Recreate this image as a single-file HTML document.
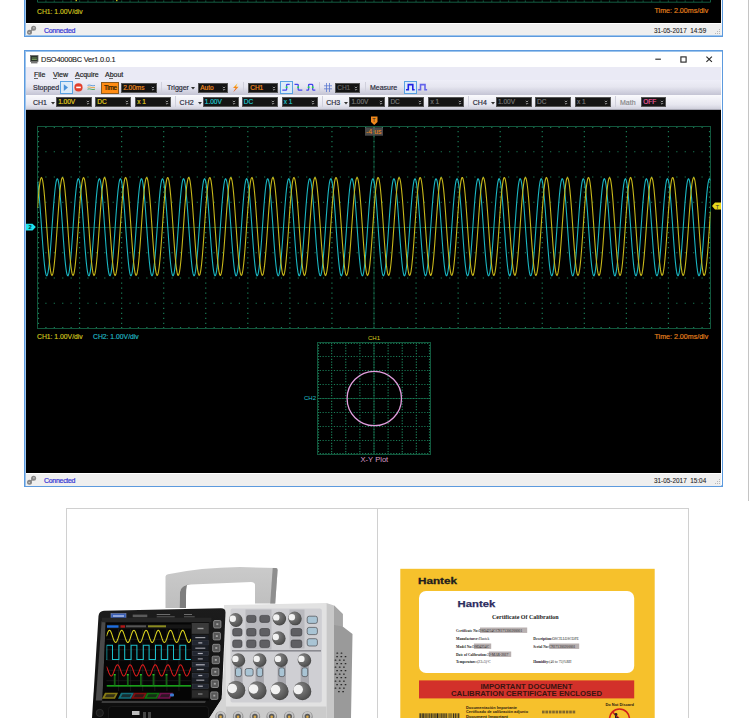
<!DOCTYPE html>
<html><head><meta charset="utf-8"><title>DSO4000BC</title>
<style>
*{box-sizing:border-box}
html,body{margin:0;padding:0;background:#fff}
body{width:750px;height:718px;overflow:hidden;position:relative;font-family:"Liberation Sans", sans-serif}
.a{position:absolute}
.t{position:absolute;white-space:nowrap;line-height:1}
.k{-webkit-text-stroke:0.18px currentColor}
</style></head><body>

<div class="a" style="left:24px;top:-10px;width:699px;height:47px;border:1px solid #5c9ade;border-top:none;background:#f4f4f4;box-shadow:inset 1px 0 0 #9cc4ec, inset 0 -1px 0 #9cc4ec"></div>
<div class="a" style="left:26px;top:0px;width:695px;height:23px;background:#000"></div>
<div class="a" style="left:26px;top:23px;width:695px;height:1px;background:#fff"></div>
<div class="a" style="left:26px;top:24px;width:695px;height:11px;background:#efefef"></div>
<svg class="a" style="left:0;top:0" width="750" height="40">
<path d="M37.5,-5 V2.2 H710.5 V-5" fill="none" stroke="#197a55" stroke-width="1" opacity="0.75"/>
<path d="M45.31,0.5h1.2v1.2h-1.2zM53.72,0.5h1.2v1.2h-1.2zM62.14,0.5h1.2v1.2h-1.2zM70.55,0.5h1.2v1.2h-1.2zM78.96,0.5h1.2v1.2h-1.2zM87.37,0.5h1.2v1.2h-1.2zM95.78,0.5h1.2v1.2h-1.2zM104.20,0.5h1.2v1.2h-1.2zM112.61,0.5h1.2v1.2h-1.2zM121.02,0.5h1.2v1.2h-1.2zM129.43,0.5h1.2v1.2h-1.2zM137.84,0.5h1.2v1.2h-1.2zM146.26,0.5h1.2v1.2h-1.2zM154.67,0.5h1.2v1.2h-1.2zM163.08,0.5h1.2v1.2h-1.2zM171.49,0.5h1.2v1.2h-1.2zM179.90,0.5h1.2v1.2h-1.2zM188.32,0.5h1.2v1.2h-1.2zM196.73,0.5h1.2v1.2h-1.2zM205.14,0.5h1.2v1.2h-1.2zM213.55,0.5h1.2v1.2h-1.2zM221.96,0.5h1.2v1.2h-1.2zM230.38,0.5h1.2v1.2h-1.2zM238.79,0.5h1.2v1.2h-1.2zM247.20,0.5h1.2v1.2h-1.2zM255.61,0.5h1.2v1.2h-1.2zM264.02,0.5h1.2v1.2h-1.2zM272.44,0.5h1.2v1.2h-1.2zM280.85,0.5h1.2v1.2h-1.2zM289.26,0.5h1.2v1.2h-1.2zM297.67,0.5h1.2v1.2h-1.2zM306.08,0.5h1.2v1.2h-1.2zM314.50,0.5h1.2v1.2h-1.2zM322.91,0.5h1.2v1.2h-1.2zM331.32,0.5h1.2v1.2h-1.2zM339.73,0.5h1.2v1.2h-1.2zM348.14,0.5h1.2v1.2h-1.2zM356.56,0.5h1.2v1.2h-1.2zM364.97,0.5h1.2v1.2h-1.2zM373.38,0.5h1.2v1.2h-1.2zM381.79,0.5h1.2v1.2h-1.2zM390.20,0.5h1.2v1.2h-1.2zM398.62,0.5h1.2v1.2h-1.2zM407.03,0.5h1.2v1.2h-1.2zM415.44,0.5h1.2v1.2h-1.2zM423.85,0.5h1.2v1.2h-1.2zM432.26,0.5h1.2v1.2h-1.2zM440.68,0.5h1.2v1.2h-1.2zM449.09,0.5h1.2v1.2h-1.2zM457.50,0.5h1.2v1.2h-1.2zM465.91,0.5h1.2v1.2h-1.2zM474.32,0.5h1.2v1.2h-1.2zM482.74,0.5h1.2v1.2h-1.2zM491.15,0.5h1.2v1.2h-1.2zM499.56,0.5h1.2v1.2h-1.2zM507.97,0.5h1.2v1.2h-1.2zM516.38,0.5h1.2v1.2h-1.2zM524.80,0.5h1.2v1.2h-1.2zM533.21,0.5h1.2v1.2h-1.2zM541.62,0.5h1.2v1.2h-1.2zM550.03,0.5h1.2v1.2h-1.2zM558.44,0.5h1.2v1.2h-1.2zM566.86,0.5h1.2v1.2h-1.2zM575.27,0.5h1.2v1.2h-1.2zM583.68,0.5h1.2v1.2h-1.2zM592.09,0.5h1.2v1.2h-1.2zM600.50,0.5h1.2v1.2h-1.2zM608.92,0.5h1.2v1.2h-1.2zM617.33,0.5h1.2v1.2h-1.2zM625.74,0.5h1.2v1.2h-1.2zM634.15,0.5h1.2v1.2h-1.2zM642.56,0.5h1.2v1.2h-1.2zM650.98,0.5h1.2v1.2h-1.2zM659.39,0.5h1.2v1.2h-1.2zM667.80,0.5h1.2v1.2h-1.2zM676.21,0.5h1.2v1.2h-1.2zM684.62,0.5h1.2v1.2h-1.2zM693.04,0.5h1.2v1.2h-1.2zM701.45,0.5h1.2v1.2h-1.2z" fill="#197a55" opacity="0.7"/>
<rect x="75.5" y="0" width="1.5" height="1.2" fill="#c8b81a"/><rect x="116" y="0" width="1.5" height="1.2" fill="#c8b81a"/>
</svg>
<div class="t" style="left:37px;top:8.5px;font-size:6.8px;color:#d0c41e;-webkit-text-stroke:0.15px #d0c41e">CH1: 1.00V/div</div>
<div class="t" style="left:654.5px;top:7.6px;font-size:7.1px;color:#e6821e;-webkit-text-stroke:0.15px #e6821e">Time: 2.00ms/div</div>
<svg class="a" style="left:24px;top:23px" width="14" height="13"><path d="M9.6,5.2 L5.5,9.2" stroke="#8a8a8a" stroke-width="1.6"/><circle cx="9.6" cy="5.2" r="2.5" fill="#858585"/><circle cx="5.5" cy="9.2" r="2.5" fill="#858585"/><circle cx="9.9" cy="4.9" r="0.8" fill="#c8c8c8"/><circle cx="5.2" cy="9.5" r="0.8" fill="#c8c8c8"/></svg>
<div class="t" style="left:44px;top:27px;font-size:7px;color:#3434d4;letter-spacing:-0.3px;-webkit-text-stroke:0.2px #3434d4">Connected</div>
<div class="t" style="left:654px;top:28px;font-size:6.4px;color:#1a1a1a;-webkit-text-stroke:0.08px #1a1a1a">31-05-2017&nbsp; 14:59</div>
<svg class="a" style="left:714px;top:28px" width="7" height="7" fill="#b8b8b8"><rect x="5" y="1" width="1" height="1"/><rect x="3" y="3" width="1" height="1"/><rect x="5" y="3" width="1" height="1"/><rect x="1" y="5" width="1" height="1"/><rect x="3" y="5" width="1" height="1"/><rect x="5" y="5" width="1" height="1"/></svg>
<div class="a" style="left:24px;top:50px;width:699px;height:437px;border:1px solid #5c9ade;background:#fff;box-shadow:inset 1px 1px 0 #9cc4ec, inset -0px -1px 0 #9cc4ec"></div>
<svg class="a" style="left:30px;top:55px" width="9" height="9"><rect x="0.5" y="0.5" width="7.5" height="6" fill="#2a322a" stroke="#6a6a6a" stroke-width="0.8"/><path d="M1.8,3 H6.8 M1.8,4.5 H6.8" stroke="#7aa060" stroke-width="0.9"/><rect x="1" y="7" width="6.5" height="1.4" fill="#777"/></svg>
<div class="t" style="left:41px;top:55.8px;font-size:7.4px;color:#1a1a1a;letter-spacing:-0.2px;-webkit-text-stroke:0.12px #1a1a1a">DSO4000BC Ver1.0.0.1</div>
<svg class="a" style="left:650px;top:53px" width="70" height="12" stroke="#2a2a2a" stroke-width="1.15" fill="none"><path d="M5.3,6.2 H10.9"/><rect x="30.9" y="3.9" width="5.2" height="5.2"/><path d="M56.4,3.6 L61.9,8.9 M61.9,3.6 L56.4,8.9"/></svg>
<div class="a" style="left:26px;top:67px;width:695px;height:13px;background:#eaeaf5"></div>
<div class="t k" style="left:34px;top:71px;font-size:7px;color:#222">File</div>
<div class="t k" style="left:53px;top:71px;font-size:7px;color:#222">View</div>
<div class="t k" style="left:75px;top:71px;font-size:7px;color:#222">Acquire</div>
<div class="t k" style="left:105px;top:71px;font-size:7px;color:#222">About</div>
<div class="a" style="left:34px;top:77.6px;width:3.5px;height:0.7px;background:#666"></div>
<div class="a" style="left:53px;top:77.6px;width:4px;height:0.7px;background:#666"></div>
<div class="a" style="left:75px;top:77.6px;width:4.5px;height:0.7px;background:#666"></div>
<div class="a" style="left:109px;top:77.6px;width:3.5px;height:0.7px;background:#666"></div>
<div class="a" style="left:26px;top:80px;width:695px;height:15px;background:linear-gradient(#eeeef8,#e6e6f0 45%,#c4c4d4)"></div>
<div class="a" style="left:26px;top:95px;width:695px;height:15px;background:linear-gradient(#fafafd,#e6e6ef 70%,#d0d0dc);border-bottom:1px solid #a8a8b4"></div>
<div class="t k" style="left:33px;top:83.8px;font-size:7px;color:#2a2a3a">Stopped</div>
<div class="a" style="left:60px;top:81px;width:13px;height:13px;background:#ddebf8;border:1.2px solid #5aa2e2"></div>
<svg class="a" style="left:63px;top:84px" width="6" height="8"><path d="M0.8,0.3 L5,3.6 L0.8,7z" fill="#4a92da"/></svg>
<svg class="a" style="left:73.5px;top:83px" width="9" height="9"><circle cx="4.5" cy="4.4" r="4.1" fill="#e2402c"/><rect x="2.2" y="3.6" width="4.6" height="1.6" fill="#fff"/></svg>
<svg class="a" style="left:86.5px;top:84px" width="9" height="7" fill="none" stroke-width="0.9"><path d="M0.5,1.4 Q2,0.6 4,1.4 T8,1.4" stroke="#5a9ad8"/><path d="M0.5,3.3 Q2,2.5 4,3.3 T8,3.3" stroke="#e8a040"/><path d="M0.5,5.2 Q2,4.4 4,5.2 T8,5.2" stroke="#48a860"/></svg>
<div class="a" style="left:101px;top:82px;width:18px;height:12px;background:#ff8c14;border:1px solid #8a5a20"></div>
<div class="t k" style="left:104px;top:84.8px;font-size:6.4px;letter-spacing:-0.3px;color:#241400">Time</div>
<div class="a" style="left:121px;top:83px;width:36px;height:10px;background:#141414;border:1px solid #555"></div>
<div class="t k" style="left:123.2px;top:85px;font-size:6.5px;color:#f08a1c">2.00ms</div>
<svg class="a" style="left:150.5px;top:85.5px" width="5" height="6" fill="none" stroke="#c8c8c8" stroke-width="0.7"><path d="M0.8,0.8 L2,2 L3.2,0.8 M0.8,3 L2,4.2 L3.2,3"/></svg>
<div class="a" style="left:161px;top:82px;width:1px;height:11px;background:#d0d0dc"></div>
<div class="t k" style="left:167px;top:83.8px;font-size:7px;color:#2a2a3a">Trigger</div>
<svg class="a" style="left:191px;top:87px" width="5" height="3"><path d="M0,0 H4 L2,2.5z" fill="#333"/></svg>
<div class="a" style="left:198px;top:83px;width:30px;height:10px;background:#141414;border:1px solid #555"></div>
<div class="t k" style="left:200.2px;top:85px;font-size:6.5px;color:#f08a1c">Auto</div>
<svg class="a" style="left:221.5px;top:85.5px" width="5" height="6" fill="none" stroke="#c8c8c8" stroke-width="0.7"><path d="M0.8,0.8 L2,2 L3.2,0.8 M0.8,3 L2,4.2 L3.2,3"/></svg>
<svg class="a" style="left:232px;top:83px" width="8" height="10"><defs><linearGradient id="lg" x1="0" y1="0" x2="0" y2="1"><stop offset="0" stop-color="#ffd020"/><stop offset="1" stop-color="#e83a10"/></linearGradient></defs><path d="M5.6,0.3 L1,5 H3.6 L1.2,9.3 L6.6,3.8 H4z" fill="url(#lg)"/></svg>
<div class="a" style="left:243px;top:82px;width:1px;height:11px;background:#d0d0dc"></div>
<div class="a" style="left:248px;top:83px;width:30px;height:10px;background:#141414;border:1px solid #555"></div>
<div class="t k" style="left:250.2px;top:85px;font-size:6.5px;color:#f08a1c">CH1</div>
<svg class="a" style="left:271.5px;top:85.5px" width="5" height="6" fill="none" stroke="#c8c8c8" stroke-width="0.7"><path d="M0.8,0.8 L2,2 L3.2,0.8 M0.8,3 L2,4.2 L3.2,3"/></svg>
<div class="a" style="left:280px;top:81px;width:13px;height:13px;background:#ddebf8;border:1.2px solid #5aa2e2"></div>
<svg class="a" style="left:278px;top:79px" width="40" height="16" fill="none" stroke="#4646ee" stroke-width="1.3"><path d="M4.3,11.2 H7.8 Q8.6,11.2 8.6,10.4 V6.1 Q8.6,5.3 9.4,5.3 H11.7"/><path d="M16.5,5.3 H19.4 Q20.2,5.3 20.2,6.1 V10.4 Q20.2,11.2 21,11.2 H24.3"/><path d="M28.3,11.2 H29.8 Q30.6,11.2 30.6,10.4 V6.1 Q30.6,5.3 31.4,5.3 H33.9 Q34.7,5.3 34.7,6.1 V10.4 Q34.7,11.2 35.5,11.2 H37.3"/><g fill="#22e040" stroke="none"><circle cx="8.6" cy="8.3" r="0.95"/><circle cx="20.2" cy="8.3" r="0.95"/><circle cx="30.6" cy="8.3" r="0.95"/><circle cx="34.7" cy="8.3" r="0.95"/></g></svg>
<div class="a" style="left:319px;top:82px;width:1px;height:11px;background:#d0d0dc"></div>
<svg class="a" style="left:323px;top:82px" width="10" height="11" fill="none" stroke="#5a78d0" stroke-width="0.8"><path d="M3.5,1 V10 M6.5,1 V10 M1,3.8 H9 M1,6.8 H9"/></svg>
<div class="a" style="left:335px;top:83px;width:25px;height:10px;background:#141414;border:1px solid #555"></div>
<div class="t k" style="left:337.2px;top:85px;font-size:6.5px;color:#666">CH1</div>
<svg class="a" style="left:353.5px;top:85.5px" width="5" height="6" fill="none" stroke="#c8c8c8" stroke-width="0.7"><path d="M0.8,0.8 L2,2 L3.2,0.8 M0.8,3 L2,4.2 L3.2,3"/></svg>
<div class="a" style="left:365px;top:82px;width:1px;height:11px;background:#d0d0dc"></div>
<div class="t k" style="left:370px;top:83.8px;font-size:7px;color:#2a2a3a">Measure</div>
<div class="a" style="left:404px;top:81px;width:13px;height:13px;background:#ddebf8;border:1.2px solid #5aa2e2"></div>
<svg class="a" style="left:400px;top:79px" width="32" height="16" fill="none" stroke-width="1.6"><path d="M6,10.7 H8.3 V5.6 H12.8 V10.7 H14.7" stroke="#2222e4"/><path d="M418.2,10.7 H420.5 V5.6 H425 V10.7 H427.1" transform="translate(-400 0)" stroke="#6464ea"/></svg>
<div class="t k" style="left:33.0px;top:99px;font-size:7px;color:#2a2a3a">CH1</div>
<svg class="a" style="left:51.0px;top:101.5px" width="5" height="3"><path d="M0,0 H4 L2,2.5z" fill="#333"/></svg>
<div class="a" style="left:56.0px;top:97px;width:36px;height:10px;background:#141414;border:1px solid #555"></div>
<div class="t k" style="left:58.2px;top:99px;font-size:6.5px;color:#e6d21c">1.00V</div>
<svg class="a" style="left:85.5px;top:99.5px" width="5" height="6" fill="none" stroke="#c8c8c8" stroke-width="0.7"><path d="M0.8,0.8 L2,2 L3.2,0.8 M0.8,3 L2,4.2 L3.2,3"/></svg>
<div class="a" style="left:95.0px;top:97px;width:36px;height:10px;background:#141414;border:1px solid #555"></div>
<div class="t k" style="left:97.2px;top:99px;font-size:6.5px;color:#e6d21c">DC</div>
<svg class="a" style="left:124.5px;top:99.5px" width="5" height="6" fill="none" stroke="#c8c8c8" stroke-width="0.7"><path d="M0.8,0.8 L2,2 L3.2,0.8 M0.8,3 L2,4.2 L3.2,3"/></svg>
<div class="a" style="left:135.0px;top:97px;width:36px;height:10px;background:#141414;border:1px solid #555"></div>
<div class="t k" style="left:137.2px;top:99px;font-size:6.5px;color:#e6d21c">x 1</div>
<svg class="a" style="left:164.5px;top:99.5px" width="5" height="6" fill="none" stroke="#c8c8c8" stroke-width="0.7"><path d="M0.8,0.8 L2,2 L3.2,0.8 M0.8,3 L2,4.2 L3.2,3"/></svg>
<div class="a" style="left:175.0px;top:96px;width:1px;height:11px;background:#d0d0dc"></div>
<div class="t k" style="left:179.6px;top:99px;font-size:7px;color:#2a2a3a">CH2</div>
<svg class="a" style="left:197.6px;top:101.5px" width="5" height="3"><path d="M0,0 H4 L2,2.5z" fill="#333"/></svg>
<div class="a" style="left:202.6px;top:97px;width:36px;height:10px;background:#141414;border:1px solid #555"></div>
<div class="t k" style="left:204.79999999999998px;top:99px;font-size:6.5px;color:#22c8d0">1.00V</div>
<svg class="a" style="left:232.1px;top:99.5px" width="5" height="6" fill="none" stroke="#c8c8c8" stroke-width="0.7"><path d="M0.8,0.8 L2,2 L3.2,0.8 M0.8,3 L2,4.2 L3.2,3"/></svg>
<div class="a" style="left:241.6px;top:97px;width:36px;height:10px;background:#141414;border:1px solid #555"></div>
<div class="t k" style="left:243.79999999999998px;top:99px;font-size:6.5px;color:#22c8d0">DC</div>
<svg class="a" style="left:271.1px;top:99.5px" width="5" height="6" fill="none" stroke="#c8c8c8" stroke-width="0.7"><path d="M0.8,0.8 L2,2 L3.2,0.8 M0.8,3 L2,4.2 L3.2,3"/></svg>
<div class="a" style="left:281.6px;top:97px;width:36px;height:10px;background:#141414;border:1px solid #555"></div>
<div class="t k" style="left:283.8px;top:99px;font-size:6.5px;color:#22c8d0">x 1</div>
<svg class="a" style="left:311.1px;top:99.5px" width="5" height="6" fill="none" stroke="#c8c8c8" stroke-width="0.7"><path d="M0.8,0.8 L2,2 L3.2,0.8 M0.8,3 L2,4.2 L3.2,3"/></svg>
<div class="a" style="left:321.6px;top:96px;width:1px;height:11px;background:#d0d0dc"></div>
<div class="t k" style="left:326.2px;top:99px;font-size:7px;color:#2a2a3a">CH3</div>
<svg class="a" style="left:344.2px;top:101.5px" width="5" height="3"><path d="M0,0 H4 L2,2.5z" fill="#333"/></svg>
<div class="a" style="left:349.2px;top:97px;width:36px;height:10px;background:#141414;border:1px solid #555"></div>
<div class="t k" style="left:351.4px;top:99px;font-size:6.5px;color:#777">1.00V</div>
<svg class="a" style="left:378.7px;top:99.5px" width="5" height="6" fill="none" stroke="#c8c8c8" stroke-width="0.7"><path d="M0.8,0.8 L2,2 L3.2,0.8 M0.8,3 L2,4.2 L3.2,3"/></svg>
<div class="a" style="left:388.2px;top:97px;width:36px;height:10px;background:#141414;border:1px solid #555"></div>
<div class="t k" style="left:390.4px;top:99px;font-size:6.5px;color:#777">DC</div>
<svg class="a" style="left:417.7px;top:99.5px" width="5" height="6" fill="none" stroke="#c8c8c8" stroke-width="0.7"><path d="M0.8,0.8 L2,2 L3.2,0.8 M0.8,3 L2,4.2 L3.2,3"/></svg>
<div class="a" style="left:428.2px;top:97px;width:36px;height:10px;background:#141414;border:1px solid #555"></div>
<div class="t k" style="left:430.4px;top:99px;font-size:6.5px;color:#777">x 1</div>
<svg class="a" style="left:457.7px;top:99.5px" width="5" height="6" fill="none" stroke="#c8c8c8" stroke-width="0.7"><path d="M0.8,0.8 L2,2 L3.2,0.8 M0.8,3 L2,4.2 L3.2,3"/></svg>
<div class="a" style="left:468.2px;top:96px;width:1px;height:11px;background:#d0d0dc"></div>
<div class="t k" style="left:472.79999999999995px;top:99px;font-size:7px;color:#2a2a3a">CH4</div>
<svg class="a" style="left:490.79999999999995px;top:101.5px" width="5" height="3"><path d="M0,0 H4 L2,2.5z" fill="#333"/></svg>
<div class="a" style="left:495.79999999999995px;top:97px;width:36px;height:10px;background:#141414;border:1px solid #555"></div>
<div class="t k" style="left:497.99999999999994px;top:99px;font-size:6.5px;color:#777">1.00V</div>
<svg class="a" style="left:525.3px;top:99.5px" width="5" height="6" fill="none" stroke="#c8c8c8" stroke-width="0.7"><path d="M0.8,0.8 L2,2 L3.2,0.8 M0.8,3 L2,4.2 L3.2,3"/></svg>
<div class="a" style="left:534.8px;top:97px;width:36px;height:10px;background:#141414;border:1px solid #555"></div>
<div class="t k" style="left:537.0px;top:99px;font-size:6.5px;color:#777">DC</div>
<svg class="a" style="left:564.3px;top:99.5px" width="5" height="6" fill="none" stroke="#c8c8c8" stroke-width="0.7"><path d="M0.8,0.8 L2,2 L3.2,0.8 M0.8,3 L2,4.2 L3.2,3"/></svg>
<div class="a" style="left:574.8px;top:97px;width:36px;height:10px;background:#141414;border:1px solid #555"></div>
<div class="t k" style="left:577.0px;top:99px;font-size:6.5px;color:#777">x 1</div>
<svg class="a" style="left:604.3px;top:99.5px" width="5" height="6" fill="none" stroke="#c8c8c8" stroke-width="0.7"><path d="M0.8,0.8 L2,2 L3.2,0.8 M0.8,3 L2,4.2 L3.2,3"/></svg>
<div class="a" style="left:614.8px;top:96px;width:1px;height:11px;background:#d0d0dc"></div>
<div class="t k" style="left:620px;top:99px;font-size:7px;color:#888">Math</div>
<div class="a" style="left:641px;top:97px;width:25px;height:10px;background:#141414;border:1px solid #555"></div>
<div class="t k" style="left:643.2px;top:99px;font-size:6.5px;color:#ec5c9c">OFF</div>
<svg class="a" style="left:659.5px;top:99.5px" width="5" height="6" fill="none" stroke="#c8c8c8" stroke-width="0.7"><path d="M0.8,0.8 L2,2 L3.2,0.8 M0.8,3 L2,4.2 L3.2,3"/></svg>
<div class="a" style="left:26px;top:110px;width:695px;height:363px;background:#000"></div>
<div class="a" style="left:26px;top:473px;width:695px;height:1px;background:#fff"></div>
<div class="a" style="left:26px;top:474px;width:695px;height:12px;background:#efefef"></div>
<svg class="a" style="left:24px;top:473px" width="14" height="13"><path d="M9.6,5.2 L5.5,9.2" stroke="#8a8a8a" stroke-width="1.6"/><circle cx="9.6" cy="5.2" r="2.5" fill="#858585"/><circle cx="5.5" cy="9.2" r="2.5" fill="#858585"/><circle cx="9.9" cy="4.9" r="0.8" fill="#c8c8c8"/><circle cx="5.2" cy="9.5" r="0.8" fill="#c8c8c8"/></svg>
<div class="t" style="left:44px;top:477px;font-size:7px;color:#3434d4;letter-spacing:-0.3px;-webkit-text-stroke:0.2px #3434d4">Connected</div>
<div class="t" style="left:654px;top:478px;font-size:6.4px;color:#1a1a1a;-webkit-text-stroke:0.08px #1a1a1a">31-05-2017&nbsp; 15:04</div>
<svg class="a" style="left:714px;top:478px" width="7" height="7" fill="#b8b8b8"><rect x="5" y="1" width="1" height="1"/><rect x="3" y="3" width="1" height="1"/><rect x="5" y="3" width="1" height="1"/><rect x="1" y="5" width="1" height="1"/><rect x="3" y="5" width="1" height="1"/><rect x="5" y="5" width="1" height="1"/></svg>
<svg class="a" style="left:0;top:0" width="750" height="490">
<rect x="37.5" y="126.5" width="673.0" height="202.0" fill="none" stroke="#197a55" stroke-width="1" opacity="0.7"/>
<path d="M374.00,126.5 V328.5 M37.5,227.50 H710.5" stroke="#197a55" stroke-width="1" opacity="0.55"/>
<path d="M78.96,130.95h1.2v1.2h-1.2zM78.96,136.00h1.2v1.2h-1.2zM78.96,141.05h1.2v1.2h-1.2zM78.96,146.10h1.2v1.2h-1.2zM78.96,151.15h1.2v1.2h-1.2zM78.96,156.20h1.2v1.2h-1.2zM78.96,161.25h1.2v1.2h-1.2zM78.96,166.30h1.2v1.2h-1.2zM78.96,171.35h1.2v1.2h-1.2zM78.96,176.40h1.2v1.2h-1.2zM78.96,181.45h1.2v1.2h-1.2zM78.96,186.50h1.2v1.2h-1.2zM78.96,191.55h1.2v1.2h-1.2zM78.96,196.60h1.2v1.2h-1.2zM78.96,201.65h1.2v1.2h-1.2zM78.96,206.70h1.2v1.2h-1.2zM78.96,211.75h1.2v1.2h-1.2zM78.96,216.80h1.2v1.2h-1.2zM78.96,221.85h1.2v1.2h-1.2zM78.96,226.90h1.2v1.2h-1.2zM78.96,231.95h1.2v1.2h-1.2zM78.96,237.00h1.2v1.2h-1.2zM78.96,242.05h1.2v1.2h-1.2zM78.96,247.10h1.2v1.2h-1.2zM78.96,252.15h1.2v1.2h-1.2zM78.96,257.20h1.2v1.2h-1.2zM78.96,262.25h1.2v1.2h-1.2zM78.96,267.30h1.2v1.2h-1.2zM78.96,272.35h1.2v1.2h-1.2zM78.96,277.40h1.2v1.2h-1.2zM78.96,282.45h1.2v1.2h-1.2zM78.96,287.50h1.2v1.2h-1.2zM78.96,292.55h1.2v1.2h-1.2zM78.96,297.60h1.2v1.2h-1.2zM78.96,302.65h1.2v1.2h-1.2zM78.96,307.70h1.2v1.2h-1.2zM78.96,312.75h1.2v1.2h-1.2zM78.96,317.80h1.2v1.2h-1.2zM78.96,322.85h1.2v1.2h-1.2zM121.03,130.95h1.2v1.2h-1.2zM121.03,136.00h1.2v1.2h-1.2zM121.03,141.05h1.2v1.2h-1.2zM121.03,146.10h1.2v1.2h-1.2zM121.03,151.15h1.2v1.2h-1.2zM121.03,156.20h1.2v1.2h-1.2zM121.03,161.25h1.2v1.2h-1.2zM121.03,166.30h1.2v1.2h-1.2zM121.03,171.35h1.2v1.2h-1.2zM121.03,176.40h1.2v1.2h-1.2zM121.03,181.45h1.2v1.2h-1.2zM121.03,186.50h1.2v1.2h-1.2zM121.03,191.55h1.2v1.2h-1.2zM121.03,196.60h1.2v1.2h-1.2zM121.03,201.65h1.2v1.2h-1.2zM121.03,206.70h1.2v1.2h-1.2zM121.03,211.75h1.2v1.2h-1.2zM121.03,216.80h1.2v1.2h-1.2zM121.03,221.85h1.2v1.2h-1.2zM121.03,226.90h1.2v1.2h-1.2zM121.03,231.95h1.2v1.2h-1.2zM121.03,237.00h1.2v1.2h-1.2zM121.03,242.05h1.2v1.2h-1.2zM121.03,247.10h1.2v1.2h-1.2zM121.03,252.15h1.2v1.2h-1.2zM121.03,257.20h1.2v1.2h-1.2zM121.03,262.25h1.2v1.2h-1.2zM121.03,267.30h1.2v1.2h-1.2zM121.03,272.35h1.2v1.2h-1.2zM121.03,277.40h1.2v1.2h-1.2zM121.03,282.45h1.2v1.2h-1.2zM121.03,287.50h1.2v1.2h-1.2zM121.03,292.55h1.2v1.2h-1.2zM121.03,297.60h1.2v1.2h-1.2zM121.03,302.65h1.2v1.2h-1.2zM121.03,307.70h1.2v1.2h-1.2zM121.03,312.75h1.2v1.2h-1.2zM121.03,317.80h1.2v1.2h-1.2zM121.03,322.85h1.2v1.2h-1.2zM163.09,130.95h1.2v1.2h-1.2zM163.09,136.00h1.2v1.2h-1.2zM163.09,141.05h1.2v1.2h-1.2zM163.09,146.10h1.2v1.2h-1.2zM163.09,151.15h1.2v1.2h-1.2zM163.09,156.20h1.2v1.2h-1.2zM163.09,161.25h1.2v1.2h-1.2zM163.09,166.30h1.2v1.2h-1.2zM163.09,171.35h1.2v1.2h-1.2zM163.09,176.40h1.2v1.2h-1.2zM163.09,181.45h1.2v1.2h-1.2zM163.09,186.50h1.2v1.2h-1.2zM163.09,191.55h1.2v1.2h-1.2zM163.09,196.60h1.2v1.2h-1.2zM163.09,201.65h1.2v1.2h-1.2zM163.09,206.70h1.2v1.2h-1.2zM163.09,211.75h1.2v1.2h-1.2zM163.09,216.80h1.2v1.2h-1.2zM163.09,221.85h1.2v1.2h-1.2zM163.09,226.90h1.2v1.2h-1.2zM163.09,231.95h1.2v1.2h-1.2zM163.09,237.00h1.2v1.2h-1.2zM163.09,242.05h1.2v1.2h-1.2zM163.09,247.10h1.2v1.2h-1.2zM163.09,252.15h1.2v1.2h-1.2zM163.09,257.20h1.2v1.2h-1.2zM163.09,262.25h1.2v1.2h-1.2zM163.09,267.30h1.2v1.2h-1.2zM163.09,272.35h1.2v1.2h-1.2zM163.09,277.40h1.2v1.2h-1.2zM163.09,282.45h1.2v1.2h-1.2zM163.09,287.50h1.2v1.2h-1.2zM163.09,292.55h1.2v1.2h-1.2zM163.09,297.60h1.2v1.2h-1.2zM163.09,302.65h1.2v1.2h-1.2zM163.09,307.70h1.2v1.2h-1.2zM163.09,312.75h1.2v1.2h-1.2zM163.09,317.80h1.2v1.2h-1.2zM163.09,322.85h1.2v1.2h-1.2zM205.15,130.95h1.2v1.2h-1.2zM205.15,136.00h1.2v1.2h-1.2zM205.15,141.05h1.2v1.2h-1.2zM205.15,146.10h1.2v1.2h-1.2zM205.15,151.15h1.2v1.2h-1.2zM205.15,156.20h1.2v1.2h-1.2zM205.15,161.25h1.2v1.2h-1.2zM205.15,166.30h1.2v1.2h-1.2zM205.15,171.35h1.2v1.2h-1.2zM205.15,176.40h1.2v1.2h-1.2zM205.15,181.45h1.2v1.2h-1.2zM205.15,186.50h1.2v1.2h-1.2zM205.15,191.55h1.2v1.2h-1.2zM205.15,196.60h1.2v1.2h-1.2zM205.15,201.65h1.2v1.2h-1.2zM205.15,206.70h1.2v1.2h-1.2zM205.15,211.75h1.2v1.2h-1.2zM205.15,216.80h1.2v1.2h-1.2zM205.15,221.85h1.2v1.2h-1.2zM205.15,226.90h1.2v1.2h-1.2zM205.15,231.95h1.2v1.2h-1.2zM205.15,237.00h1.2v1.2h-1.2zM205.15,242.05h1.2v1.2h-1.2zM205.15,247.10h1.2v1.2h-1.2zM205.15,252.15h1.2v1.2h-1.2zM205.15,257.20h1.2v1.2h-1.2zM205.15,262.25h1.2v1.2h-1.2zM205.15,267.30h1.2v1.2h-1.2zM205.15,272.35h1.2v1.2h-1.2zM205.15,277.40h1.2v1.2h-1.2zM205.15,282.45h1.2v1.2h-1.2zM205.15,287.50h1.2v1.2h-1.2zM205.15,292.55h1.2v1.2h-1.2zM205.15,297.60h1.2v1.2h-1.2zM205.15,302.65h1.2v1.2h-1.2zM205.15,307.70h1.2v1.2h-1.2zM205.15,312.75h1.2v1.2h-1.2zM205.15,317.80h1.2v1.2h-1.2zM205.15,322.85h1.2v1.2h-1.2zM247.21,130.95h1.2v1.2h-1.2zM247.21,136.00h1.2v1.2h-1.2zM247.21,141.05h1.2v1.2h-1.2zM247.21,146.10h1.2v1.2h-1.2zM247.21,151.15h1.2v1.2h-1.2zM247.21,156.20h1.2v1.2h-1.2zM247.21,161.25h1.2v1.2h-1.2zM247.21,166.30h1.2v1.2h-1.2zM247.21,171.35h1.2v1.2h-1.2zM247.21,176.40h1.2v1.2h-1.2zM247.21,181.45h1.2v1.2h-1.2zM247.21,186.50h1.2v1.2h-1.2zM247.21,191.55h1.2v1.2h-1.2zM247.21,196.60h1.2v1.2h-1.2zM247.21,201.65h1.2v1.2h-1.2zM247.21,206.70h1.2v1.2h-1.2zM247.21,211.75h1.2v1.2h-1.2zM247.21,216.80h1.2v1.2h-1.2zM247.21,221.85h1.2v1.2h-1.2zM247.21,226.90h1.2v1.2h-1.2zM247.21,231.95h1.2v1.2h-1.2zM247.21,237.00h1.2v1.2h-1.2zM247.21,242.05h1.2v1.2h-1.2zM247.21,247.10h1.2v1.2h-1.2zM247.21,252.15h1.2v1.2h-1.2zM247.21,257.20h1.2v1.2h-1.2zM247.21,262.25h1.2v1.2h-1.2zM247.21,267.30h1.2v1.2h-1.2zM247.21,272.35h1.2v1.2h-1.2zM247.21,277.40h1.2v1.2h-1.2zM247.21,282.45h1.2v1.2h-1.2zM247.21,287.50h1.2v1.2h-1.2zM247.21,292.55h1.2v1.2h-1.2zM247.21,297.60h1.2v1.2h-1.2zM247.21,302.65h1.2v1.2h-1.2zM247.21,307.70h1.2v1.2h-1.2zM247.21,312.75h1.2v1.2h-1.2zM247.21,317.80h1.2v1.2h-1.2zM247.21,322.85h1.2v1.2h-1.2zM289.27,130.95h1.2v1.2h-1.2zM289.27,136.00h1.2v1.2h-1.2zM289.27,141.05h1.2v1.2h-1.2zM289.27,146.10h1.2v1.2h-1.2zM289.27,151.15h1.2v1.2h-1.2zM289.27,156.20h1.2v1.2h-1.2zM289.27,161.25h1.2v1.2h-1.2zM289.27,166.30h1.2v1.2h-1.2zM289.27,171.35h1.2v1.2h-1.2zM289.27,176.40h1.2v1.2h-1.2zM289.27,181.45h1.2v1.2h-1.2zM289.27,186.50h1.2v1.2h-1.2zM289.27,191.55h1.2v1.2h-1.2zM289.27,196.60h1.2v1.2h-1.2zM289.27,201.65h1.2v1.2h-1.2zM289.27,206.70h1.2v1.2h-1.2zM289.27,211.75h1.2v1.2h-1.2zM289.27,216.80h1.2v1.2h-1.2zM289.27,221.85h1.2v1.2h-1.2zM289.27,226.90h1.2v1.2h-1.2zM289.27,231.95h1.2v1.2h-1.2zM289.27,237.00h1.2v1.2h-1.2zM289.27,242.05h1.2v1.2h-1.2zM289.27,247.10h1.2v1.2h-1.2zM289.27,252.15h1.2v1.2h-1.2zM289.27,257.20h1.2v1.2h-1.2zM289.27,262.25h1.2v1.2h-1.2zM289.27,267.30h1.2v1.2h-1.2zM289.27,272.35h1.2v1.2h-1.2zM289.27,277.40h1.2v1.2h-1.2zM289.27,282.45h1.2v1.2h-1.2zM289.27,287.50h1.2v1.2h-1.2zM289.27,292.55h1.2v1.2h-1.2zM289.27,297.60h1.2v1.2h-1.2zM289.27,302.65h1.2v1.2h-1.2zM289.27,307.70h1.2v1.2h-1.2zM289.27,312.75h1.2v1.2h-1.2zM289.27,317.80h1.2v1.2h-1.2zM289.27,322.85h1.2v1.2h-1.2zM331.34,130.95h1.2v1.2h-1.2zM331.34,136.00h1.2v1.2h-1.2zM331.34,141.05h1.2v1.2h-1.2zM331.34,146.10h1.2v1.2h-1.2zM331.34,151.15h1.2v1.2h-1.2zM331.34,156.20h1.2v1.2h-1.2zM331.34,161.25h1.2v1.2h-1.2zM331.34,166.30h1.2v1.2h-1.2zM331.34,171.35h1.2v1.2h-1.2zM331.34,176.40h1.2v1.2h-1.2zM331.34,181.45h1.2v1.2h-1.2zM331.34,186.50h1.2v1.2h-1.2zM331.34,191.55h1.2v1.2h-1.2zM331.34,196.60h1.2v1.2h-1.2zM331.34,201.65h1.2v1.2h-1.2zM331.34,206.70h1.2v1.2h-1.2zM331.34,211.75h1.2v1.2h-1.2zM331.34,216.80h1.2v1.2h-1.2zM331.34,221.85h1.2v1.2h-1.2zM331.34,226.90h1.2v1.2h-1.2zM331.34,231.95h1.2v1.2h-1.2zM331.34,237.00h1.2v1.2h-1.2zM331.34,242.05h1.2v1.2h-1.2zM331.34,247.10h1.2v1.2h-1.2zM331.34,252.15h1.2v1.2h-1.2zM331.34,257.20h1.2v1.2h-1.2zM331.34,262.25h1.2v1.2h-1.2zM331.34,267.30h1.2v1.2h-1.2zM331.34,272.35h1.2v1.2h-1.2zM331.34,277.40h1.2v1.2h-1.2zM331.34,282.45h1.2v1.2h-1.2zM331.34,287.50h1.2v1.2h-1.2zM331.34,292.55h1.2v1.2h-1.2zM331.34,297.60h1.2v1.2h-1.2zM331.34,302.65h1.2v1.2h-1.2zM331.34,307.70h1.2v1.2h-1.2zM331.34,312.75h1.2v1.2h-1.2zM331.34,317.80h1.2v1.2h-1.2zM331.34,322.85h1.2v1.2h-1.2zM373.40,130.95h1.2v1.2h-1.2zM373.40,136.00h1.2v1.2h-1.2zM373.40,141.05h1.2v1.2h-1.2zM373.40,146.10h1.2v1.2h-1.2zM373.40,151.15h1.2v1.2h-1.2zM373.40,156.20h1.2v1.2h-1.2zM373.40,161.25h1.2v1.2h-1.2zM373.40,166.30h1.2v1.2h-1.2zM373.40,171.35h1.2v1.2h-1.2zM373.40,176.40h1.2v1.2h-1.2zM373.40,181.45h1.2v1.2h-1.2zM373.40,186.50h1.2v1.2h-1.2zM373.40,191.55h1.2v1.2h-1.2zM373.40,196.60h1.2v1.2h-1.2zM373.40,201.65h1.2v1.2h-1.2zM373.40,206.70h1.2v1.2h-1.2zM373.40,211.75h1.2v1.2h-1.2zM373.40,216.80h1.2v1.2h-1.2zM373.40,221.85h1.2v1.2h-1.2zM373.40,226.90h1.2v1.2h-1.2zM373.40,231.95h1.2v1.2h-1.2zM373.40,237.00h1.2v1.2h-1.2zM373.40,242.05h1.2v1.2h-1.2zM373.40,247.10h1.2v1.2h-1.2zM373.40,252.15h1.2v1.2h-1.2zM373.40,257.20h1.2v1.2h-1.2zM373.40,262.25h1.2v1.2h-1.2zM373.40,267.30h1.2v1.2h-1.2zM373.40,272.35h1.2v1.2h-1.2zM373.40,277.40h1.2v1.2h-1.2zM373.40,282.45h1.2v1.2h-1.2zM373.40,287.50h1.2v1.2h-1.2zM373.40,292.55h1.2v1.2h-1.2zM373.40,297.60h1.2v1.2h-1.2zM373.40,302.65h1.2v1.2h-1.2zM373.40,307.70h1.2v1.2h-1.2zM373.40,312.75h1.2v1.2h-1.2zM373.40,317.80h1.2v1.2h-1.2zM373.40,322.85h1.2v1.2h-1.2zM415.46,130.95h1.2v1.2h-1.2zM415.46,136.00h1.2v1.2h-1.2zM415.46,141.05h1.2v1.2h-1.2zM415.46,146.10h1.2v1.2h-1.2zM415.46,151.15h1.2v1.2h-1.2zM415.46,156.20h1.2v1.2h-1.2zM415.46,161.25h1.2v1.2h-1.2zM415.46,166.30h1.2v1.2h-1.2zM415.46,171.35h1.2v1.2h-1.2zM415.46,176.40h1.2v1.2h-1.2zM415.46,181.45h1.2v1.2h-1.2zM415.46,186.50h1.2v1.2h-1.2zM415.46,191.55h1.2v1.2h-1.2zM415.46,196.60h1.2v1.2h-1.2zM415.46,201.65h1.2v1.2h-1.2zM415.46,206.70h1.2v1.2h-1.2zM415.46,211.75h1.2v1.2h-1.2zM415.46,216.80h1.2v1.2h-1.2zM415.46,221.85h1.2v1.2h-1.2zM415.46,226.90h1.2v1.2h-1.2zM415.46,231.95h1.2v1.2h-1.2zM415.46,237.00h1.2v1.2h-1.2zM415.46,242.05h1.2v1.2h-1.2zM415.46,247.10h1.2v1.2h-1.2zM415.46,252.15h1.2v1.2h-1.2zM415.46,257.20h1.2v1.2h-1.2zM415.46,262.25h1.2v1.2h-1.2zM415.46,267.30h1.2v1.2h-1.2zM415.46,272.35h1.2v1.2h-1.2zM415.46,277.40h1.2v1.2h-1.2zM415.46,282.45h1.2v1.2h-1.2zM415.46,287.50h1.2v1.2h-1.2zM415.46,292.55h1.2v1.2h-1.2zM415.46,297.60h1.2v1.2h-1.2zM415.46,302.65h1.2v1.2h-1.2zM415.46,307.70h1.2v1.2h-1.2zM415.46,312.75h1.2v1.2h-1.2zM415.46,317.80h1.2v1.2h-1.2zM415.46,322.85h1.2v1.2h-1.2zM457.52,130.95h1.2v1.2h-1.2zM457.52,136.00h1.2v1.2h-1.2zM457.52,141.05h1.2v1.2h-1.2zM457.52,146.10h1.2v1.2h-1.2zM457.52,151.15h1.2v1.2h-1.2zM457.52,156.20h1.2v1.2h-1.2zM457.52,161.25h1.2v1.2h-1.2zM457.52,166.30h1.2v1.2h-1.2zM457.52,171.35h1.2v1.2h-1.2zM457.52,176.40h1.2v1.2h-1.2zM457.52,181.45h1.2v1.2h-1.2zM457.52,186.50h1.2v1.2h-1.2zM457.52,191.55h1.2v1.2h-1.2zM457.52,196.60h1.2v1.2h-1.2zM457.52,201.65h1.2v1.2h-1.2zM457.52,206.70h1.2v1.2h-1.2zM457.52,211.75h1.2v1.2h-1.2zM457.52,216.80h1.2v1.2h-1.2zM457.52,221.85h1.2v1.2h-1.2zM457.52,226.90h1.2v1.2h-1.2zM457.52,231.95h1.2v1.2h-1.2zM457.52,237.00h1.2v1.2h-1.2zM457.52,242.05h1.2v1.2h-1.2zM457.52,247.10h1.2v1.2h-1.2zM457.52,252.15h1.2v1.2h-1.2zM457.52,257.20h1.2v1.2h-1.2zM457.52,262.25h1.2v1.2h-1.2zM457.52,267.30h1.2v1.2h-1.2zM457.52,272.35h1.2v1.2h-1.2zM457.52,277.40h1.2v1.2h-1.2zM457.52,282.45h1.2v1.2h-1.2zM457.52,287.50h1.2v1.2h-1.2zM457.52,292.55h1.2v1.2h-1.2zM457.52,297.60h1.2v1.2h-1.2zM457.52,302.65h1.2v1.2h-1.2zM457.52,307.70h1.2v1.2h-1.2zM457.52,312.75h1.2v1.2h-1.2zM457.52,317.80h1.2v1.2h-1.2zM457.52,322.85h1.2v1.2h-1.2zM499.59,130.95h1.2v1.2h-1.2zM499.59,136.00h1.2v1.2h-1.2zM499.59,141.05h1.2v1.2h-1.2zM499.59,146.10h1.2v1.2h-1.2zM499.59,151.15h1.2v1.2h-1.2zM499.59,156.20h1.2v1.2h-1.2zM499.59,161.25h1.2v1.2h-1.2zM499.59,166.30h1.2v1.2h-1.2zM499.59,171.35h1.2v1.2h-1.2zM499.59,176.40h1.2v1.2h-1.2zM499.59,181.45h1.2v1.2h-1.2zM499.59,186.50h1.2v1.2h-1.2zM499.59,191.55h1.2v1.2h-1.2zM499.59,196.60h1.2v1.2h-1.2zM499.59,201.65h1.2v1.2h-1.2zM499.59,206.70h1.2v1.2h-1.2zM499.59,211.75h1.2v1.2h-1.2zM499.59,216.80h1.2v1.2h-1.2zM499.59,221.85h1.2v1.2h-1.2zM499.59,226.90h1.2v1.2h-1.2zM499.59,231.95h1.2v1.2h-1.2zM499.59,237.00h1.2v1.2h-1.2zM499.59,242.05h1.2v1.2h-1.2zM499.59,247.10h1.2v1.2h-1.2zM499.59,252.15h1.2v1.2h-1.2zM499.59,257.20h1.2v1.2h-1.2zM499.59,262.25h1.2v1.2h-1.2zM499.59,267.30h1.2v1.2h-1.2zM499.59,272.35h1.2v1.2h-1.2zM499.59,277.40h1.2v1.2h-1.2zM499.59,282.45h1.2v1.2h-1.2zM499.59,287.50h1.2v1.2h-1.2zM499.59,292.55h1.2v1.2h-1.2zM499.59,297.60h1.2v1.2h-1.2zM499.59,302.65h1.2v1.2h-1.2zM499.59,307.70h1.2v1.2h-1.2zM499.59,312.75h1.2v1.2h-1.2zM499.59,317.80h1.2v1.2h-1.2zM499.59,322.85h1.2v1.2h-1.2zM541.65,130.95h1.2v1.2h-1.2zM541.65,136.00h1.2v1.2h-1.2zM541.65,141.05h1.2v1.2h-1.2zM541.65,146.10h1.2v1.2h-1.2zM541.65,151.15h1.2v1.2h-1.2zM541.65,156.20h1.2v1.2h-1.2zM541.65,161.25h1.2v1.2h-1.2zM541.65,166.30h1.2v1.2h-1.2zM541.65,171.35h1.2v1.2h-1.2zM541.65,176.40h1.2v1.2h-1.2zM541.65,181.45h1.2v1.2h-1.2zM541.65,186.50h1.2v1.2h-1.2zM541.65,191.55h1.2v1.2h-1.2zM541.65,196.60h1.2v1.2h-1.2zM541.65,201.65h1.2v1.2h-1.2zM541.65,206.70h1.2v1.2h-1.2zM541.65,211.75h1.2v1.2h-1.2zM541.65,216.80h1.2v1.2h-1.2zM541.65,221.85h1.2v1.2h-1.2zM541.65,226.90h1.2v1.2h-1.2zM541.65,231.95h1.2v1.2h-1.2zM541.65,237.00h1.2v1.2h-1.2zM541.65,242.05h1.2v1.2h-1.2zM541.65,247.10h1.2v1.2h-1.2zM541.65,252.15h1.2v1.2h-1.2zM541.65,257.20h1.2v1.2h-1.2zM541.65,262.25h1.2v1.2h-1.2zM541.65,267.30h1.2v1.2h-1.2zM541.65,272.35h1.2v1.2h-1.2zM541.65,277.40h1.2v1.2h-1.2zM541.65,282.45h1.2v1.2h-1.2zM541.65,287.50h1.2v1.2h-1.2zM541.65,292.55h1.2v1.2h-1.2zM541.65,297.60h1.2v1.2h-1.2zM541.65,302.65h1.2v1.2h-1.2zM541.65,307.70h1.2v1.2h-1.2zM541.65,312.75h1.2v1.2h-1.2zM541.65,317.80h1.2v1.2h-1.2zM541.65,322.85h1.2v1.2h-1.2zM583.71,130.95h1.2v1.2h-1.2zM583.71,136.00h1.2v1.2h-1.2zM583.71,141.05h1.2v1.2h-1.2zM583.71,146.10h1.2v1.2h-1.2zM583.71,151.15h1.2v1.2h-1.2zM583.71,156.20h1.2v1.2h-1.2zM583.71,161.25h1.2v1.2h-1.2zM583.71,166.30h1.2v1.2h-1.2zM583.71,171.35h1.2v1.2h-1.2zM583.71,176.40h1.2v1.2h-1.2zM583.71,181.45h1.2v1.2h-1.2zM583.71,186.50h1.2v1.2h-1.2zM583.71,191.55h1.2v1.2h-1.2zM583.71,196.60h1.2v1.2h-1.2zM583.71,201.65h1.2v1.2h-1.2zM583.71,206.70h1.2v1.2h-1.2zM583.71,211.75h1.2v1.2h-1.2zM583.71,216.80h1.2v1.2h-1.2zM583.71,221.85h1.2v1.2h-1.2zM583.71,226.90h1.2v1.2h-1.2zM583.71,231.95h1.2v1.2h-1.2zM583.71,237.00h1.2v1.2h-1.2zM583.71,242.05h1.2v1.2h-1.2zM583.71,247.10h1.2v1.2h-1.2zM583.71,252.15h1.2v1.2h-1.2zM583.71,257.20h1.2v1.2h-1.2zM583.71,262.25h1.2v1.2h-1.2zM583.71,267.30h1.2v1.2h-1.2zM583.71,272.35h1.2v1.2h-1.2zM583.71,277.40h1.2v1.2h-1.2zM583.71,282.45h1.2v1.2h-1.2zM583.71,287.50h1.2v1.2h-1.2zM583.71,292.55h1.2v1.2h-1.2zM583.71,297.60h1.2v1.2h-1.2zM583.71,302.65h1.2v1.2h-1.2zM583.71,307.70h1.2v1.2h-1.2zM583.71,312.75h1.2v1.2h-1.2zM583.71,317.80h1.2v1.2h-1.2zM583.71,322.85h1.2v1.2h-1.2zM625.77,130.95h1.2v1.2h-1.2zM625.77,136.00h1.2v1.2h-1.2zM625.77,141.05h1.2v1.2h-1.2zM625.77,146.10h1.2v1.2h-1.2zM625.77,151.15h1.2v1.2h-1.2zM625.77,156.20h1.2v1.2h-1.2zM625.77,161.25h1.2v1.2h-1.2zM625.77,166.30h1.2v1.2h-1.2zM625.77,171.35h1.2v1.2h-1.2zM625.77,176.40h1.2v1.2h-1.2zM625.77,181.45h1.2v1.2h-1.2zM625.77,186.50h1.2v1.2h-1.2zM625.77,191.55h1.2v1.2h-1.2zM625.77,196.60h1.2v1.2h-1.2zM625.77,201.65h1.2v1.2h-1.2zM625.77,206.70h1.2v1.2h-1.2zM625.77,211.75h1.2v1.2h-1.2zM625.77,216.80h1.2v1.2h-1.2zM625.77,221.85h1.2v1.2h-1.2zM625.77,226.90h1.2v1.2h-1.2zM625.77,231.95h1.2v1.2h-1.2zM625.77,237.00h1.2v1.2h-1.2zM625.77,242.05h1.2v1.2h-1.2zM625.77,247.10h1.2v1.2h-1.2zM625.77,252.15h1.2v1.2h-1.2zM625.77,257.20h1.2v1.2h-1.2zM625.77,262.25h1.2v1.2h-1.2zM625.77,267.30h1.2v1.2h-1.2zM625.77,272.35h1.2v1.2h-1.2zM625.77,277.40h1.2v1.2h-1.2zM625.77,282.45h1.2v1.2h-1.2zM625.77,287.50h1.2v1.2h-1.2zM625.77,292.55h1.2v1.2h-1.2zM625.77,297.60h1.2v1.2h-1.2zM625.77,302.65h1.2v1.2h-1.2zM625.77,307.70h1.2v1.2h-1.2zM625.77,312.75h1.2v1.2h-1.2zM625.77,317.80h1.2v1.2h-1.2zM625.77,322.85h1.2v1.2h-1.2zM667.84,130.95h1.2v1.2h-1.2zM667.84,136.00h1.2v1.2h-1.2zM667.84,141.05h1.2v1.2h-1.2zM667.84,146.10h1.2v1.2h-1.2zM667.84,151.15h1.2v1.2h-1.2zM667.84,156.20h1.2v1.2h-1.2zM667.84,161.25h1.2v1.2h-1.2zM667.84,166.30h1.2v1.2h-1.2zM667.84,171.35h1.2v1.2h-1.2zM667.84,176.40h1.2v1.2h-1.2zM667.84,181.45h1.2v1.2h-1.2zM667.84,186.50h1.2v1.2h-1.2zM667.84,191.55h1.2v1.2h-1.2zM667.84,196.60h1.2v1.2h-1.2zM667.84,201.65h1.2v1.2h-1.2zM667.84,206.70h1.2v1.2h-1.2zM667.84,211.75h1.2v1.2h-1.2zM667.84,216.80h1.2v1.2h-1.2zM667.84,221.85h1.2v1.2h-1.2zM667.84,226.90h1.2v1.2h-1.2zM667.84,231.95h1.2v1.2h-1.2zM667.84,237.00h1.2v1.2h-1.2zM667.84,242.05h1.2v1.2h-1.2zM667.84,247.10h1.2v1.2h-1.2zM667.84,252.15h1.2v1.2h-1.2zM667.84,257.20h1.2v1.2h-1.2zM667.84,262.25h1.2v1.2h-1.2zM667.84,267.30h1.2v1.2h-1.2zM667.84,272.35h1.2v1.2h-1.2zM667.84,277.40h1.2v1.2h-1.2zM667.84,282.45h1.2v1.2h-1.2zM667.84,287.50h1.2v1.2h-1.2zM667.84,292.55h1.2v1.2h-1.2zM667.84,297.60h1.2v1.2h-1.2zM667.84,302.65h1.2v1.2h-1.2zM667.84,307.70h1.2v1.2h-1.2zM667.84,312.75h1.2v1.2h-1.2zM667.84,317.80h1.2v1.2h-1.2zM667.84,322.85h1.2v1.2h-1.2zM45.31,151.15h1.2v1.2h-1.2zM53.73,151.15h1.2v1.2h-1.2zM62.14,151.15h1.2v1.2h-1.2zM70.55,151.15h1.2v1.2h-1.2zM78.96,151.15h1.2v1.2h-1.2zM87.38,151.15h1.2v1.2h-1.2zM95.79,151.15h1.2v1.2h-1.2zM104.20,151.15h1.2v1.2h-1.2zM112.61,151.15h1.2v1.2h-1.2zM121.03,151.15h1.2v1.2h-1.2zM129.44,151.15h1.2v1.2h-1.2zM137.85,151.15h1.2v1.2h-1.2zM146.26,151.15h1.2v1.2h-1.2zM154.68,151.15h1.2v1.2h-1.2zM163.09,151.15h1.2v1.2h-1.2zM171.50,151.15h1.2v1.2h-1.2zM179.91,151.15h1.2v1.2h-1.2zM188.33,151.15h1.2v1.2h-1.2zM196.74,151.15h1.2v1.2h-1.2zM205.15,151.15h1.2v1.2h-1.2zM213.56,151.15h1.2v1.2h-1.2zM221.97,151.15h1.2v1.2h-1.2zM230.39,151.15h1.2v1.2h-1.2zM238.80,151.15h1.2v1.2h-1.2zM247.21,151.15h1.2v1.2h-1.2zM255.63,151.15h1.2v1.2h-1.2zM264.04,151.15h1.2v1.2h-1.2zM272.45,151.15h1.2v1.2h-1.2zM280.86,151.15h1.2v1.2h-1.2zM289.27,151.15h1.2v1.2h-1.2zM297.69,151.15h1.2v1.2h-1.2zM306.10,151.15h1.2v1.2h-1.2zM314.51,151.15h1.2v1.2h-1.2zM322.92,151.15h1.2v1.2h-1.2zM331.34,151.15h1.2v1.2h-1.2zM339.75,151.15h1.2v1.2h-1.2zM348.16,151.15h1.2v1.2h-1.2zM356.57,151.15h1.2v1.2h-1.2zM364.99,151.15h1.2v1.2h-1.2zM373.40,151.15h1.2v1.2h-1.2zM381.81,151.15h1.2v1.2h-1.2zM390.22,151.15h1.2v1.2h-1.2zM398.64,151.15h1.2v1.2h-1.2zM407.05,151.15h1.2v1.2h-1.2zM415.46,151.15h1.2v1.2h-1.2zM423.88,151.15h1.2v1.2h-1.2zM432.29,151.15h1.2v1.2h-1.2zM440.70,151.15h1.2v1.2h-1.2zM449.11,151.15h1.2v1.2h-1.2zM457.52,151.15h1.2v1.2h-1.2zM465.94,151.15h1.2v1.2h-1.2zM474.35,151.15h1.2v1.2h-1.2zM482.76,151.15h1.2v1.2h-1.2zM491.17,151.15h1.2v1.2h-1.2zM499.59,151.15h1.2v1.2h-1.2zM508.00,151.15h1.2v1.2h-1.2zM516.41,151.15h1.2v1.2h-1.2zM524.82,151.15h1.2v1.2h-1.2zM533.24,151.15h1.2v1.2h-1.2zM541.65,151.15h1.2v1.2h-1.2zM550.06,151.15h1.2v1.2h-1.2zM558.48,151.15h1.2v1.2h-1.2zM566.89,151.15h1.2v1.2h-1.2zM575.30,151.15h1.2v1.2h-1.2zM583.71,151.15h1.2v1.2h-1.2zM592.12,151.15h1.2v1.2h-1.2zM600.54,151.15h1.2v1.2h-1.2zM608.95,151.15h1.2v1.2h-1.2zM617.36,151.15h1.2v1.2h-1.2zM625.77,151.15h1.2v1.2h-1.2zM634.19,151.15h1.2v1.2h-1.2zM642.60,151.15h1.2v1.2h-1.2zM651.01,151.15h1.2v1.2h-1.2zM659.42,151.15h1.2v1.2h-1.2zM667.84,151.15h1.2v1.2h-1.2zM676.25,151.15h1.2v1.2h-1.2zM684.66,151.15h1.2v1.2h-1.2zM693.07,151.15h1.2v1.2h-1.2zM701.49,151.15h1.2v1.2h-1.2zM45.31,176.40h1.2v1.2h-1.2zM53.73,176.40h1.2v1.2h-1.2zM62.14,176.40h1.2v1.2h-1.2zM70.55,176.40h1.2v1.2h-1.2zM78.96,176.40h1.2v1.2h-1.2zM87.38,176.40h1.2v1.2h-1.2zM95.79,176.40h1.2v1.2h-1.2zM104.20,176.40h1.2v1.2h-1.2zM112.61,176.40h1.2v1.2h-1.2zM121.03,176.40h1.2v1.2h-1.2zM129.44,176.40h1.2v1.2h-1.2zM137.85,176.40h1.2v1.2h-1.2zM146.26,176.40h1.2v1.2h-1.2zM154.68,176.40h1.2v1.2h-1.2zM163.09,176.40h1.2v1.2h-1.2zM171.50,176.40h1.2v1.2h-1.2zM179.91,176.40h1.2v1.2h-1.2zM188.33,176.40h1.2v1.2h-1.2zM196.74,176.40h1.2v1.2h-1.2zM205.15,176.40h1.2v1.2h-1.2zM213.56,176.40h1.2v1.2h-1.2zM221.97,176.40h1.2v1.2h-1.2zM230.39,176.40h1.2v1.2h-1.2zM238.80,176.40h1.2v1.2h-1.2zM247.21,176.40h1.2v1.2h-1.2zM255.63,176.40h1.2v1.2h-1.2zM264.04,176.40h1.2v1.2h-1.2zM272.45,176.40h1.2v1.2h-1.2zM280.86,176.40h1.2v1.2h-1.2zM289.27,176.40h1.2v1.2h-1.2zM297.69,176.40h1.2v1.2h-1.2zM306.10,176.40h1.2v1.2h-1.2zM314.51,176.40h1.2v1.2h-1.2zM322.92,176.40h1.2v1.2h-1.2zM331.34,176.40h1.2v1.2h-1.2zM339.75,176.40h1.2v1.2h-1.2zM348.16,176.40h1.2v1.2h-1.2zM356.57,176.40h1.2v1.2h-1.2zM364.99,176.40h1.2v1.2h-1.2zM373.40,176.40h1.2v1.2h-1.2zM381.81,176.40h1.2v1.2h-1.2zM390.22,176.40h1.2v1.2h-1.2zM398.64,176.40h1.2v1.2h-1.2zM407.05,176.40h1.2v1.2h-1.2zM415.46,176.40h1.2v1.2h-1.2zM423.88,176.40h1.2v1.2h-1.2zM432.29,176.40h1.2v1.2h-1.2zM440.70,176.40h1.2v1.2h-1.2zM449.11,176.40h1.2v1.2h-1.2zM457.52,176.40h1.2v1.2h-1.2zM465.94,176.40h1.2v1.2h-1.2zM474.35,176.40h1.2v1.2h-1.2zM482.76,176.40h1.2v1.2h-1.2zM491.17,176.40h1.2v1.2h-1.2zM499.59,176.40h1.2v1.2h-1.2zM508.00,176.40h1.2v1.2h-1.2zM516.41,176.40h1.2v1.2h-1.2zM524.82,176.40h1.2v1.2h-1.2zM533.24,176.40h1.2v1.2h-1.2zM541.65,176.40h1.2v1.2h-1.2zM550.06,176.40h1.2v1.2h-1.2zM558.48,176.40h1.2v1.2h-1.2zM566.89,176.40h1.2v1.2h-1.2zM575.30,176.40h1.2v1.2h-1.2zM583.71,176.40h1.2v1.2h-1.2zM592.12,176.40h1.2v1.2h-1.2zM600.54,176.40h1.2v1.2h-1.2zM608.95,176.40h1.2v1.2h-1.2zM617.36,176.40h1.2v1.2h-1.2zM625.77,176.40h1.2v1.2h-1.2zM634.19,176.40h1.2v1.2h-1.2zM642.60,176.40h1.2v1.2h-1.2zM651.01,176.40h1.2v1.2h-1.2zM659.42,176.40h1.2v1.2h-1.2zM667.84,176.40h1.2v1.2h-1.2zM676.25,176.40h1.2v1.2h-1.2zM684.66,176.40h1.2v1.2h-1.2zM693.07,176.40h1.2v1.2h-1.2zM701.49,176.40h1.2v1.2h-1.2zM45.31,201.65h1.2v1.2h-1.2zM53.73,201.65h1.2v1.2h-1.2zM62.14,201.65h1.2v1.2h-1.2zM70.55,201.65h1.2v1.2h-1.2zM78.96,201.65h1.2v1.2h-1.2zM87.38,201.65h1.2v1.2h-1.2zM95.79,201.65h1.2v1.2h-1.2zM104.20,201.65h1.2v1.2h-1.2zM112.61,201.65h1.2v1.2h-1.2zM121.03,201.65h1.2v1.2h-1.2zM129.44,201.65h1.2v1.2h-1.2zM137.85,201.65h1.2v1.2h-1.2zM146.26,201.65h1.2v1.2h-1.2zM154.68,201.65h1.2v1.2h-1.2zM163.09,201.65h1.2v1.2h-1.2zM171.50,201.65h1.2v1.2h-1.2zM179.91,201.65h1.2v1.2h-1.2zM188.33,201.65h1.2v1.2h-1.2zM196.74,201.65h1.2v1.2h-1.2zM205.15,201.65h1.2v1.2h-1.2zM213.56,201.65h1.2v1.2h-1.2zM221.97,201.65h1.2v1.2h-1.2zM230.39,201.65h1.2v1.2h-1.2zM238.80,201.65h1.2v1.2h-1.2zM247.21,201.65h1.2v1.2h-1.2zM255.63,201.65h1.2v1.2h-1.2zM264.04,201.65h1.2v1.2h-1.2zM272.45,201.65h1.2v1.2h-1.2zM280.86,201.65h1.2v1.2h-1.2zM289.27,201.65h1.2v1.2h-1.2zM297.69,201.65h1.2v1.2h-1.2zM306.10,201.65h1.2v1.2h-1.2zM314.51,201.65h1.2v1.2h-1.2zM322.92,201.65h1.2v1.2h-1.2zM331.34,201.65h1.2v1.2h-1.2zM339.75,201.65h1.2v1.2h-1.2zM348.16,201.65h1.2v1.2h-1.2zM356.57,201.65h1.2v1.2h-1.2zM364.99,201.65h1.2v1.2h-1.2zM373.40,201.65h1.2v1.2h-1.2zM381.81,201.65h1.2v1.2h-1.2zM390.22,201.65h1.2v1.2h-1.2zM398.64,201.65h1.2v1.2h-1.2zM407.05,201.65h1.2v1.2h-1.2zM415.46,201.65h1.2v1.2h-1.2zM423.88,201.65h1.2v1.2h-1.2zM432.29,201.65h1.2v1.2h-1.2zM440.70,201.65h1.2v1.2h-1.2zM449.11,201.65h1.2v1.2h-1.2zM457.52,201.65h1.2v1.2h-1.2zM465.94,201.65h1.2v1.2h-1.2zM474.35,201.65h1.2v1.2h-1.2zM482.76,201.65h1.2v1.2h-1.2zM491.17,201.65h1.2v1.2h-1.2zM499.59,201.65h1.2v1.2h-1.2zM508.00,201.65h1.2v1.2h-1.2zM516.41,201.65h1.2v1.2h-1.2zM524.82,201.65h1.2v1.2h-1.2zM533.24,201.65h1.2v1.2h-1.2zM541.65,201.65h1.2v1.2h-1.2zM550.06,201.65h1.2v1.2h-1.2zM558.48,201.65h1.2v1.2h-1.2zM566.89,201.65h1.2v1.2h-1.2zM575.30,201.65h1.2v1.2h-1.2zM583.71,201.65h1.2v1.2h-1.2zM592.12,201.65h1.2v1.2h-1.2zM600.54,201.65h1.2v1.2h-1.2zM608.95,201.65h1.2v1.2h-1.2zM617.36,201.65h1.2v1.2h-1.2zM625.77,201.65h1.2v1.2h-1.2zM634.19,201.65h1.2v1.2h-1.2zM642.60,201.65h1.2v1.2h-1.2zM651.01,201.65h1.2v1.2h-1.2zM659.42,201.65h1.2v1.2h-1.2zM667.84,201.65h1.2v1.2h-1.2zM676.25,201.65h1.2v1.2h-1.2zM684.66,201.65h1.2v1.2h-1.2zM693.07,201.65h1.2v1.2h-1.2zM701.49,201.65h1.2v1.2h-1.2zM45.31,226.90h1.2v1.2h-1.2zM53.73,226.90h1.2v1.2h-1.2zM62.14,226.90h1.2v1.2h-1.2zM70.55,226.90h1.2v1.2h-1.2zM78.96,226.90h1.2v1.2h-1.2zM87.38,226.90h1.2v1.2h-1.2zM95.79,226.90h1.2v1.2h-1.2zM104.20,226.90h1.2v1.2h-1.2zM112.61,226.90h1.2v1.2h-1.2zM121.03,226.90h1.2v1.2h-1.2zM129.44,226.90h1.2v1.2h-1.2zM137.85,226.90h1.2v1.2h-1.2zM146.26,226.90h1.2v1.2h-1.2zM154.68,226.90h1.2v1.2h-1.2zM163.09,226.90h1.2v1.2h-1.2zM171.50,226.90h1.2v1.2h-1.2zM179.91,226.90h1.2v1.2h-1.2zM188.33,226.90h1.2v1.2h-1.2zM196.74,226.90h1.2v1.2h-1.2zM205.15,226.90h1.2v1.2h-1.2zM213.56,226.90h1.2v1.2h-1.2zM221.97,226.90h1.2v1.2h-1.2zM230.39,226.90h1.2v1.2h-1.2zM238.80,226.90h1.2v1.2h-1.2zM247.21,226.90h1.2v1.2h-1.2zM255.63,226.90h1.2v1.2h-1.2zM264.04,226.90h1.2v1.2h-1.2zM272.45,226.90h1.2v1.2h-1.2zM280.86,226.90h1.2v1.2h-1.2zM289.27,226.90h1.2v1.2h-1.2zM297.69,226.90h1.2v1.2h-1.2zM306.10,226.90h1.2v1.2h-1.2zM314.51,226.90h1.2v1.2h-1.2zM322.92,226.90h1.2v1.2h-1.2zM331.34,226.90h1.2v1.2h-1.2zM339.75,226.90h1.2v1.2h-1.2zM348.16,226.90h1.2v1.2h-1.2zM356.57,226.90h1.2v1.2h-1.2zM364.99,226.90h1.2v1.2h-1.2zM373.40,226.90h1.2v1.2h-1.2zM381.81,226.90h1.2v1.2h-1.2zM390.22,226.90h1.2v1.2h-1.2zM398.64,226.90h1.2v1.2h-1.2zM407.05,226.90h1.2v1.2h-1.2zM415.46,226.90h1.2v1.2h-1.2zM423.88,226.90h1.2v1.2h-1.2zM432.29,226.90h1.2v1.2h-1.2zM440.70,226.90h1.2v1.2h-1.2zM449.11,226.90h1.2v1.2h-1.2zM457.52,226.90h1.2v1.2h-1.2zM465.94,226.90h1.2v1.2h-1.2zM474.35,226.90h1.2v1.2h-1.2zM482.76,226.90h1.2v1.2h-1.2zM491.17,226.90h1.2v1.2h-1.2zM499.59,226.90h1.2v1.2h-1.2zM508.00,226.90h1.2v1.2h-1.2zM516.41,226.90h1.2v1.2h-1.2zM524.82,226.90h1.2v1.2h-1.2zM533.24,226.90h1.2v1.2h-1.2zM541.65,226.90h1.2v1.2h-1.2zM550.06,226.90h1.2v1.2h-1.2zM558.48,226.90h1.2v1.2h-1.2zM566.89,226.90h1.2v1.2h-1.2zM575.30,226.90h1.2v1.2h-1.2zM583.71,226.90h1.2v1.2h-1.2zM592.12,226.90h1.2v1.2h-1.2zM600.54,226.90h1.2v1.2h-1.2zM608.95,226.90h1.2v1.2h-1.2zM617.36,226.90h1.2v1.2h-1.2zM625.77,226.90h1.2v1.2h-1.2zM634.19,226.90h1.2v1.2h-1.2zM642.60,226.90h1.2v1.2h-1.2zM651.01,226.90h1.2v1.2h-1.2zM659.42,226.90h1.2v1.2h-1.2zM667.84,226.90h1.2v1.2h-1.2zM676.25,226.90h1.2v1.2h-1.2zM684.66,226.90h1.2v1.2h-1.2zM693.07,226.90h1.2v1.2h-1.2zM701.49,226.90h1.2v1.2h-1.2zM45.31,252.15h1.2v1.2h-1.2zM53.73,252.15h1.2v1.2h-1.2zM62.14,252.15h1.2v1.2h-1.2zM70.55,252.15h1.2v1.2h-1.2zM78.96,252.15h1.2v1.2h-1.2zM87.38,252.15h1.2v1.2h-1.2zM95.79,252.15h1.2v1.2h-1.2zM104.20,252.15h1.2v1.2h-1.2zM112.61,252.15h1.2v1.2h-1.2zM121.03,252.15h1.2v1.2h-1.2zM129.44,252.15h1.2v1.2h-1.2zM137.85,252.15h1.2v1.2h-1.2zM146.26,252.15h1.2v1.2h-1.2zM154.68,252.15h1.2v1.2h-1.2zM163.09,252.15h1.2v1.2h-1.2zM171.50,252.15h1.2v1.2h-1.2zM179.91,252.15h1.2v1.2h-1.2zM188.33,252.15h1.2v1.2h-1.2zM196.74,252.15h1.2v1.2h-1.2zM205.15,252.15h1.2v1.2h-1.2zM213.56,252.15h1.2v1.2h-1.2zM221.97,252.15h1.2v1.2h-1.2zM230.39,252.15h1.2v1.2h-1.2zM238.80,252.15h1.2v1.2h-1.2zM247.21,252.15h1.2v1.2h-1.2zM255.63,252.15h1.2v1.2h-1.2zM264.04,252.15h1.2v1.2h-1.2zM272.45,252.15h1.2v1.2h-1.2zM280.86,252.15h1.2v1.2h-1.2zM289.27,252.15h1.2v1.2h-1.2zM297.69,252.15h1.2v1.2h-1.2zM306.10,252.15h1.2v1.2h-1.2zM314.51,252.15h1.2v1.2h-1.2zM322.92,252.15h1.2v1.2h-1.2zM331.34,252.15h1.2v1.2h-1.2zM339.75,252.15h1.2v1.2h-1.2zM348.16,252.15h1.2v1.2h-1.2zM356.57,252.15h1.2v1.2h-1.2zM364.99,252.15h1.2v1.2h-1.2zM373.40,252.15h1.2v1.2h-1.2zM381.81,252.15h1.2v1.2h-1.2zM390.22,252.15h1.2v1.2h-1.2zM398.64,252.15h1.2v1.2h-1.2zM407.05,252.15h1.2v1.2h-1.2zM415.46,252.15h1.2v1.2h-1.2zM423.88,252.15h1.2v1.2h-1.2zM432.29,252.15h1.2v1.2h-1.2zM440.70,252.15h1.2v1.2h-1.2zM449.11,252.15h1.2v1.2h-1.2zM457.52,252.15h1.2v1.2h-1.2zM465.94,252.15h1.2v1.2h-1.2zM474.35,252.15h1.2v1.2h-1.2zM482.76,252.15h1.2v1.2h-1.2zM491.17,252.15h1.2v1.2h-1.2zM499.59,252.15h1.2v1.2h-1.2zM508.00,252.15h1.2v1.2h-1.2zM516.41,252.15h1.2v1.2h-1.2zM524.82,252.15h1.2v1.2h-1.2zM533.24,252.15h1.2v1.2h-1.2zM541.65,252.15h1.2v1.2h-1.2zM550.06,252.15h1.2v1.2h-1.2zM558.48,252.15h1.2v1.2h-1.2zM566.89,252.15h1.2v1.2h-1.2zM575.30,252.15h1.2v1.2h-1.2zM583.71,252.15h1.2v1.2h-1.2zM592.12,252.15h1.2v1.2h-1.2zM600.54,252.15h1.2v1.2h-1.2zM608.95,252.15h1.2v1.2h-1.2zM617.36,252.15h1.2v1.2h-1.2zM625.77,252.15h1.2v1.2h-1.2zM634.19,252.15h1.2v1.2h-1.2zM642.60,252.15h1.2v1.2h-1.2zM651.01,252.15h1.2v1.2h-1.2zM659.42,252.15h1.2v1.2h-1.2zM667.84,252.15h1.2v1.2h-1.2zM676.25,252.15h1.2v1.2h-1.2zM684.66,252.15h1.2v1.2h-1.2zM693.07,252.15h1.2v1.2h-1.2zM701.49,252.15h1.2v1.2h-1.2zM45.31,277.40h1.2v1.2h-1.2zM53.73,277.40h1.2v1.2h-1.2zM62.14,277.40h1.2v1.2h-1.2zM70.55,277.40h1.2v1.2h-1.2zM78.96,277.40h1.2v1.2h-1.2zM87.38,277.40h1.2v1.2h-1.2zM95.79,277.40h1.2v1.2h-1.2zM104.20,277.40h1.2v1.2h-1.2zM112.61,277.40h1.2v1.2h-1.2zM121.03,277.40h1.2v1.2h-1.2zM129.44,277.40h1.2v1.2h-1.2zM137.85,277.40h1.2v1.2h-1.2zM146.26,277.40h1.2v1.2h-1.2zM154.68,277.40h1.2v1.2h-1.2zM163.09,277.40h1.2v1.2h-1.2zM171.50,277.40h1.2v1.2h-1.2zM179.91,277.40h1.2v1.2h-1.2zM188.33,277.40h1.2v1.2h-1.2zM196.74,277.40h1.2v1.2h-1.2zM205.15,277.40h1.2v1.2h-1.2zM213.56,277.40h1.2v1.2h-1.2zM221.97,277.40h1.2v1.2h-1.2zM230.39,277.40h1.2v1.2h-1.2zM238.80,277.40h1.2v1.2h-1.2zM247.21,277.40h1.2v1.2h-1.2zM255.63,277.40h1.2v1.2h-1.2zM264.04,277.40h1.2v1.2h-1.2zM272.45,277.40h1.2v1.2h-1.2zM280.86,277.40h1.2v1.2h-1.2zM289.27,277.40h1.2v1.2h-1.2zM297.69,277.40h1.2v1.2h-1.2zM306.10,277.40h1.2v1.2h-1.2zM314.51,277.40h1.2v1.2h-1.2zM322.92,277.40h1.2v1.2h-1.2zM331.34,277.40h1.2v1.2h-1.2zM339.75,277.40h1.2v1.2h-1.2zM348.16,277.40h1.2v1.2h-1.2zM356.57,277.40h1.2v1.2h-1.2zM364.99,277.40h1.2v1.2h-1.2zM373.40,277.40h1.2v1.2h-1.2zM381.81,277.40h1.2v1.2h-1.2zM390.22,277.40h1.2v1.2h-1.2zM398.64,277.40h1.2v1.2h-1.2zM407.05,277.40h1.2v1.2h-1.2zM415.46,277.40h1.2v1.2h-1.2zM423.88,277.40h1.2v1.2h-1.2zM432.29,277.40h1.2v1.2h-1.2zM440.70,277.40h1.2v1.2h-1.2zM449.11,277.40h1.2v1.2h-1.2zM457.52,277.40h1.2v1.2h-1.2zM465.94,277.40h1.2v1.2h-1.2zM474.35,277.40h1.2v1.2h-1.2zM482.76,277.40h1.2v1.2h-1.2zM491.17,277.40h1.2v1.2h-1.2zM499.59,277.40h1.2v1.2h-1.2zM508.00,277.40h1.2v1.2h-1.2zM516.41,277.40h1.2v1.2h-1.2zM524.82,277.40h1.2v1.2h-1.2zM533.24,277.40h1.2v1.2h-1.2zM541.65,277.40h1.2v1.2h-1.2zM550.06,277.40h1.2v1.2h-1.2zM558.48,277.40h1.2v1.2h-1.2zM566.89,277.40h1.2v1.2h-1.2zM575.30,277.40h1.2v1.2h-1.2zM583.71,277.40h1.2v1.2h-1.2zM592.12,277.40h1.2v1.2h-1.2zM600.54,277.40h1.2v1.2h-1.2zM608.95,277.40h1.2v1.2h-1.2zM617.36,277.40h1.2v1.2h-1.2zM625.77,277.40h1.2v1.2h-1.2zM634.19,277.40h1.2v1.2h-1.2zM642.60,277.40h1.2v1.2h-1.2zM651.01,277.40h1.2v1.2h-1.2zM659.42,277.40h1.2v1.2h-1.2zM667.84,277.40h1.2v1.2h-1.2zM676.25,277.40h1.2v1.2h-1.2zM684.66,277.40h1.2v1.2h-1.2zM693.07,277.40h1.2v1.2h-1.2zM701.49,277.40h1.2v1.2h-1.2zM45.31,302.65h1.2v1.2h-1.2zM53.73,302.65h1.2v1.2h-1.2zM62.14,302.65h1.2v1.2h-1.2zM70.55,302.65h1.2v1.2h-1.2zM78.96,302.65h1.2v1.2h-1.2zM87.38,302.65h1.2v1.2h-1.2zM95.79,302.65h1.2v1.2h-1.2zM104.20,302.65h1.2v1.2h-1.2zM112.61,302.65h1.2v1.2h-1.2zM121.03,302.65h1.2v1.2h-1.2zM129.44,302.65h1.2v1.2h-1.2zM137.85,302.65h1.2v1.2h-1.2zM146.26,302.65h1.2v1.2h-1.2zM154.68,302.65h1.2v1.2h-1.2zM163.09,302.65h1.2v1.2h-1.2zM171.50,302.65h1.2v1.2h-1.2zM179.91,302.65h1.2v1.2h-1.2zM188.33,302.65h1.2v1.2h-1.2zM196.74,302.65h1.2v1.2h-1.2zM205.15,302.65h1.2v1.2h-1.2zM213.56,302.65h1.2v1.2h-1.2zM221.97,302.65h1.2v1.2h-1.2zM230.39,302.65h1.2v1.2h-1.2zM238.80,302.65h1.2v1.2h-1.2zM247.21,302.65h1.2v1.2h-1.2zM255.63,302.65h1.2v1.2h-1.2zM264.04,302.65h1.2v1.2h-1.2zM272.45,302.65h1.2v1.2h-1.2zM280.86,302.65h1.2v1.2h-1.2zM289.27,302.65h1.2v1.2h-1.2zM297.69,302.65h1.2v1.2h-1.2zM306.10,302.65h1.2v1.2h-1.2zM314.51,302.65h1.2v1.2h-1.2zM322.92,302.65h1.2v1.2h-1.2zM331.34,302.65h1.2v1.2h-1.2zM339.75,302.65h1.2v1.2h-1.2zM348.16,302.65h1.2v1.2h-1.2zM356.57,302.65h1.2v1.2h-1.2zM364.99,302.65h1.2v1.2h-1.2zM373.40,302.65h1.2v1.2h-1.2zM381.81,302.65h1.2v1.2h-1.2zM390.22,302.65h1.2v1.2h-1.2zM398.64,302.65h1.2v1.2h-1.2zM407.05,302.65h1.2v1.2h-1.2zM415.46,302.65h1.2v1.2h-1.2zM423.88,302.65h1.2v1.2h-1.2zM432.29,302.65h1.2v1.2h-1.2zM440.70,302.65h1.2v1.2h-1.2zM449.11,302.65h1.2v1.2h-1.2zM457.52,302.65h1.2v1.2h-1.2zM465.94,302.65h1.2v1.2h-1.2zM474.35,302.65h1.2v1.2h-1.2zM482.76,302.65h1.2v1.2h-1.2zM491.17,302.65h1.2v1.2h-1.2zM499.59,302.65h1.2v1.2h-1.2zM508.00,302.65h1.2v1.2h-1.2zM516.41,302.65h1.2v1.2h-1.2zM524.82,302.65h1.2v1.2h-1.2zM533.24,302.65h1.2v1.2h-1.2zM541.65,302.65h1.2v1.2h-1.2zM550.06,302.65h1.2v1.2h-1.2zM558.48,302.65h1.2v1.2h-1.2zM566.89,302.65h1.2v1.2h-1.2zM575.30,302.65h1.2v1.2h-1.2zM583.71,302.65h1.2v1.2h-1.2zM592.12,302.65h1.2v1.2h-1.2zM600.54,302.65h1.2v1.2h-1.2zM608.95,302.65h1.2v1.2h-1.2zM617.36,302.65h1.2v1.2h-1.2zM625.77,302.65h1.2v1.2h-1.2zM634.19,302.65h1.2v1.2h-1.2zM642.60,302.65h1.2v1.2h-1.2zM651.01,302.65h1.2v1.2h-1.2zM659.42,302.65h1.2v1.2h-1.2zM667.84,302.65h1.2v1.2h-1.2zM676.25,302.65h1.2v1.2h-1.2zM684.66,302.65h1.2v1.2h-1.2zM693.07,302.65h1.2v1.2h-1.2zM701.49,302.65h1.2v1.2h-1.2zM45.31,126.90h1.2v1.2h-1.2zM45.31,326.90h1.2v1.2h-1.2zM53.73,126.90h1.2v1.2h-1.2zM53.73,326.90h1.2v1.2h-1.2zM62.14,126.90h1.2v1.2h-1.2zM62.14,326.90h1.2v1.2h-1.2zM70.55,126.90h1.2v1.2h-1.2zM70.55,326.90h1.2v1.2h-1.2zM78.96,126.90h1.2v1.2h-1.2zM78.96,326.90h1.2v1.2h-1.2zM87.38,126.90h1.2v1.2h-1.2zM87.38,326.90h1.2v1.2h-1.2zM95.79,126.90h1.2v1.2h-1.2zM95.79,326.90h1.2v1.2h-1.2zM104.20,126.90h1.2v1.2h-1.2zM104.20,326.90h1.2v1.2h-1.2zM112.61,126.90h1.2v1.2h-1.2zM112.61,326.90h1.2v1.2h-1.2zM121.03,126.90h1.2v1.2h-1.2zM121.03,326.90h1.2v1.2h-1.2zM129.44,126.90h1.2v1.2h-1.2zM129.44,326.90h1.2v1.2h-1.2zM137.85,126.90h1.2v1.2h-1.2zM137.85,326.90h1.2v1.2h-1.2zM146.26,126.90h1.2v1.2h-1.2zM146.26,326.90h1.2v1.2h-1.2zM154.68,126.90h1.2v1.2h-1.2zM154.68,326.90h1.2v1.2h-1.2zM163.09,126.90h1.2v1.2h-1.2zM163.09,326.90h1.2v1.2h-1.2zM171.50,126.90h1.2v1.2h-1.2zM171.50,326.90h1.2v1.2h-1.2zM179.91,126.90h1.2v1.2h-1.2zM179.91,326.90h1.2v1.2h-1.2zM188.33,126.90h1.2v1.2h-1.2zM188.33,326.90h1.2v1.2h-1.2zM196.74,126.90h1.2v1.2h-1.2zM196.74,326.90h1.2v1.2h-1.2zM205.15,126.90h1.2v1.2h-1.2zM205.15,326.90h1.2v1.2h-1.2zM213.56,126.90h1.2v1.2h-1.2zM213.56,326.90h1.2v1.2h-1.2zM221.97,126.90h1.2v1.2h-1.2zM221.97,326.90h1.2v1.2h-1.2zM230.39,126.90h1.2v1.2h-1.2zM230.39,326.90h1.2v1.2h-1.2zM238.80,126.90h1.2v1.2h-1.2zM238.80,326.90h1.2v1.2h-1.2zM247.21,126.90h1.2v1.2h-1.2zM247.21,326.90h1.2v1.2h-1.2zM255.63,126.90h1.2v1.2h-1.2zM255.63,326.90h1.2v1.2h-1.2zM264.04,126.90h1.2v1.2h-1.2zM264.04,326.90h1.2v1.2h-1.2zM272.45,126.90h1.2v1.2h-1.2zM272.45,326.90h1.2v1.2h-1.2zM280.86,126.90h1.2v1.2h-1.2zM280.86,326.90h1.2v1.2h-1.2zM289.27,126.90h1.2v1.2h-1.2zM289.27,326.90h1.2v1.2h-1.2zM297.69,126.90h1.2v1.2h-1.2zM297.69,326.90h1.2v1.2h-1.2zM306.10,126.90h1.2v1.2h-1.2zM306.10,326.90h1.2v1.2h-1.2zM314.51,126.90h1.2v1.2h-1.2zM314.51,326.90h1.2v1.2h-1.2zM322.92,126.90h1.2v1.2h-1.2zM322.92,326.90h1.2v1.2h-1.2zM331.34,126.90h1.2v1.2h-1.2zM331.34,326.90h1.2v1.2h-1.2zM339.75,126.90h1.2v1.2h-1.2zM339.75,326.90h1.2v1.2h-1.2zM348.16,126.90h1.2v1.2h-1.2zM348.16,326.90h1.2v1.2h-1.2zM356.57,126.90h1.2v1.2h-1.2zM356.57,326.90h1.2v1.2h-1.2zM364.99,126.90h1.2v1.2h-1.2zM364.99,326.90h1.2v1.2h-1.2zM373.40,126.90h1.2v1.2h-1.2zM373.40,326.90h1.2v1.2h-1.2zM381.81,126.90h1.2v1.2h-1.2zM381.81,326.90h1.2v1.2h-1.2zM390.22,126.90h1.2v1.2h-1.2zM390.22,326.90h1.2v1.2h-1.2zM398.64,126.90h1.2v1.2h-1.2zM398.64,326.90h1.2v1.2h-1.2zM407.05,126.90h1.2v1.2h-1.2zM407.05,326.90h1.2v1.2h-1.2zM415.46,126.90h1.2v1.2h-1.2zM415.46,326.90h1.2v1.2h-1.2zM423.88,126.90h1.2v1.2h-1.2zM423.88,326.90h1.2v1.2h-1.2zM432.29,126.90h1.2v1.2h-1.2zM432.29,326.90h1.2v1.2h-1.2zM440.70,126.90h1.2v1.2h-1.2zM440.70,326.90h1.2v1.2h-1.2zM449.11,126.90h1.2v1.2h-1.2zM449.11,326.90h1.2v1.2h-1.2zM457.52,126.90h1.2v1.2h-1.2zM457.52,326.90h1.2v1.2h-1.2zM465.94,126.90h1.2v1.2h-1.2zM465.94,326.90h1.2v1.2h-1.2zM474.35,126.90h1.2v1.2h-1.2zM474.35,326.90h1.2v1.2h-1.2zM482.76,126.90h1.2v1.2h-1.2zM482.76,326.90h1.2v1.2h-1.2zM491.17,126.90h1.2v1.2h-1.2zM491.17,326.90h1.2v1.2h-1.2zM499.59,126.90h1.2v1.2h-1.2zM499.59,326.90h1.2v1.2h-1.2zM508.00,126.90h1.2v1.2h-1.2zM508.00,326.90h1.2v1.2h-1.2zM516.41,126.90h1.2v1.2h-1.2zM516.41,326.90h1.2v1.2h-1.2zM524.82,126.90h1.2v1.2h-1.2zM524.82,326.90h1.2v1.2h-1.2zM533.24,126.90h1.2v1.2h-1.2zM533.24,326.90h1.2v1.2h-1.2zM541.65,126.90h1.2v1.2h-1.2zM541.65,326.90h1.2v1.2h-1.2zM550.06,126.90h1.2v1.2h-1.2zM550.06,326.90h1.2v1.2h-1.2zM558.48,126.90h1.2v1.2h-1.2zM558.48,326.90h1.2v1.2h-1.2zM566.89,126.90h1.2v1.2h-1.2zM566.89,326.90h1.2v1.2h-1.2zM575.30,126.90h1.2v1.2h-1.2zM575.30,326.90h1.2v1.2h-1.2zM583.71,126.90h1.2v1.2h-1.2zM583.71,326.90h1.2v1.2h-1.2zM592.12,126.90h1.2v1.2h-1.2zM592.12,326.90h1.2v1.2h-1.2zM600.54,126.90h1.2v1.2h-1.2zM600.54,326.90h1.2v1.2h-1.2zM608.95,126.90h1.2v1.2h-1.2zM608.95,326.90h1.2v1.2h-1.2zM617.36,126.90h1.2v1.2h-1.2zM617.36,326.90h1.2v1.2h-1.2zM625.77,126.90h1.2v1.2h-1.2zM625.77,326.90h1.2v1.2h-1.2zM634.19,126.90h1.2v1.2h-1.2zM634.19,326.90h1.2v1.2h-1.2zM642.60,126.90h1.2v1.2h-1.2zM642.60,326.90h1.2v1.2h-1.2zM651.01,126.90h1.2v1.2h-1.2zM651.01,326.90h1.2v1.2h-1.2zM659.42,126.90h1.2v1.2h-1.2zM659.42,326.90h1.2v1.2h-1.2zM667.84,126.90h1.2v1.2h-1.2zM667.84,326.90h1.2v1.2h-1.2zM676.25,126.90h1.2v1.2h-1.2zM676.25,326.90h1.2v1.2h-1.2zM684.66,126.90h1.2v1.2h-1.2zM684.66,326.90h1.2v1.2h-1.2zM693.07,126.90h1.2v1.2h-1.2zM693.07,326.90h1.2v1.2h-1.2zM701.49,126.90h1.2v1.2h-1.2zM701.49,326.90h1.2v1.2h-1.2zM37.90,130.95h1.2v1.2h-1.2zM708.90,130.95h1.2v1.2h-1.2zM37.90,136.00h1.2v1.2h-1.2zM708.90,136.00h1.2v1.2h-1.2zM37.90,141.05h1.2v1.2h-1.2zM708.90,141.05h1.2v1.2h-1.2zM37.90,146.10h1.2v1.2h-1.2zM708.90,146.10h1.2v1.2h-1.2zM37.90,151.15h1.2v1.2h-1.2zM708.90,151.15h1.2v1.2h-1.2zM37.90,156.20h1.2v1.2h-1.2zM708.90,156.20h1.2v1.2h-1.2zM37.90,161.25h1.2v1.2h-1.2zM708.90,161.25h1.2v1.2h-1.2zM37.90,166.30h1.2v1.2h-1.2zM708.90,166.30h1.2v1.2h-1.2zM37.90,171.35h1.2v1.2h-1.2zM708.90,171.35h1.2v1.2h-1.2zM37.90,176.40h1.2v1.2h-1.2zM708.90,176.40h1.2v1.2h-1.2zM37.90,181.45h1.2v1.2h-1.2zM708.90,181.45h1.2v1.2h-1.2zM37.90,186.50h1.2v1.2h-1.2zM708.90,186.50h1.2v1.2h-1.2zM37.90,191.55h1.2v1.2h-1.2zM708.90,191.55h1.2v1.2h-1.2zM37.90,196.60h1.2v1.2h-1.2zM708.90,196.60h1.2v1.2h-1.2zM37.90,201.65h1.2v1.2h-1.2zM708.90,201.65h1.2v1.2h-1.2zM37.90,206.70h1.2v1.2h-1.2zM708.90,206.70h1.2v1.2h-1.2zM37.90,211.75h1.2v1.2h-1.2zM708.90,211.75h1.2v1.2h-1.2zM37.90,216.80h1.2v1.2h-1.2zM708.90,216.80h1.2v1.2h-1.2zM37.90,221.85h1.2v1.2h-1.2zM708.90,221.85h1.2v1.2h-1.2zM37.90,226.90h1.2v1.2h-1.2zM708.90,226.90h1.2v1.2h-1.2zM37.90,231.95h1.2v1.2h-1.2zM708.90,231.95h1.2v1.2h-1.2zM37.90,237.00h1.2v1.2h-1.2zM708.90,237.00h1.2v1.2h-1.2zM37.90,242.05h1.2v1.2h-1.2zM708.90,242.05h1.2v1.2h-1.2zM37.90,247.10h1.2v1.2h-1.2zM708.90,247.10h1.2v1.2h-1.2zM37.90,252.15h1.2v1.2h-1.2zM708.90,252.15h1.2v1.2h-1.2zM37.90,257.20h1.2v1.2h-1.2zM708.90,257.20h1.2v1.2h-1.2zM37.90,262.25h1.2v1.2h-1.2zM708.90,262.25h1.2v1.2h-1.2zM37.90,267.30h1.2v1.2h-1.2zM708.90,267.30h1.2v1.2h-1.2zM37.90,272.35h1.2v1.2h-1.2zM708.90,272.35h1.2v1.2h-1.2zM37.90,277.40h1.2v1.2h-1.2zM708.90,277.40h1.2v1.2h-1.2zM37.90,282.45h1.2v1.2h-1.2zM708.90,282.45h1.2v1.2h-1.2zM37.90,287.50h1.2v1.2h-1.2zM708.90,287.50h1.2v1.2h-1.2zM37.90,292.55h1.2v1.2h-1.2zM708.90,292.55h1.2v1.2h-1.2zM37.90,297.60h1.2v1.2h-1.2zM708.90,297.60h1.2v1.2h-1.2zM37.90,302.65h1.2v1.2h-1.2zM708.90,302.65h1.2v1.2h-1.2zM37.90,307.70h1.2v1.2h-1.2zM708.90,307.70h1.2v1.2h-1.2zM37.90,312.75h1.2v1.2h-1.2zM708.90,312.75h1.2v1.2h-1.2zM37.90,317.80h1.2v1.2h-1.2zM708.90,317.80h1.2v1.2h-1.2zM37.90,322.85h1.2v1.2h-1.2zM708.90,322.85h1.2v1.2h-1.2z" fill="#197a55"/>
<defs><clipPath id="gc"><rect x="37.5" y="126.5" width="673.0" height="202.0"/></clipPath></defs>
<g clip-path="url(#gc)" fill="none" stroke-width="1.1">
<path d="M37.50,181.99 L38.00,185.11 L38.50,189.16 L39.00,194.07 L39.50,199.71 L40.00,205.96 L40.50,212.69 L41.00,219.74 L41.50,226.96 L42.00,234.19 L42.50,241.26 L43.00,248.02 L43.50,254.31 L44.00,260.01 L44.50,264.97 L45.00,269.10 L45.50,272.30 L46.00,274.49 L46.50,275.63 L47.00,275.70 L47.50,274.68 L48.00,272.61 L48.50,269.54 L49.00,265.52 L49.50,260.65 L50.00,255.03 L50.50,248.80 L51.00,242.09 L51.50,235.05 L52.00,227.83 L52.50,220.60 L53.00,213.52 L53.50,206.75 L54.00,200.43 L54.50,194.71 L55.00,189.71 L55.50,185.55 L56.00,182.31 L56.50,180.08 L57.00,178.89 L57.50,178.79 L58.00,179.76 L58.50,181.78 L59.00,184.82 L59.50,188.81 L60.00,193.65 L60.50,199.23 L61.00,205.44 L61.50,212.14 L62.00,219.17 L62.50,226.38 L63.00,233.61 L63.50,240.70 L64.00,247.49 L64.50,253.83 L65.00,259.58 L65.50,264.61 L66.00,268.80 L66.50,272.08 L67.00,274.35 L67.50,275.58 L68.00,275.73 L68.50,274.80 L69.00,272.82 L69.50,269.82 L70.00,265.87 L70.50,261.06 L71.00,255.50 L71.50,249.32 L72.00,242.64 L72.50,235.62 L73.00,228.41 L73.50,221.18 L74.00,214.08 L74.50,207.27 L75.00,200.91 L75.50,195.14 L76.00,190.08 L76.50,185.85 L77.00,182.54 L77.50,180.22 L78.00,178.95 L78.50,178.76 L79.00,179.64 L79.50,181.58 L80.00,184.54 L80.50,188.45 L81.00,193.23 L81.50,198.76 L82.00,204.93 L82.50,211.59 L83.00,218.60 L83.50,225.80 L84.00,233.04 L84.50,240.14 L85.00,246.96 L85.50,253.34 L86.00,259.14 L86.50,264.23 L87.00,268.50 L87.50,271.85 L88.00,274.21 L88.50,275.52 L89.00,275.76 L89.50,274.92 L90.00,273.01 L90.50,270.09 L91.00,266.22 L91.50,261.48 L92.00,255.97 L92.50,249.83 L93.00,243.19 L93.50,236.19 L94.00,228.99 L94.50,221.75 L95.00,214.64 L95.50,207.80 L96.00,201.40 L96.50,195.58 L97.00,190.45 L97.50,186.15 L98.00,182.76 L98.50,180.37 L99.00,179.01 L99.50,178.73 L100.00,179.53 L100.50,181.39 L101.00,184.27 L101.50,188.11 L102.00,192.82 L102.50,198.29 L103.00,204.41 L103.50,211.04 L104.00,218.03 L104.50,225.22 L105.00,232.46 L105.50,239.58 L106.00,246.43 L106.50,252.85 L107.00,258.70 L107.50,263.86 L108.00,268.19 L108.50,271.62 L109.00,274.06 L109.50,275.45 L110.00,275.78 L110.50,275.02 L111.00,273.20 L111.50,270.36 L112.00,266.56 L112.50,261.89 L113.00,256.44 L113.50,250.34 L114.00,243.73 L114.50,236.76 L115.00,229.57 L115.50,222.33 L116.00,215.20 L116.50,208.34 L117.00,201.90 L117.50,196.02 L118.00,190.84 L118.50,186.46 L119.00,183.00 L119.50,180.52 L120.00,179.08 L120.50,178.71 L121.00,179.43 L121.50,181.20 L122.00,184.00 L122.50,187.77 L123.00,192.41 L123.50,197.83 L124.00,203.90 L124.50,210.49 L125.00,217.46 L125.50,224.64 L126.00,231.88 L126.50,239.02 L127.00,245.90 L127.50,252.36 L128.00,258.26 L128.50,263.47 L129.00,267.88 L129.50,271.38 L130.00,273.90 L130.50,275.38 L131.00,275.79 L131.50,275.12 L132.00,273.39 L132.50,270.63 L133.00,266.90 L133.50,262.29 L134.00,256.90 L134.50,250.85 L135.00,244.28 L135.50,237.33 L136.00,230.15 L136.50,222.91 L137.00,215.76 L137.50,208.87 L138.00,202.39 L138.50,196.46 L139.00,191.22 L139.50,186.78 L140.00,183.24 L140.50,180.68 L141.00,179.16 L141.50,178.70 L142.00,179.33 L142.50,181.02 L143.00,183.74 L143.50,187.43 L144.00,192.01 L144.50,197.37 L145.00,203.39 L145.50,209.95 L146.00,216.89 L146.50,224.06 L147.00,231.30 L147.50,238.46 L148.00,245.36 L148.50,251.86 L149.00,257.81 L149.50,263.08 L150.00,267.56 L150.50,271.13 L151.00,273.74 L151.50,275.30 L152.00,275.80 L152.50,275.22 L153.00,273.57 L153.50,270.88 L154.00,267.23 L154.50,262.69 L155.00,257.36 L155.50,251.36 L156.00,244.82 L156.50,237.89 L157.00,230.73 L157.50,223.48 L158.00,216.33 L158.50,209.41 L159.00,202.89 L159.50,196.91 L160.00,191.61 L160.50,187.11 L161.00,183.49 L161.50,180.85 L162.00,179.24 L162.50,178.70 L163.00,179.24 L163.50,180.85 L164.00,183.49 L164.50,187.11 L165.00,191.61 L165.50,196.91 L166.00,202.89 L166.50,209.41 L167.00,216.33 L167.50,223.48 L168.00,230.73 L168.50,237.89 L169.00,244.82 L169.50,251.36 L170.00,257.36 L170.50,262.69 L171.00,267.23 L171.50,270.88 L172.00,273.57 L172.50,275.22 L173.00,275.80 L173.50,275.30 L174.00,273.74 L174.50,271.13 L175.00,267.56 L175.50,263.08 L176.00,257.81 L176.50,251.86 L177.00,245.36 L177.50,238.46 L178.00,231.30 L178.50,224.06 L179.00,216.89 L179.50,209.95 L180.00,203.39 L180.50,197.37 L181.00,192.01 L181.50,187.43 L182.00,183.74 L182.50,181.02 L183.00,179.33 L183.50,178.70 L184.00,179.16 L184.50,180.68 L185.00,183.24 L185.50,186.78 L186.00,191.22 L186.50,196.46 L187.00,202.39 L187.50,208.87 L188.00,215.76 L188.50,222.91 L189.00,230.15 L189.50,237.33 L190.00,244.28 L190.50,250.85 L191.00,256.90 L191.50,262.29 L192.00,266.90 L192.50,270.63 L193.00,273.39 L193.50,275.12 L194.00,275.79 L194.50,275.38 L195.00,273.90 L195.50,271.38 L196.00,267.88 L196.50,263.47 L197.00,258.26 L197.50,252.36 L198.00,245.90 L198.50,239.02 L199.00,231.88 L199.50,224.64 L200.00,217.46 L200.50,210.49 L201.00,203.90 L201.50,197.83 L202.00,192.41 L202.50,187.77 L203.00,184.00 L203.50,181.20 L204.00,179.43 L204.50,178.71 L205.00,179.08 L205.50,180.52 L206.00,183.00 L206.50,186.46 L207.00,190.84 L207.50,196.02 L208.00,201.90 L208.50,208.34 L209.00,215.20 L209.50,222.33 L210.00,229.57 L210.50,236.76 L211.00,243.73 L211.50,250.34 L212.00,256.44 L212.50,261.89 L213.00,266.56 L213.50,270.36 L214.00,273.20 L214.50,275.02 L215.00,275.78 L215.50,275.45 L216.00,274.06 L216.50,271.62 L217.00,268.19 L217.50,263.86 L218.00,258.70 L218.50,252.85 L219.00,246.43 L219.50,239.58 L220.00,232.46 L220.50,225.22 L221.00,218.03 L221.50,211.04 L222.00,204.41 L222.50,198.29 L223.00,192.82 L223.50,188.11 L224.00,184.27 L224.50,181.39 L225.00,179.53 L225.50,178.73 L226.00,179.01 L226.50,180.37 L227.00,182.76 L227.50,186.15 L228.00,190.45 L228.50,195.58 L229.00,201.40 L229.50,207.80 L230.00,214.64 L230.50,221.75 L231.00,228.99 L231.50,236.19 L232.00,243.19 L232.50,249.83 L233.00,255.97 L233.50,261.48 L234.00,266.22 L234.50,270.09 L235.00,273.01 L235.50,274.92 L236.00,275.76 L236.50,275.52 L237.00,274.21 L237.50,271.85 L238.00,268.50 L238.50,264.23 L239.00,259.14 L239.50,253.34 L240.00,246.96 L240.50,240.14 L241.00,233.04 L241.50,225.80 L242.00,218.60 L242.50,211.59 L243.00,204.93 L243.50,198.76 L244.00,193.23 L244.50,188.45 L245.00,184.54 L245.50,181.58 L246.00,179.64 L246.50,178.76 L247.00,178.95 L247.50,180.22 L248.00,182.54 L248.50,185.85 L249.00,190.08 L249.50,195.14 L250.00,200.91 L250.50,207.27 L251.00,214.08 L251.50,221.18 L252.00,228.41 L252.50,235.62 L253.00,242.64 L253.50,249.32 L254.00,255.50 L254.50,261.06 L255.00,265.87 L255.50,269.82 L256.00,272.82 L256.50,274.80 L257.00,275.73 L257.50,275.58 L258.00,274.35 L258.50,272.08 L259.00,268.80 L259.50,264.61 L260.00,259.58 L260.50,253.83 L261.00,247.49 L261.50,240.70 L262.00,233.61 L262.50,226.38 L263.00,219.17 L263.50,212.14 L264.00,205.44 L264.50,199.23 L265.00,193.65 L265.50,188.81 L266.00,184.82 L266.50,181.78 L267.00,179.76 L267.50,178.79 L268.00,178.89 L268.50,180.08 L269.00,182.31 L269.50,185.55 L270.00,189.71 L270.50,194.71 L271.00,200.43 L271.50,206.75 L272.00,213.52 L272.50,220.60 L273.00,227.83 L273.50,235.05 L274.00,242.09 L274.50,248.80 L275.00,255.03 L275.50,260.65 L276.00,265.52 L276.50,269.54 L277.00,272.61 L277.50,274.68 L278.00,275.70 L278.50,275.63 L279.00,274.49 L279.50,272.30 L280.00,269.10 L280.50,264.97 L281.00,260.01 L281.50,254.31 L282.00,248.02 L282.50,241.26 L283.00,234.19 L283.50,226.96 L284.00,219.74 L284.50,212.69 L285.00,205.96 L285.50,199.71 L286.00,194.07 L286.50,189.16 L287.00,185.11 L287.50,181.99 L288.00,179.88 L288.50,178.82 L289.00,178.85 L289.50,179.95 L290.00,182.10 L290.50,185.25 L291.00,189.34 L291.50,194.28 L292.00,199.95 L292.50,206.22 L293.00,212.97 L293.50,220.03 L294.00,227.25 L294.50,234.47 L295.00,241.53 L295.50,248.28 L296.00,254.55 L296.50,260.22 L297.00,265.16 L297.50,269.25 L298.00,272.40 L298.50,274.55 L299.00,275.65 L299.50,275.68 L300.00,274.62 L300.50,272.51 L301.00,269.39 L301.50,265.34 L302.00,260.43 L302.50,254.79 L303.00,248.54 L303.50,241.81 L304.00,234.76 L304.50,227.54 L305.00,220.31 L305.50,213.24 L306.00,206.48 L306.50,200.19 L307.00,194.49 L307.50,189.53 L308.00,185.40 L308.50,182.20 L309.00,180.01 L309.50,178.87 L310.00,178.80 L310.50,179.82 L311.00,181.89 L311.50,184.96 L312.00,188.98 L312.50,193.85 L313.00,199.47 L313.50,205.70 L314.00,212.41 L314.50,219.45 L315.00,226.67 L315.50,233.90 L316.00,240.98 L316.50,247.75 L317.00,254.07 L317.50,259.79 L318.00,264.79 L318.50,268.95 L319.00,272.19 L319.50,274.42 L320.00,275.61 L320.50,275.71 L321.00,274.74 L321.50,272.72 L322.00,269.68 L322.50,265.69 L323.00,260.85 L323.50,255.27 L324.00,249.06 L324.50,242.36 L325.00,235.33 L325.50,228.12 L326.00,220.89 L326.50,213.80 L327.00,207.01 L327.50,200.67 L328.00,194.92 L328.50,189.89 L329.00,185.70 L329.50,182.42 L330.00,180.15 L330.50,178.92 L331.00,178.77 L331.50,179.70 L332.00,181.68 L332.50,184.68 L333.00,188.63 L333.50,193.44 L334.00,199.00 L334.50,205.18 L335.00,211.86 L335.50,218.88 L336.00,226.09 L336.50,233.32 L337.00,240.42 L337.50,247.23 L338.00,253.59 L338.50,259.36 L339.00,264.42 L339.50,268.65 L340.00,271.96 L340.50,274.28 L341.00,275.55 L341.50,275.74 L342.00,274.86 L342.50,272.92 L343.00,269.96 L343.50,266.05 L344.00,261.27 L344.50,255.74 L345.00,249.57 L345.50,242.91 L346.00,235.90 L346.50,228.70 L347.00,221.46 L347.50,214.36 L348.00,207.54 L348.50,201.16 L349.00,195.36 L349.50,190.27 L350.00,186.00 L350.50,182.65 L351.00,180.29 L351.50,178.98 L352.00,178.74 L352.50,179.58 L353.00,181.49 L353.50,184.41 L354.00,188.28 L354.50,193.02 L355.00,198.53 L355.50,204.67 L356.00,211.31 L356.50,218.31 L357.00,225.51 L357.50,232.75 L358.00,239.86 L358.50,246.70 L359.00,253.10 L359.50,258.92 L360.00,264.05 L360.50,268.35 L361.00,271.74 L361.50,274.13 L362.00,275.49 L362.50,275.77 L363.00,274.97 L363.50,273.11 L364.00,270.23 L364.50,266.39 L365.00,261.68 L365.50,256.21 L366.00,250.09 L366.50,243.46 L367.00,236.47 L367.50,229.28 L368.00,222.04 L368.50,214.92 L369.00,208.07 L369.50,201.65 L370.00,195.80 L370.50,190.64 L371.00,186.31 L371.50,182.88 L372.00,180.44 L372.50,179.05 L373.00,178.72 L373.50,179.48 L374.00,181.30 L374.50,184.14 L375.00,187.94 L375.50,192.61 L376.00,198.06 L376.50,204.16 L377.00,210.77 L377.50,217.74 L378.00,224.93 L378.50,232.17 L379.00,239.30 L379.50,246.16 L380.00,252.60 L380.50,258.48 L381.00,263.66 L381.50,268.04 L382.00,271.50 L382.50,273.98 L383.00,275.42 L383.50,275.79 L384.00,275.07 L384.50,273.30 L385.00,270.50 L385.50,266.73 L386.00,262.09 L386.50,256.67 L387.00,250.60 L387.50,244.01 L388.00,237.04 L388.50,229.86 L389.00,222.62 L389.50,215.48 L390.00,208.60 L390.50,202.14 L391.00,196.24 L391.50,191.03 L392.00,186.62 L392.50,183.12 L393.00,180.60 L393.50,179.12 L394.00,178.71 L394.50,179.38 L395.00,181.11 L395.50,183.87 L396.00,187.60 L396.50,192.21 L397.00,197.60 L397.50,203.65 L398.00,210.22 L398.50,217.17 L399.00,224.35 L399.50,231.59 L400.00,238.74 L400.50,245.63 L401.00,252.11 L401.50,258.04 L402.00,263.28 L402.50,267.72 L403.00,271.26 L403.50,273.82 L404.00,275.34 L404.50,275.80 L405.00,275.17 L405.50,273.48 L406.00,270.76 L406.50,267.07 L407.00,262.49 L407.50,257.13 L408.00,251.11 L408.50,244.55 L409.00,237.61 L409.50,230.44 L410.00,223.20 L410.50,216.04 L411.00,209.14 L411.50,202.64 L412.00,196.69 L412.50,191.42 L413.00,186.94 L413.50,183.37 L414.00,180.76 L414.50,179.20 L415.00,178.70 L415.50,179.28 L416.00,180.93 L416.50,183.62 L417.00,187.27 L417.50,191.81 L418.00,197.14 L418.50,203.14 L419.00,209.68 L419.50,216.61 L420.00,223.77 L420.50,231.02 L421.00,238.17 L421.50,245.09 L422.00,251.61 L422.50,257.59 L423.00,262.89 L423.50,267.39 L424.00,271.01 L424.50,273.65 L425.00,275.26 L425.50,275.80 L426.00,275.26 L426.50,273.65 L427.00,271.01 L427.50,267.39 L428.00,262.89 L428.50,257.59 L429.00,251.61 L429.50,245.09 L430.00,238.17 L430.50,231.02 L431.00,223.77 L431.50,216.61 L432.00,209.68 L432.50,203.14 L433.00,197.14 L433.50,191.81 L434.00,187.27 L434.50,183.62 L435.00,180.93 L435.50,179.28 L436.00,178.70 L436.50,179.20 L437.00,180.76 L437.50,183.37 L438.00,186.94 L438.50,191.42 L439.00,196.69 L439.50,202.64 L440.00,209.14 L440.50,216.04 L441.00,223.20 L441.50,230.44 L442.00,237.61 L442.50,244.55 L443.00,251.11 L443.50,257.13 L444.00,262.49 L444.50,267.07 L445.00,270.76 L445.50,273.48 L446.00,275.17 L446.50,275.80 L447.00,275.34 L447.50,273.82 L448.00,271.26 L448.50,267.72 L449.00,263.28 L449.50,258.04 L450.00,252.11 L450.50,245.63 L451.00,238.74 L451.50,231.59 L452.00,224.35 L452.50,217.17 L453.00,210.22 L453.50,203.65 L454.00,197.60 L454.50,192.21 L455.00,187.60 L455.50,183.87 L456.00,181.11 L456.50,179.38 L457.00,178.71 L457.50,179.12 L458.00,180.60 L458.50,183.12 L459.00,186.62 L459.50,191.03 L460.00,196.24 L460.50,202.14 L461.00,208.60 L461.50,215.48 L462.00,222.62 L462.50,229.86 L463.00,237.04 L463.50,244.01 L464.00,250.60 L464.50,256.67 L465.00,262.09 L465.50,266.73 L466.00,270.50 L466.50,273.30 L467.00,275.07 L467.50,275.79 L468.00,275.42 L468.50,273.98 L469.00,271.50 L469.50,268.04 L470.00,263.66 L470.50,258.48 L471.00,252.60 L471.50,246.16 L472.00,239.30 L472.50,232.17 L473.00,224.93 L473.50,217.74 L474.00,210.77 L474.50,204.16 L475.00,198.06 L475.50,192.61 L476.00,187.94 L476.50,184.14 L477.00,181.30 L477.50,179.48 L478.00,178.72 L478.50,179.05 L479.00,180.44 L479.50,182.88 L480.00,186.31 L480.50,190.64 L481.00,195.80 L481.50,201.65 L482.00,208.07 L482.50,214.92 L483.00,222.04 L483.50,229.28 L484.00,236.47 L484.50,243.46 L485.00,250.09 L485.50,256.21 L486.00,261.68 L486.50,266.39 L487.00,270.23 L487.50,273.11 L488.00,274.97 L488.50,275.77 L489.00,275.49 L489.50,274.13 L490.00,271.74 L490.50,268.35 L491.00,264.05 L491.50,258.92 L492.00,253.10 L492.50,246.70 L493.00,239.86 L493.50,232.75 L494.00,225.51 L494.50,218.31 L495.00,211.31 L495.50,204.67 L496.00,198.53 L496.50,193.02 L497.00,188.28 L497.50,184.41 L498.00,181.49 L498.50,179.58 L499.00,178.74 L499.50,178.98 L500.00,180.29 L500.50,182.65 L501.00,186.00 L501.50,190.27 L502.00,195.36 L502.50,201.16 L503.00,207.54 L503.50,214.36 L504.00,221.46 L504.50,228.70 L505.00,235.90 L505.50,242.91 L506.00,249.57 L506.50,255.74 L507.00,261.27 L507.50,266.05 L508.00,269.96 L508.50,272.92 L509.00,274.86 L509.50,275.74 L510.00,275.55 L510.50,274.28 L511.00,271.96 L511.50,268.65 L512.00,264.42 L512.50,259.36 L513.00,253.59 L513.50,247.23 L514.00,240.42 L514.50,233.32 L515.00,226.09 L515.50,218.88 L516.00,211.86 L516.50,205.18 L517.00,199.00 L517.50,193.44 L518.00,188.63 L518.50,184.68 L519.00,181.68 L519.50,179.70 L520.00,178.77 L520.50,178.92 L521.00,180.15 L521.50,182.42 L522.00,185.70 L522.50,189.89 L523.00,194.92 L523.50,200.67 L524.00,207.01 L524.50,213.80 L525.00,220.89 L525.50,228.12 L526.00,235.33 L526.50,242.36 L527.00,249.06 L527.50,255.27 L528.00,260.85 L528.50,265.69 L529.00,269.68 L529.50,272.72 L530.00,274.74 L530.50,275.71 L531.00,275.61 L531.50,274.42 L532.00,272.19 L532.50,268.95 L533.00,264.79 L533.50,259.79 L534.00,254.07 L534.50,247.75 L535.00,240.98 L535.50,233.90 L536.00,226.67 L536.50,219.45 L537.00,212.41 L537.50,205.70 L538.00,199.47 L538.50,193.85 L539.00,188.98 L539.50,184.96 L540.00,181.89 L540.50,179.82 L541.00,178.80 L541.50,178.87 L542.00,180.01 L542.50,182.20 L543.00,185.40 L543.50,189.53 L544.00,194.49 L544.50,200.19 L545.00,206.48 L545.50,213.24 L546.00,220.31 L546.50,227.54 L547.00,234.76 L547.50,241.81 L548.00,248.54 L548.50,254.79 L549.00,260.43 L549.50,265.34 L550.00,269.39 L550.50,272.51 L551.00,274.62 L551.50,275.68 L552.00,275.65 L552.50,274.55 L553.00,272.40 L553.50,269.25 L554.00,265.16 L554.50,260.22 L555.00,254.55 L555.50,248.28 L556.00,241.53 L556.50,234.47 L557.00,227.25 L557.50,220.03 L558.00,212.97 L558.50,206.22 L559.00,199.95 L559.50,194.28 L560.00,189.34 L560.50,185.25 L561.00,182.10 L561.50,179.95 L562.00,178.85 L562.50,178.82 L563.00,179.88 L563.50,181.99 L564.00,185.11 L564.50,189.16 L565.00,194.07 L565.50,199.71 L566.00,205.96 L566.50,212.69 L567.00,219.74 L567.50,226.96 L568.00,234.19 L568.50,241.26 L569.00,248.02 L569.50,254.31 L570.00,260.01 L570.50,264.97 L571.00,269.10 L571.50,272.30 L572.00,274.49 L572.50,275.63 L573.00,275.70 L573.50,274.68 L574.00,272.61 L574.50,269.54 L575.00,265.52 L575.50,260.65 L576.00,255.03 L576.50,248.80 L577.00,242.09 L577.50,235.05 L578.00,227.83 L578.50,220.60 L579.00,213.52 L579.50,206.75 L580.00,200.43 L580.50,194.71 L581.00,189.71 L581.50,185.55 L582.00,182.31 L582.50,180.08 L583.00,178.89 L583.50,178.79 L584.00,179.76 L584.50,181.78 L585.00,184.82 L585.50,188.81 L586.00,193.65 L586.50,199.23 L587.00,205.44 L587.50,212.14 L588.00,219.17 L588.50,226.38 L589.00,233.61 L589.50,240.70 L590.00,247.49 L590.50,253.83 L591.00,259.58 L591.50,264.61 L592.00,268.80 L592.50,272.08 L593.00,274.35 L593.50,275.58 L594.00,275.73 L594.50,274.80 L595.00,272.82 L595.50,269.82 L596.00,265.87 L596.50,261.06 L597.00,255.50 L597.50,249.32 L598.00,242.64 L598.50,235.62 L599.00,228.41 L599.50,221.18 L600.00,214.08 L600.50,207.27 L601.00,200.91 L601.50,195.14 L602.00,190.08 L602.50,185.85 L603.00,182.54 L603.50,180.22 L604.00,178.95 L604.50,178.76 L605.00,179.64 L605.50,181.58 L606.00,184.54 L606.50,188.45 L607.00,193.23 L607.50,198.76 L608.00,204.93 L608.50,211.59 L609.00,218.60 L609.50,225.80 L610.00,233.04 L610.50,240.14 L611.00,246.96 L611.50,253.34 L612.00,259.14 L612.50,264.23 L613.00,268.50 L613.50,271.85 L614.00,274.21 L614.50,275.52 L615.00,275.76 L615.50,274.92 L616.00,273.01 L616.50,270.09 L617.00,266.22 L617.50,261.48 L618.00,255.97 L618.50,249.83 L619.00,243.19 L619.50,236.19 L620.00,228.99 L620.50,221.75 L621.00,214.64 L621.50,207.80 L622.00,201.40 L622.50,195.58 L623.00,190.45 L623.50,186.15 L624.00,182.76 L624.50,180.37 L625.00,179.01 L625.50,178.73 L626.00,179.53 L626.50,181.39 L627.00,184.27 L627.50,188.11 L628.00,192.82 L628.50,198.29 L629.00,204.41 L629.50,211.04 L630.00,218.03 L630.50,225.22 L631.00,232.46 L631.50,239.58 L632.00,246.43 L632.50,252.85 L633.00,258.70 L633.50,263.86 L634.00,268.19 L634.50,271.62 L635.00,274.06 L635.50,275.45 L636.00,275.78 L636.50,275.02 L637.00,273.20 L637.50,270.36 L638.00,266.56 L638.50,261.89 L639.00,256.44 L639.50,250.34 L640.00,243.73 L640.50,236.76 L641.00,229.57 L641.50,222.33 L642.00,215.20 L642.50,208.34 L643.00,201.90 L643.50,196.02 L644.00,190.84 L644.50,186.46 L645.00,183.00 L645.50,180.52 L646.00,179.08 L646.50,178.71 L647.00,179.43 L647.50,181.20 L648.00,184.00 L648.50,187.77 L649.00,192.41 L649.50,197.83 L650.00,203.90 L650.50,210.49 L651.00,217.46 L651.50,224.64 L652.00,231.88 L652.50,239.02 L653.00,245.90 L653.50,252.36 L654.00,258.26 L654.50,263.47 L655.00,267.88 L655.50,271.38 L656.00,273.90 L656.50,275.38 L657.00,275.79 L657.50,275.12 L658.00,273.39 L658.50,270.63 L659.00,266.90 L659.50,262.29 L660.00,256.90 L660.50,250.85 L661.00,244.28 L661.50,237.33 L662.00,230.15 L662.50,222.91 L663.00,215.76 L663.50,208.87 L664.00,202.39 L664.50,196.46 L665.00,191.22 L665.50,186.78 L666.00,183.24 L666.50,180.68 L667.00,179.16 L667.50,178.70 L668.00,179.33 L668.50,181.02 L669.00,183.74 L669.50,187.43 L670.00,192.01 L670.50,197.37 L671.00,203.39 L671.50,209.95 L672.00,216.89 L672.50,224.06 L673.00,231.30 L673.50,238.46 L674.00,245.36 L674.50,251.86 L675.00,257.81 L675.50,263.08 L676.00,267.56 L676.50,271.13 L677.00,273.74 L677.50,275.30 L678.00,275.80 L678.50,275.22 L679.00,273.57 L679.50,270.88 L680.00,267.23 L680.50,262.69 L681.00,257.36 L681.50,251.36 L682.00,244.82 L682.50,237.89 L683.00,230.73 L683.50,223.48 L684.00,216.33 L684.50,209.41 L685.00,202.89 L685.50,196.91 L686.00,191.61 L686.50,187.11 L687.00,183.49 L687.50,180.85 L688.00,179.24 L688.50,178.70 L689.00,179.24 L689.50,180.85 L690.00,183.49 L690.50,187.11 L691.00,191.61 L691.50,196.91 L692.00,202.89 L692.50,209.41 L693.00,216.33 L693.50,223.48 L694.00,230.73 L694.50,237.89 L695.00,244.82 L695.50,251.36 L696.00,257.36 L696.50,262.69 L697.00,267.23 L697.50,270.88 L698.00,273.57 L698.50,275.22 L699.00,275.80 L699.50,275.30 L700.00,273.74 L700.50,271.13 L701.00,267.56 L701.50,263.08 L702.00,257.81 L702.50,251.86 L703.00,245.36 L703.50,238.46 L704.00,231.30 L704.50,224.06 L705.00,216.89 L705.50,209.95 L706.00,203.39 L706.50,197.37 L707.00,192.01 L707.50,187.43 L708.00,183.74 L708.50,181.02 L709.00,179.33 L709.50,178.70 L710.00,179.16 L710.50,180.68" stroke="#1ab6c2"/>
<path d="M37.50,207.92 L38.00,201.39 L38.50,195.41 L39.00,190.13 L39.50,185.65 L40.00,182.08 L40.50,179.50 L41.00,177.96 L41.50,177.50 L42.00,178.14 L42.50,179.84 L43.00,182.59 L43.50,186.31 L44.00,190.92 L44.50,196.32 L45.00,202.40 L45.50,209.01 L46.00,216.01 L46.50,223.24 L47.00,230.54 L47.50,237.75 L48.00,244.71 L48.50,251.26 L49.00,257.26 L49.50,262.58 L50.00,267.09 L50.50,270.70 L51.00,273.32 L51.50,274.90 L52.00,275.40 L52.50,274.81 L53.00,273.15 L53.50,270.44 L54.00,266.76 L54.50,262.18 L55.00,256.81 L55.50,250.76 L56.00,244.16 L56.50,237.18 L57.00,229.96 L57.50,222.65 L58.00,215.44 L58.50,208.46 L59.00,201.89 L59.50,195.86 L60.00,190.52 L60.50,185.97 L61.00,182.33 L61.50,179.67 L62.00,178.04 L62.50,177.50 L63.00,178.04 L63.50,179.67 L64.00,182.33 L64.50,185.97 L65.00,190.52 L65.50,195.86 L66.00,201.89 L66.50,208.46 L67.00,215.44 L67.50,222.65 L68.00,229.96 L68.50,237.18 L69.00,244.16 L69.50,250.76 L70.00,256.81 L70.50,262.18 L71.00,266.76 L71.50,270.44 L72.00,273.15 L72.50,274.81 L73.00,275.40 L73.50,274.90 L74.00,273.32 L74.50,270.70 L75.00,267.09 L75.50,262.58 L76.00,257.26 L76.50,251.26 L77.00,244.71 L77.50,237.75 L78.00,230.54 L78.50,223.24 L79.00,216.01 L79.50,209.01 L80.00,202.40 L80.50,196.32 L81.00,190.92 L81.50,186.31 L82.00,182.59 L82.50,179.84 L83.00,178.14 L83.50,177.50 L84.00,177.96 L84.50,179.50 L85.00,182.08 L85.50,185.65 L86.00,190.13 L86.50,195.41 L87.00,201.39 L87.50,207.92 L88.00,214.87 L88.50,222.07 L89.00,229.37 L89.50,236.61 L90.00,243.62 L90.50,250.25 L91.00,256.35 L91.50,261.78 L92.00,266.43 L92.50,270.18 L93.00,272.97 L93.50,274.72 L94.00,275.39 L94.50,274.98 L95.00,273.48 L95.50,270.94 L96.00,267.41 L96.50,262.97 L97.00,257.71 L97.50,251.76 L98.00,245.25 L98.50,238.32 L99.00,231.12 L99.50,223.82 L100.00,216.58 L100.50,209.56 L101.00,202.91 L101.50,196.79 L102.00,191.32 L102.50,186.64 L103.00,182.85 L103.50,180.02 L104.00,178.23 L104.50,177.51 L105.00,177.88 L105.50,179.34 L106.00,181.84 L106.50,185.33 L107.00,189.74 L107.50,194.96 L108.00,200.89 L108.50,207.38 L109.00,214.30 L109.50,221.49 L110.00,228.79 L110.50,236.04 L111.00,243.07 L111.50,249.73 L112.00,255.88 L112.50,261.37 L113.00,266.09 L113.50,269.92 L114.00,272.78 L114.50,274.62 L115.00,275.38 L115.50,275.05 L116.00,273.64 L116.50,271.18 L117.00,267.73 L117.50,263.36 L118.00,258.16 L118.50,252.26 L119.00,245.79 L119.50,238.88 L120.00,231.70 L120.50,224.40 L121.00,217.15 L121.50,210.11 L122.00,203.42 L122.50,197.25 L123.00,191.73 L123.50,186.99 L124.00,183.12 L124.50,180.21 L125.00,178.34 L125.50,177.53 L126.00,177.81 L126.50,179.18 L127.00,181.60 L127.50,185.01 L128.00,189.35 L128.50,194.52 L129.00,200.39 L129.50,206.84 L130.00,213.73 L130.50,220.91 L131.00,228.20 L131.50,235.46 L132.00,242.52 L132.50,249.22 L133.00,255.41 L133.50,260.96 L134.00,265.74 L134.50,269.65 L135.00,272.59 L135.50,274.51 L136.00,275.36 L136.50,275.12 L137.00,273.79 L137.50,271.42 L138.00,268.04 L138.50,263.74 L139.00,258.61 L139.50,252.76 L140.00,246.32 L140.50,239.45 L141.00,232.28 L141.50,224.99 L142.00,217.73 L142.50,210.66 L143.00,203.94 L143.50,197.73 L144.00,192.15 L144.50,187.34 L145.00,183.39 L145.50,180.41 L146.00,178.45 L146.50,177.56 L147.00,177.75 L147.50,179.03 L148.00,181.37 L148.50,184.71 L149.00,188.97 L149.50,194.07 L150.00,199.90 L150.50,206.31 L151.00,213.17 L151.50,220.33 L152.00,227.62 L152.50,234.89 L153.00,241.97 L153.50,248.70 L154.00,254.94 L154.50,260.54 L155.00,265.39 L155.50,269.37 L156.00,272.39 L156.50,274.39 L157.00,275.33 L157.50,275.18 L158.00,273.94 L158.50,271.65 L159.00,268.35 L159.50,264.11 L160.00,259.04 L160.50,253.25 L161.00,246.86 L161.50,240.01 L162.00,232.86 L162.50,225.57 L163.00,218.30 L163.50,211.21 L164.00,204.46 L164.50,198.20 L165.00,192.57 L165.50,187.69 L166.00,183.67 L166.50,180.61 L167.00,178.57 L167.50,177.59 L168.00,177.70 L168.50,178.89 L169.00,181.14 L169.50,184.40 L170.00,188.60 L170.50,193.64 L171.00,199.41 L171.50,205.78 L172.00,212.61 L172.50,219.75 L173.00,227.03 L173.50,234.31 L174.00,241.41 L174.50,248.18 L175.00,254.46 L175.50,260.12 L176.00,265.03 L176.50,269.08 L177.00,272.19 L177.50,274.27 L178.00,275.29 L178.50,275.23 L179.00,274.08 L179.50,271.87 L180.00,268.65 L180.50,264.49 L181.00,259.48 L181.50,253.74 L182.00,247.39 L182.50,240.57 L183.00,233.44 L183.50,226.16 L184.00,218.88 L184.50,211.77 L185.00,204.99 L185.50,198.68 L186.00,192.99 L186.50,188.05 L187.00,183.96 L187.50,180.82 L188.00,178.69 L188.50,177.63 L189.00,177.65 L189.50,178.76 L190.00,180.92 L190.50,184.11 L191.00,188.23 L191.50,193.21 L192.00,198.92 L192.50,205.25 L193.00,212.05 L193.50,219.17 L194.00,226.45 L194.50,233.73 L195.00,240.85 L195.50,247.65 L196.00,253.98 L196.50,259.69 L197.00,264.67 L197.50,268.79 L198.00,271.98 L198.50,274.14 L199.00,275.25 L199.50,275.27 L200.00,274.21 L200.50,272.08 L201.00,268.94 L201.50,264.85 L202.00,259.91 L202.50,254.22 L203.00,247.91 L203.50,241.13 L204.00,234.02 L204.50,226.74 L205.00,219.46 L205.50,212.33 L206.00,205.51 L206.50,199.16 L207.00,193.42 L207.50,188.41 L208.00,184.25 L208.50,181.03 L209.00,178.82 L209.50,177.67 L210.00,177.61 L210.50,178.63 L211.00,180.71 L211.50,183.82 L212.00,187.87 L212.50,192.78 L213.00,198.44 L213.50,204.72 L214.00,211.49 L214.50,218.59 L215.00,225.87 L215.50,233.15 L216.00,240.29 L216.50,247.12 L217.00,253.49 L217.50,259.26 L218.00,264.30 L218.50,268.50 L219.00,271.76 L219.50,274.01 L220.00,275.20 L220.50,275.31 L221.00,274.33 L221.50,272.29 L222.00,269.23 L222.50,265.21 L223.00,260.33 L223.50,254.70 L224.00,248.44 L224.50,241.69 L225.00,234.60 L225.50,227.33 L226.00,220.04 L226.50,212.89 L227.00,206.04 L227.50,199.65 L228.00,193.86 L228.50,188.79 L229.00,184.55 L229.50,181.25 L230.00,178.96 L230.50,177.72 L231.00,177.57 L231.50,178.51 L232.00,180.51 L232.50,183.53 L233.00,187.51 L233.50,192.36 L234.00,197.96 L234.50,204.20 L235.00,210.93 L235.50,218.01 L236.00,225.28 L236.50,232.57 L237.00,239.73 L237.50,246.59 L238.00,253.00 L238.50,258.83 L239.00,263.93 L239.50,268.19 L240.00,271.53 L240.50,273.87 L241.00,275.15 L241.50,275.34 L242.00,274.45 L242.50,272.49 L243.00,269.51 L243.50,265.56 L244.00,260.75 L244.50,255.17 L245.00,248.96 L245.50,242.24 L246.00,235.17 L246.50,227.91 L247.00,220.62 L247.50,213.45 L248.00,206.58 L248.50,200.14 L249.00,194.29 L249.50,189.16 L250.00,184.86 L250.50,181.48 L251.00,179.11 L251.50,177.78 L252.00,177.54 L252.50,178.39 L253.00,180.31 L253.50,183.25 L254.00,187.16 L254.50,191.94 L255.00,197.49 L255.50,203.68 L256.00,210.38 L256.50,217.44 L257.00,224.70 L257.50,231.99 L258.00,239.17 L258.50,246.06 L259.00,252.51 L259.50,258.38 L260.00,263.55 L260.50,267.89 L261.00,271.30 L261.50,273.72 L262.00,275.09 L262.50,275.37 L263.00,274.56 L263.50,272.69 L264.00,269.78 L264.50,265.91 L265.00,261.17 L265.50,255.65 L266.00,249.48 L266.50,242.79 L267.00,235.75 L267.50,228.50 L268.00,221.20 L268.50,214.02 L269.00,207.11 L269.50,200.64 L270.00,194.74 L270.50,189.54 L271.00,185.17 L271.50,181.72 L272.00,179.26 L272.50,177.85 L273.00,177.52 L273.50,178.28 L274.00,180.12 L274.50,182.98 L275.00,186.81 L275.50,191.53 L276.00,197.02 L276.50,203.17 L277.00,209.83 L277.50,216.86 L278.00,224.11 L278.50,231.41 L279.00,238.60 L279.50,245.52 L280.00,252.01 L280.50,257.94 L281.00,263.16 L281.50,267.57 L282.00,271.06 L282.50,273.56 L283.00,275.02 L283.50,275.39 L284.00,274.67 L284.50,272.88 L285.00,270.05 L285.50,266.26 L286.00,261.58 L286.50,256.11 L287.00,249.99 L287.50,243.34 L288.00,236.32 L288.50,229.08 L289.00,221.78 L289.50,214.58 L290.00,207.65 L290.50,201.14 L291.00,195.19 L291.50,189.93 L292.00,185.49 L292.50,181.96 L293.00,179.42 L293.50,177.92 L294.00,177.51 L294.50,178.18 L295.00,179.93 L295.50,182.72 L296.00,186.47 L296.50,191.12 L297.00,196.55 L297.50,202.65 L298.00,209.28 L298.50,216.29 L299.00,223.53 L299.50,230.83 L300.00,238.03 L300.50,244.98 L301.00,251.51 L301.50,257.49 L302.00,262.77 L302.50,267.25 L303.00,270.82 L303.50,273.40 L304.00,274.94 L304.50,275.40 L305.00,274.76 L305.50,273.06 L306.00,270.31 L306.50,266.59 L307.00,261.98 L307.50,256.58 L308.00,250.50 L308.50,243.89 L309.00,236.89 L309.50,229.66 L310.00,222.36 L310.50,215.15 L311.00,208.19 L311.50,201.64 L312.00,195.64 L312.50,190.32 L313.00,185.81 L313.50,182.20 L314.00,179.58 L314.50,178.00 L315.00,177.50 L315.50,178.09 L316.00,179.75 L316.50,182.46 L317.00,186.14 L317.50,190.72 L318.00,196.09 L318.50,202.14 L319.00,208.74 L319.50,215.72 L320.00,222.94 L320.50,230.25 L321.00,237.46 L321.50,244.44 L322.00,251.01 L322.50,257.04 L323.00,262.38 L323.50,266.93 L324.00,270.57 L324.50,273.23 L325.00,274.86 L325.50,275.40 L326.00,274.86 L326.50,273.23 L327.00,270.57 L327.50,266.93 L328.00,262.38 L328.50,257.04 L329.00,251.01 L329.50,244.44 L330.00,237.46 L330.50,230.25 L331.00,222.94 L331.50,215.72 L332.00,208.74 L332.50,202.14 L333.00,196.09 L333.50,190.72 L334.00,186.14 L334.50,182.46 L335.00,179.75 L335.50,178.09 L336.00,177.50 L336.50,178.00 L337.00,179.58 L337.50,182.20 L338.00,185.81 L338.50,190.32 L339.00,195.64 L339.50,201.64 L340.00,208.19 L340.50,215.15 L341.00,222.36 L341.50,229.66 L342.00,236.89 L342.50,243.89 L343.00,250.50 L343.50,256.58 L344.00,261.98 L344.50,266.59 L345.00,270.31 L345.50,273.06 L346.00,274.76 L346.50,275.40 L347.00,274.94 L347.50,273.40 L348.00,270.82 L348.50,267.25 L349.00,262.77 L349.50,257.49 L350.00,251.51 L350.50,244.98 L351.00,238.03 L351.50,230.83 L352.00,223.53 L352.50,216.29 L353.00,209.28 L353.50,202.65 L354.00,196.55 L354.50,191.12 L355.00,186.47 L355.50,182.72 L356.00,179.93 L356.50,178.18 L357.00,177.51 L357.50,177.92 L358.00,179.42 L358.50,181.96 L359.00,185.49 L359.50,189.93 L360.00,195.19 L360.50,201.14 L361.00,207.65 L361.50,214.58 L362.00,221.78 L362.50,229.08 L363.00,236.32 L363.50,243.34 L364.00,249.99 L364.50,256.11 L365.00,261.58 L365.50,266.26 L366.00,270.05 L366.50,272.88 L367.00,274.67 L367.50,275.39 L368.00,275.02 L368.50,273.56 L369.00,271.06 L369.50,267.57 L370.00,263.16 L370.50,257.94 L371.00,252.01 L371.50,245.52 L372.00,238.60 L372.50,231.41 L373.00,224.11 L373.50,216.86 L374.00,209.83 L374.50,203.17 L375.00,197.02 L375.50,191.53 L376.00,186.81 L376.50,182.98 L377.00,180.12 L377.50,178.28 L378.00,177.52 L378.50,177.85 L379.00,179.26 L379.50,181.72 L380.00,185.17 L380.50,189.54 L381.00,194.74 L381.50,200.64 L382.00,207.11 L382.50,214.02 L383.00,221.20 L383.50,228.50 L384.00,235.75 L384.50,242.79 L385.00,249.48 L385.50,255.65 L386.00,261.17 L386.50,265.91 L387.00,269.78 L387.50,272.69 L388.00,274.56 L388.50,275.37 L389.00,275.09 L389.50,273.72 L390.00,271.30 L390.50,267.89 L391.00,263.55 L391.50,258.38 L392.00,252.51 L392.50,246.06 L393.00,239.17 L393.50,231.99 L394.00,224.70 L394.50,217.44 L395.00,210.38 L395.50,203.68 L396.00,197.49 L396.50,191.94 L397.00,187.16 L397.50,183.25 L398.00,180.31 L398.50,178.39 L399.00,177.54 L399.50,177.78 L400.00,179.11 L400.50,181.48 L401.00,184.86 L401.50,189.16 L402.00,194.29 L402.50,200.14 L403.00,206.58 L403.50,213.45 L404.00,220.62 L404.50,227.91 L405.00,235.17 L405.50,242.24 L406.00,248.96 L406.50,255.17 L407.00,260.75 L407.50,265.56 L408.00,269.51 L408.50,272.49 L409.00,274.45 L409.50,275.34 L410.00,275.15 L410.50,273.87 L411.00,271.53 L411.50,268.19 L412.00,263.93 L412.50,258.83 L413.00,253.00 L413.50,246.59 L414.00,239.73 L414.50,232.57 L415.00,225.28 L415.50,218.01 L416.00,210.93 L416.50,204.20 L417.00,197.96 L417.50,192.36 L418.00,187.51 L418.50,183.53 L419.00,180.51 L419.50,178.51 L420.00,177.57 L420.50,177.72 L421.00,178.96 L421.50,181.25 L422.00,184.55 L422.50,188.79 L423.00,193.86 L423.50,199.65 L424.00,206.04 L424.50,212.89 L425.00,220.04 L425.50,227.33 L426.00,234.60 L426.50,241.69 L427.00,248.44 L427.50,254.70 L428.00,260.33 L428.50,265.21 L429.00,269.23 L429.50,272.29 L430.00,274.33 L430.50,275.31 L431.00,275.20 L431.50,274.01 L432.00,271.76 L432.50,268.50 L433.00,264.30 L433.50,259.26 L434.00,253.49 L434.50,247.12 L435.00,240.29 L435.50,233.15 L436.00,225.87 L436.50,218.59 L437.00,211.49 L437.50,204.72 L438.00,198.44 L438.50,192.78 L439.00,187.87 L439.50,183.82 L440.00,180.71 L440.50,178.63 L441.00,177.61 L441.50,177.67 L442.00,178.82 L442.50,181.03 L443.00,184.25 L443.50,188.41 L444.00,193.42 L444.50,199.16 L445.00,205.51 L445.50,212.33 L446.00,219.46 L446.50,226.74 L447.00,234.02 L447.50,241.13 L448.00,247.91 L448.50,254.22 L449.00,259.91 L449.50,264.85 L450.00,268.94 L450.50,272.08 L451.00,274.21 L451.50,275.27 L452.00,275.25 L452.50,274.14 L453.00,271.98 L453.50,268.79 L454.00,264.67 L454.50,259.69 L455.00,253.98 L455.50,247.65 L456.00,240.85 L456.50,233.73 L457.00,226.45 L457.50,219.17 L458.00,212.05 L458.50,205.25 L459.00,198.92 L459.50,193.21 L460.00,188.23 L460.50,184.11 L461.00,180.92 L461.50,178.76 L462.00,177.65 L462.50,177.63 L463.00,178.69 L463.50,180.82 L464.00,183.96 L464.50,188.05 L465.00,192.99 L465.50,198.68 L466.00,204.99 L466.50,211.77 L467.00,218.88 L467.50,226.16 L468.00,233.44 L468.50,240.57 L469.00,247.39 L469.50,253.74 L470.00,259.48 L470.50,264.49 L471.00,268.65 L471.50,271.87 L472.00,274.08 L472.50,275.23 L473.00,275.29 L473.50,274.27 L474.00,272.19 L474.50,269.08 L475.00,265.03 L475.50,260.12 L476.00,254.46 L476.50,248.18 L477.00,241.41 L477.50,234.31 L478.00,227.03 L478.50,219.75 L479.00,212.61 L479.50,205.78 L480.00,199.41 L480.50,193.64 L481.00,188.60 L481.50,184.40 L482.00,181.14 L482.50,178.89 L483.00,177.70 L483.50,177.59 L484.00,178.57 L484.50,180.61 L485.00,183.67 L485.50,187.69 L486.00,192.57 L486.50,198.20 L487.00,204.46 L487.50,211.21 L488.00,218.30 L488.50,225.57 L489.00,232.86 L489.50,240.01 L490.00,246.86 L490.50,253.25 L491.00,259.04 L491.50,264.11 L492.00,268.35 L492.50,271.65 L493.00,273.94 L493.50,275.18 L494.00,275.33 L494.50,274.39 L495.00,272.39 L495.50,269.37 L496.00,265.39 L496.50,260.54 L497.00,254.94 L497.50,248.70 L498.00,241.97 L498.50,234.89 L499.00,227.62 L499.50,220.33 L500.00,213.17 L500.50,206.31 L501.00,199.90 L501.50,194.07 L502.00,188.97 L502.50,184.71 L503.00,181.37 L503.50,179.03 L504.00,177.75 L504.50,177.56 L505.00,178.45 L505.50,180.41 L506.00,183.39 L506.50,187.34 L507.00,192.15 L507.50,197.73 L508.00,203.94 L508.50,210.66 L509.00,217.73 L509.50,224.99 L510.00,232.28 L510.50,239.45 L511.00,246.32 L511.50,252.76 L512.00,258.61 L512.50,263.74 L513.00,268.04 L513.50,271.42 L514.00,273.79 L514.50,275.12 L515.00,275.36 L515.50,274.51 L516.00,272.59 L516.50,269.65 L517.00,265.74 L517.50,260.96 L518.00,255.41 L518.50,249.22 L519.00,242.52 L519.50,235.46 L520.00,228.20 L520.50,220.91 L521.00,213.73 L521.50,206.84 L522.00,200.39 L522.50,194.52 L523.00,189.35 L523.50,185.01 L524.00,181.60 L524.50,179.18 L525.00,177.81 L525.50,177.53 L526.00,178.34 L526.50,180.21 L527.00,183.12 L527.50,186.99 L528.00,191.73 L528.50,197.25 L529.00,203.42 L529.50,210.11 L530.00,217.15 L530.50,224.40 L531.00,231.70 L531.50,238.88 L532.00,245.79 L532.50,252.26 L533.00,258.16 L533.50,263.36 L534.00,267.73 L534.50,271.18 L535.00,273.64 L535.50,275.05 L536.00,275.38 L536.50,274.62 L537.00,272.78 L537.50,269.92 L538.00,266.09 L538.50,261.37 L539.00,255.88 L539.50,249.73 L540.00,243.07 L540.50,236.04 L541.00,228.79 L541.50,221.49 L542.00,214.30 L542.50,207.38 L543.00,200.89 L543.50,194.96 L544.00,189.74 L544.50,185.33 L545.00,181.84 L545.50,179.34 L546.00,177.88 L546.50,177.51 L547.00,178.23 L547.50,180.02 L548.00,182.85 L548.50,186.64 L549.00,191.32 L549.50,196.79 L550.00,202.91 L550.50,209.56 L551.00,216.58 L551.50,223.82 L552.00,231.12 L552.50,238.32 L553.00,245.25 L553.50,251.76 L554.00,257.71 L554.50,262.97 L555.00,267.41 L555.50,270.94 L556.00,273.48 L556.50,274.98 L557.00,275.39 L557.50,274.72 L558.00,272.97 L558.50,270.18 L559.00,266.43 L559.50,261.78 L560.00,256.35 L560.50,250.25 L561.00,243.62 L561.50,236.61 L562.00,229.37 L562.50,222.07 L563.00,214.87 L563.50,207.92 L564.00,201.39 L564.50,195.41 L565.00,190.13 L565.50,185.65 L566.00,182.08 L566.50,179.50 L567.00,177.96 L567.50,177.50 L568.00,178.14 L568.50,179.84 L569.00,182.59 L569.50,186.31 L570.00,190.92 L570.50,196.32 L571.00,202.40 L571.50,209.01 L572.00,216.01 L572.50,223.24 L573.00,230.54 L573.50,237.75 L574.00,244.71 L574.50,251.26 L575.00,257.26 L575.50,262.58 L576.00,267.09 L576.50,270.70 L577.00,273.32 L577.50,274.90 L578.00,275.40 L578.50,274.81 L579.00,273.15 L579.50,270.44 L580.00,266.76 L580.50,262.18 L581.00,256.81 L581.50,250.76 L582.00,244.16 L582.50,237.18 L583.00,229.96 L583.50,222.65 L584.00,215.44 L584.50,208.46 L585.00,201.89 L585.50,195.86 L586.00,190.52 L586.50,185.97 L587.00,182.33 L587.50,179.67 L588.00,178.04 L588.50,177.50 L589.00,178.04 L589.50,179.67 L590.00,182.33 L590.50,185.97 L591.00,190.52 L591.50,195.86 L592.00,201.89 L592.50,208.46 L593.00,215.44 L593.50,222.65 L594.00,229.96 L594.50,237.18 L595.00,244.16 L595.50,250.76 L596.00,256.81 L596.50,262.18 L597.00,266.76 L597.50,270.44 L598.00,273.15 L598.50,274.81 L599.00,275.40 L599.50,274.90 L600.00,273.32 L600.50,270.70 L601.00,267.09 L601.50,262.58 L602.00,257.26 L602.50,251.26 L603.00,244.71 L603.50,237.75 L604.00,230.54 L604.50,223.24 L605.00,216.01 L605.50,209.01 L606.00,202.40 L606.50,196.32 L607.00,190.92 L607.50,186.31 L608.00,182.59 L608.50,179.84 L609.00,178.14 L609.50,177.50 L610.00,177.96 L610.50,179.50 L611.00,182.08 L611.50,185.65 L612.00,190.13 L612.50,195.41 L613.00,201.39 L613.50,207.92 L614.00,214.87 L614.50,222.07 L615.00,229.37 L615.50,236.61 L616.00,243.62 L616.50,250.25 L617.00,256.35 L617.50,261.78 L618.00,266.43 L618.50,270.18 L619.00,272.97 L619.50,274.72 L620.00,275.39 L620.50,274.98 L621.00,273.48 L621.50,270.94 L622.00,267.41 L622.50,262.97 L623.00,257.71 L623.50,251.76 L624.00,245.25 L624.50,238.32 L625.00,231.12 L625.50,223.82 L626.00,216.58 L626.50,209.56 L627.00,202.91 L627.50,196.79 L628.00,191.32 L628.50,186.64 L629.00,182.85 L629.50,180.02 L630.00,178.23 L630.50,177.51 L631.00,177.88 L631.50,179.34 L632.00,181.84 L632.50,185.33 L633.00,189.74 L633.50,194.96 L634.00,200.89 L634.50,207.38 L635.00,214.30 L635.50,221.49 L636.00,228.79 L636.50,236.04 L637.00,243.07 L637.50,249.73 L638.00,255.88 L638.50,261.37 L639.00,266.09 L639.50,269.92 L640.00,272.78 L640.50,274.62 L641.00,275.38 L641.50,275.05 L642.00,273.64 L642.50,271.18 L643.00,267.73 L643.50,263.36 L644.00,258.16 L644.50,252.26 L645.00,245.79 L645.50,238.88 L646.00,231.70 L646.50,224.40 L647.00,217.15 L647.50,210.11 L648.00,203.42 L648.50,197.25 L649.00,191.73 L649.50,186.99 L650.00,183.12 L650.50,180.21 L651.00,178.34 L651.50,177.53 L652.00,177.81 L652.50,179.18 L653.00,181.60 L653.50,185.01 L654.00,189.35 L654.50,194.52 L655.00,200.39 L655.50,206.84 L656.00,213.73 L656.50,220.91 L657.00,228.20 L657.50,235.46 L658.00,242.52 L658.50,249.22 L659.00,255.41 L659.50,260.96 L660.00,265.74 L660.50,269.65 L661.00,272.59 L661.50,274.51 L662.00,275.36 L662.50,275.12 L663.00,273.79 L663.50,271.42 L664.00,268.04 L664.50,263.74 L665.00,258.61 L665.50,252.76 L666.00,246.32 L666.50,239.45 L667.00,232.28 L667.50,224.99 L668.00,217.73 L668.50,210.66 L669.00,203.94 L669.50,197.73 L670.00,192.15 L670.50,187.34 L671.00,183.39 L671.50,180.41 L672.00,178.45 L672.50,177.56 L673.00,177.75 L673.50,179.03 L674.00,181.37 L674.50,184.71 L675.00,188.97 L675.50,194.07 L676.00,199.90 L676.50,206.31 L677.00,213.17 L677.50,220.33 L678.00,227.62 L678.50,234.89 L679.00,241.97 L679.50,248.70 L680.00,254.94 L680.50,260.54 L681.00,265.39 L681.50,269.37 L682.00,272.39 L682.50,274.39 L683.00,275.33 L683.50,275.18 L684.00,273.94 L684.50,271.65 L685.00,268.35 L685.50,264.11 L686.00,259.04 L686.50,253.25 L687.00,246.86 L687.50,240.01 L688.00,232.86 L688.50,225.57 L689.00,218.30 L689.50,211.21 L690.00,204.46 L690.50,198.20 L691.00,192.57 L691.50,187.69 L692.00,183.67 L692.50,180.61 L693.00,178.57 L693.50,177.59 L694.00,177.70 L694.50,178.89 L695.00,181.14 L695.50,184.40 L696.00,188.60 L696.50,193.64 L697.00,199.41 L697.50,205.78 L698.00,212.61 L698.50,219.75 L699.00,227.03 L699.50,234.31 L700.00,241.41 L700.50,248.18 L701.00,254.46 L701.50,260.12 L702.00,265.03 L702.50,269.08 L703.00,272.19 L703.50,274.27 L704.00,275.29 L704.50,275.23 L705.00,274.08 L705.50,271.87 L706.00,268.65 L706.50,264.49 L707.00,259.48 L707.50,253.74 L708.00,247.39 L708.50,240.57 L709.00,233.44 L709.50,226.16 L710.00,218.88 L710.50,211.77" stroke="#c8b81a"/>
</g>
<path d="M26,223.8 H32.5 L35.8,227.1 L32.5,230.4 H26z" fill="#1ee4ee"/>
<text x="28.6" y="229.3" font-size="5.8" font-weight="bold" fill="#033" font-family="Liberation Sans">2</text>
<path d="M721,202.5 H715 L712,206 L715,209.5 H721z" fill="#e8d81c"/>
<text x="715.5" y="208.5" font-size="6" fill="#333" font-family="Liberation Sans">T</text>
<path d="M371,116.5 H377.5 V122 L374.2,125 L371,122z" fill="#f08a1c"/>
<text x="372.2" y="122" font-size="5.5" fill="#222" font-family="Liberation Sans">T</text>
<rect x="365" y="127.3" width="18" height="8.4" fill="#7a7a7a" opacity="0.6"/>
<text x="366" y="134.3" font-size="7" fill="#f08a1c" font-family="Liberation Sans" textLength="15.5" lengthAdjust="spacingAndGlyphs">-4 us</text>
<rect x="317.5" y="342.5" width="113.0" height="112.0" fill="none" stroke="#197a55" stroke-width="1" opacity="0.7"/>
<path d="M374.00,342.5 V454.5 M317.5,398.50 H430.5" stroke="#197a55" stroke-width="1" opacity="0.55"/>
<path d="M331.02,344.70h1.2v1.2h-1.2zM331.02,347.50h1.2v1.2h-1.2zM331.02,350.30h1.2v1.2h-1.2zM331.02,353.10h1.2v1.2h-1.2zM331.02,355.90h1.2v1.2h-1.2zM331.02,358.70h1.2v1.2h-1.2zM331.02,361.50h1.2v1.2h-1.2zM331.02,364.30h1.2v1.2h-1.2zM331.02,367.10h1.2v1.2h-1.2zM331.02,369.90h1.2v1.2h-1.2zM331.02,372.70h1.2v1.2h-1.2zM331.02,375.50h1.2v1.2h-1.2zM331.02,378.30h1.2v1.2h-1.2zM331.02,381.10h1.2v1.2h-1.2zM331.02,383.90h1.2v1.2h-1.2zM331.02,386.70h1.2v1.2h-1.2zM331.02,389.50h1.2v1.2h-1.2zM331.02,392.30h1.2v1.2h-1.2zM331.02,395.10h1.2v1.2h-1.2zM331.02,397.90h1.2v1.2h-1.2zM331.02,400.70h1.2v1.2h-1.2zM331.02,403.50h1.2v1.2h-1.2zM331.02,406.30h1.2v1.2h-1.2zM331.02,409.10h1.2v1.2h-1.2zM331.02,411.90h1.2v1.2h-1.2zM331.02,414.70h1.2v1.2h-1.2zM331.02,417.50h1.2v1.2h-1.2zM331.02,420.30h1.2v1.2h-1.2zM331.02,423.10h1.2v1.2h-1.2zM331.02,425.90h1.2v1.2h-1.2zM331.02,428.70h1.2v1.2h-1.2zM331.02,431.50h1.2v1.2h-1.2zM331.02,434.30h1.2v1.2h-1.2zM331.02,437.10h1.2v1.2h-1.2zM331.02,439.90h1.2v1.2h-1.2zM331.02,442.70h1.2v1.2h-1.2zM331.02,445.50h1.2v1.2h-1.2zM331.02,448.30h1.2v1.2h-1.2zM331.02,451.10h1.2v1.2h-1.2zM345.15,344.70h1.2v1.2h-1.2zM345.15,347.50h1.2v1.2h-1.2zM345.15,350.30h1.2v1.2h-1.2zM345.15,353.10h1.2v1.2h-1.2zM345.15,355.90h1.2v1.2h-1.2zM345.15,358.70h1.2v1.2h-1.2zM345.15,361.50h1.2v1.2h-1.2zM345.15,364.30h1.2v1.2h-1.2zM345.15,367.10h1.2v1.2h-1.2zM345.15,369.90h1.2v1.2h-1.2zM345.15,372.70h1.2v1.2h-1.2zM345.15,375.50h1.2v1.2h-1.2zM345.15,378.30h1.2v1.2h-1.2zM345.15,381.10h1.2v1.2h-1.2zM345.15,383.90h1.2v1.2h-1.2zM345.15,386.70h1.2v1.2h-1.2zM345.15,389.50h1.2v1.2h-1.2zM345.15,392.30h1.2v1.2h-1.2zM345.15,395.10h1.2v1.2h-1.2zM345.15,397.90h1.2v1.2h-1.2zM345.15,400.70h1.2v1.2h-1.2zM345.15,403.50h1.2v1.2h-1.2zM345.15,406.30h1.2v1.2h-1.2zM345.15,409.10h1.2v1.2h-1.2zM345.15,411.90h1.2v1.2h-1.2zM345.15,414.70h1.2v1.2h-1.2zM345.15,417.50h1.2v1.2h-1.2zM345.15,420.30h1.2v1.2h-1.2zM345.15,423.10h1.2v1.2h-1.2zM345.15,425.90h1.2v1.2h-1.2zM345.15,428.70h1.2v1.2h-1.2zM345.15,431.50h1.2v1.2h-1.2zM345.15,434.30h1.2v1.2h-1.2zM345.15,437.10h1.2v1.2h-1.2zM345.15,439.90h1.2v1.2h-1.2zM345.15,442.70h1.2v1.2h-1.2zM345.15,445.50h1.2v1.2h-1.2zM345.15,448.30h1.2v1.2h-1.2zM345.15,451.10h1.2v1.2h-1.2zM359.27,344.70h1.2v1.2h-1.2zM359.27,347.50h1.2v1.2h-1.2zM359.27,350.30h1.2v1.2h-1.2zM359.27,353.10h1.2v1.2h-1.2zM359.27,355.90h1.2v1.2h-1.2zM359.27,358.70h1.2v1.2h-1.2zM359.27,361.50h1.2v1.2h-1.2zM359.27,364.30h1.2v1.2h-1.2zM359.27,367.10h1.2v1.2h-1.2zM359.27,369.90h1.2v1.2h-1.2zM359.27,372.70h1.2v1.2h-1.2zM359.27,375.50h1.2v1.2h-1.2zM359.27,378.30h1.2v1.2h-1.2zM359.27,381.10h1.2v1.2h-1.2zM359.27,383.90h1.2v1.2h-1.2zM359.27,386.70h1.2v1.2h-1.2zM359.27,389.50h1.2v1.2h-1.2zM359.27,392.30h1.2v1.2h-1.2zM359.27,395.10h1.2v1.2h-1.2zM359.27,397.90h1.2v1.2h-1.2zM359.27,400.70h1.2v1.2h-1.2zM359.27,403.50h1.2v1.2h-1.2zM359.27,406.30h1.2v1.2h-1.2zM359.27,409.10h1.2v1.2h-1.2zM359.27,411.90h1.2v1.2h-1.2zM359.27,414.70h1.2v1.2h-1.2zM359.27,417.50h1.2v1.2h-1.2zM359.27,420.30h1.2v1.2h-1.2zM359.27,423.10h1.2v1.2h-1.2zM359.27,425.90h1.2v1.2h-1.2zM359.27,428.70h1.2v1.2h-1.2zM359.27,431.50h1.2v1.2h-1.2zM359.27,434.30h1.2v1.2h-1.2zM359.27,437.10h1.2v1.2h-1.2zM359.27,439.90h1.2v1.2h-1.2zM359.27,442.70h1.2v1.2h-1.2zM359.27,445.50h1.2v1.2h-1.2zM359.27,448.30h1.2v1.2h-1.2zM359.27,451.10h1.2v1.2h-1.2zM373.40,344.70h1.2v1.2h-1.2zM373.40,347.50h1.2v1.2h-1.2zM373.40,350.30h1.2v1.2h-1.2zM373.40,353.10h1.2v1.2h-1.2zM373.40,355.90h1.2v1.2h-1.2zM373.40,358.70h1.2v1.2h-1.2zM373.40,361.50h1.2v1.2h-1.2zM373.40,364.30h1.2v1.2h-1.2zM373.40,367.10h1.2v1.2h-1.2zM373.40,369.90h1.2v1.2h-1.2zM373.40,372.70h1.2v1.2h-1.2zM373.40,375.50h1.2v1.2h-1.2zM373.40,378.30h1.2v1.2h-1.2zM373.40,381.10h1.2v1.2h-1.2zM373.40,383.90h1.2v1.2h-1.2zM373.40,386.70h1.2v1.2h-1.2zM373.40,389.50h1.2v1.2h-1.2zM373.40,392.30h1.2v1.2h-1.2zM373.40,395.10h1.2v1.2h-1.2zM373.40,397.90h1.2v1.2h-1.2zM373.40,400.70h1.2v1.2h-1.2zM373.40,403.50h1.2v1.2h-1.2zM373.40,406.30h1.2v1.2h-1.2zM373.40,409.10h1.2v1.2h-1.2zM373.40,411.90h1.2v1.2h-1.2zM373.40,414.70h1.2v1.2h-1.2zM373.40,417.50h1.2v1.2h-1.2zM373.40,420.30h1.2v1.2h-1.2zM373.40,423.10h1.2v1.2h-1.2zM373.40,425.90h1.2v1.2h-1.2zM373.40,428.70h1.2v1.2h-1.2zM373.40,431.50h1.2v1.2h-1.2zM373.40,434.30h1.2v1.2h-1.2zM373.40,437.10h1.2v1.2h-1.2zM373.40,439.90h1.2v1.2h-1.2zM373.40,442.70h1.2v1.2h-1.2zM373.40,445.50h1.2v1.2h-1.2zM373.40,448.30h1.2v1.2h-1.2zM373.40,451.10h1.2v1.2h-1.2zM387.52,344.70h1.2v1.2h-1.2zM387.52,347.50h1.2v1.2h-1.2zM387.52,350.30h1.2v1.2h-1.2zM387.52,353.10h1.2v1.2h-1.2zM387.52,355.90h1.2v1.2h-1.2zM387.52,358.70h1.2v1.2h-1.2zM387.52,361.50h1.2v1.2h-1.2zM387.52,364.30h1.2v1.2h-1.2zM387.52,367.10h1.2v1.2h-1.2zM387.52,369.90h1.2v1.2h-1.2zM387.52,372.70h1.2v1.2h-1.2zM387.52,375.50h1.2v1.2h-1.2zM387.52,378.30h1.2v1.2h-1.2zM387.52,381.10h1.2v1.2h-1.2zM387.52,383.90h1.2v1.2h-1.2zM387.52,386.70h1.2v1.2h-1.2zM387.52,389.50h1.2v1.2h-1.2zM387.52,392.30h1.2v1.2h-1.2zM387.52,395.10h1.2v1.2h-1.2zM387.52,397.90h1.2v1.2h-1.2zM387.52,400.70h1.2v1.2h-1.2zM387.52,403.50h1.2v1.2h-1.2zM387.52,406.30h1.2v1.2h-1.2zM387.52,409.10h1.2v1.2h-1.2zM387.52,411.90h1.2v1.2h-1.2zM387.52,414.70h1.2v1.2h-1.2zM387.52,417.50h1.2v1.2h-1.2zM387.52,420.30h1.2v1.2h-1.2zM387.52,423.10h1.2v1.2h-1.2zM387.52,425.90h1.2v1.2h-1.2zM387.52,428.70h1.2v1.2h-1.2zM387.52,431.50h1.2v1.2h-1.2zM387.52,434.30h1.2v1.2h-1.2zM387.52,437.10h1.2v1.2h-1.2zM387.52,439.90h1.2v1.2h-1.2zM387.52,442.70h1.2v1.2h-1.2zM387.52,445.50h1.2v1.2h-1.2zM387.52,448.30h1.2v1.2h-1.2zM387.52,451.10h1.2v1.2h-1.2zM401.65,344.70h1.2v1.2h-1.2zM401.65,347.50h1.2v1.2h-1.2zM401.65,350.30h1.2v1.2h-1.2zM401.65,353.10h1.2v1.2h-1.2zM401.65,355.90h1.2v1.2h-1.2zM401.65,358.70h1.2v1.2h-1.2zM401.65,361.50h1.2v1.2h-1.2zM401.65,364.30h1.2v1.2h-1.2zM401.65,367.10h1.2v1.2h-1.2zM401.65,369.90h1.2v1.2h-1.2zM401.65,372.70h1.2v1.2h-1.2zM401.65,375.50h1.2v1.2h-1.2zM401.65,378.30h1.2v1.2h-1.2zM401.65,381.10h1.2v1.2h-1.2zM401.65,383.90h1.2v1.2h-1.2zM401.65,386.70h1.2v1.2h-1.2zM401.65,389.50h1.2v1.2h-1.2zM401.65,392.30h1.2v1.2h-1.2zM401.65,395.10h1.2v1.2h-1.2zM401.65,397.90h1.2v1.2h-1.2zM401.65,400.70h1.2v1.2h-1.2zM401.65,403.50h1.2v1.2h-1.2zM401.65,406.30h1.2v1.2h-1.2zM401.65,409.10h1.2v1.2h-1.2zM401.65,411.90h1.2v1.2h-1.2zM401.65,414.70h1.2v1.2h-1.2zM401.65,417.50h1.2v1.2h-1.2zM401.65,420.30h1.2v1.2h-1.2zM401.65,423.10h1.2v1.2h-1.2zM401.65,425.90h1.2v1.2h-1.2zM401.65,428.70h1.2v1.2h-1.2zM401.65,431.50h1.2v1.2h-1.2zM401.65,434.30h1.2v1.2h-1.2zM401.65,437.10h1.2v1.2h-1.2zM401.65,439.90h1.2v1.2h-1.2zM401.65,442.70h1.2v1.2h-1.2zM401.65,445.50h1.2v1.2h-1.2zM401.65,448.30h1.2v1.2h-1.2zM401.65,451.10h1.2v1.2h-1.2zM415.77,344.70h1.2v1.2h-1.2zM415.77,347.50h1.2v1.2h-1.2zM415.77,350.30h1.2v1.2h-1.2zM415.77,353.10h1.2v1.2h-1.2zM415.77,355.90h1.2v1.2h-1.2zM415.77,358.70h1.2v1.2h-1.2zM415.77,361.50h1.2v1.2h-1.2zM415.77,364.30h1.2v1.2h-1.2zM415.77,367.10h1.2v1.2h-1.2zM415.77,369.90h1.2v1.2h-1.2zM415.77,372.70h1.2v1.2h-1.2zM415.77,375.50h1.2v1.2h-1.2zM415.77,378.30h1.2v1.2h-1.2zM415.77,381.10h1.2v1.2h-1.2zM415.77,383.90h1.2v1.2h-1.2zM415.77,386.70h1.2v1.2h-1.2zM415.77,389.50h1.2v1.2h-1.2zM415.77,392.30h1.2v1.2h-1.2zM415.77,395.10h1.2v1.2h-1.2zM415.77,397.90h1.2v1.2h-1.2zM415.77,400.70h1.2v1.2h-1.2zM415.77,403.50h1.2v1.2h-1.2zM415.77,406.30h1.2v1.2h-1.2zM415.77,409.10h1.2v1.2h-1.2zM415.77,411.90h1.2v1.2h-1.2zM415.77,414.70h1.2v1.2h-1.2zM415.77,417.50h1.2v1.2h-1.2zM415.77,420.30h1.2v1.2h-1.2zM415.77,423.10h1.2v1.2h-1.2zM415.77,425.90h1.2v1.2h-1.2zM415.77,428.70h1.2v1.2h-1.2zM415.77,431.50h1.2v1.2h-1.2zM415.77,434.30h1.2v1.2h-1.2zM415.77,437.10h1.2v1.2h-1.2zM415.77,439.90h1.2v1.2h-1.2zM415.77,442.70h1.2v1.2h-1.2zM415.77,445.50h1.2v1.2h-1.2zM415.77,448.30h1.2v1.2h-1.2zM415.77,451.10h1.2v1.2h-1.2zM319.72,355.90h1.2v1.2h-1.2zM322.55,355.90h1.2v1.2h-1.2zM325.38,355.90h1.2v1.2h-1.2zM328.20,355.90h1.2v1.2h-1.2zM331.02,355.90h1.2v1.2h-1.2zM333.85,355.90h1.2v1.2h-1.2zM336.67,355.90h1.2v1.2h-1.2zM339.50,355.90h1.2v1.2h-1.2zM342.32,355.90h1.2v1.2h-1.2zM345.15,355.90h1.2v1.2h-1.2zM347.97,355.90h1.2v1.2h-1.2zM350.80,355.90h1.2v1.2h-1.2zM353.62,355.90h1.2v1.2h-1.2zM356.45,355.90h1.2v1.2h-1.2zM359.27,355.90h1.2v1.2h-1.2zM362.10,355.90h1.2v1.2h-1.2zM364.92,355.90h1.2v1.2h-1.2zM367.75,355.90h1.2v1.2h-1.2zM370.57,355.90h1.2v1.2h-1.2zM373.40,355.90h1.2v1.2h-1.2zM376.22,355.90h1.2v1.2h-1.2zM379.05,355.90h1.2v1.2h-1.2zM381.88,355.90h1.2v1.2h-1.2zM384.70,355.90h1.2v1.2h-1.2zM387.52,355.90h1.2v1.2h-1.2zM390.35,355.90h1.2v1.2h-1.2zM393.17,355.90h1.2v1.2h-1.2zM396.00,355.90h1.2v1.2h-1.2zM398.82,355.90h1.2v1.2h-1.2zM401.65,355.90h1.2v1.2h-1.2zM404.47,355.90h1.2v1.2h-1.2zM407.30,355.90h1.2v1.2h-1.2zM410.12,355.90h1.2v1.2h-1.2zM412.95,355.90h1.2v1.2h-1.2zM415.77,355.90h1.2v1.2h-1.2zM418.60,355.90h1.2v1.2h-1.2zM421.42,355.90h1.2v1.2h-1.2zM424.25,355.90h1.2v1.2h-1.2zM427.07,355.90h1.2v1.2h-1.2zM319.72,369.90h1.2v1.2h-1.2zM322.55,369.90h1.2v1.2h-1.2zM325.38,369.90h1.2v1.2h-1.2zM328.20,369.90h1.2v1.2h-1.2zM331.02,369.90h1.2v1.2h-1.2zM333.85,369.90h1.2v1.2h-1.2zM336.67,369.90h1.2v1.2h-1.2zM339.50,369.90h1.2v1.2h-1.2zM342.32,369.90h1.2v1.2h-1.2zM345.15,369.90h1.2v1.2h-1.2zM347.97,369.90h1.2v1.2h-1.2zM350.80,369.90h1.2v1.2h-1.2zM353.62,369.90h1.2v1.2h-1.2zM356.45,369.90h1.2v1.2h-1.2zM359.27,369.90h1.2v1.2h-1.2zM362.10,369.90h1.2v1.2h-1.2zM364.92,369.90h1.2v1.2h-1.2zM367.75,369.90h1.2v1.2h-1.2zM370.57,369.90h1.2v1.2h-1.2zM373.40,369.90h1.2v1.2h-1.2zM376.22,369.90h1.2v1.2h-1.2zM379.05,369.90h1.2v1.2h-1.2zM381.88,369.90h1.2v1.2h-1.2zM384.70,369.90h1.2v1.2h-1.2zM387.52,369.90h1.2v1.2h-1.2zM390.35,369.90h1.2v1.2h-1.2zM393.17,369.90h1.2v1.2h-1.2zM396.00,369.90h1.2v1.2h-1.2zM398.82,369.90h1.2v1.2h-1.2zM401.65,369.90h1.2v1.2h-1.2zM404.47,369.90h1.2v1.2h-1.2zM407.30,369.90h1.2v1.2h-1.2zM410.12,369.90h1.2v1.2h-1.2zM412.95,369.90h1.2v1.2h-1.2zM415.77,369.90h1.2v1.2h-1.2zM418.60,369.90h1.2v1.2h-1.2zM421.42,369.90h1.2v1.2h-1.2zM424.25,369.90h1.2v1.2h-1.2zM427.07,369.90h1.2v1.2h-1.2zM319.72,383.90h1.2v1.2h-1.2zM322.55,383.90h1.2v1.2h-1.2zM325.38,383.90h1.2v1.2h-1.2zM328.20,383.90h1.2v1.2h-1.2zM331.02,383.90h1.2v1.2h-1.2zM333.85,383.90h1.2v1.2h-1.2zM336.67,383.90h1.2v1.2h-1.2zM339.50,383.90h1.2v1.2h-1.2zM342.32,383.90h1.2v1.2h-1.2zM345.15,383.90h1.2v1.2h-1.2zM347.97,383.90h1.2v1.2h-1.2zM350.80,383.90h1.2v1.2h-1.2zM353.62,383.90h1.2v1.2h-1.2zM356.45,383.90h1.2v1.2h-1.2zM359.27,383.90h1.2v1.2h-1.2zM362.10,383.90h1.2v1.2h-1.2zM364.92,383.90h1.2v1.2h-1.2zM367.75,383.90h1.2v1.2h-1.2zM370.57,383.90h1.2v1.2h-1.2zM373.40,383.90h1.2v1.2h-1.2zM376.22,383.90h1.2v1.2h-1.2zM379.05,383.90h1.2v1.2h-1.2zM381.88,383.90h1.2v1.2h-1.2zM384.70,383.90h1.2v1.2h-1.2zM387.52,383.90h1.2v1.2h-1.2zM390.35,383.90h1.2v1.2h-1.2zM393.17,383.90h1.2v1.2h-1.2zM396.00,383.90h1.2v1.2h-1.2zM398.82,383.90h1.2v1.2h-1.2zM401.65,383.90h1.2v1.2h-1.2zM404.47,383.90h1.2v1.2h-1.2zM407.30,383.90h1.2v1.2h-1.2zM410.12,383.90h1.2v1.2h-1.2zM412.95,383.90h1.2v1.2h-1.2zM415.77,383.90h1.2v1.2h-1.2zM418.60,383.90h1.2v1.2h-1.2zM421.42,383.90h1.2v1.2h-1.2zM424.25,383.90h1.2v1.2h-1.2zM427.07,383.90h1.2v1.2h-1.2zM319.72,397.90h1.2v1.2h-1.2zM322.55,397.90h1.2v1.2h-1.2zM325.38,397.90h1.2v1.2h-1.2zM328.20,397.90h1.2v1.2h-1.2zM331.02,397.90h1.2v1.2h-1.2zM333.85,397.90h1.2v1.2h-1.2zM336.67,397.90h1.2v1.2h-1.2zM339.50,397.90h1.2v1.2h-1.2zM342.32,397.90h1.2v1.2h-1.2zM345.15,397.90h1.2v1.2h-1.2zM347.97,397.90h1.2v1.2h-1.2zM350.80,397.90h1.2v1.2h-1.2zM353.62,397.90h1.2v1.2h-1.2zM356.45,397.90h1.2v1.2h-1.2zM359.27,397.90h1.2v1.2h-1.2zM362.10,397.90h1.2v1.2h-1.2zM364.92,397.90h1.2v1.2h-1.2zM367.75,397.90h1.2v1.2h-1.2zM370.57,397.90h1.2v1.2h-1.2zM373.40,397.90h1.2v1.2h-1.2zM376.22,397.90h1.2v1.2h-1.2zM379.05,397.90h1.2v1.2h-1.2zM381.88,397.90h1.2v1.2h-1.2zM384.70,397.90h1.2v1.2h-1.2zM387.52,397.90h1.2v1.2h-1.2zM390.35,397.90h1.2v1.2h-1.2zM393.17,397.90h1.2v1.2h-1.2zM396.00,397.90h1.2v1.2h-1.2zM398.82,397.90h1.2v1.2h-1.2zM401.65,397.90h1.2v1.2h-1.2zM404.47,397.90h1.2v1.2h-1.2zM407.30,397.90h1.2v1.2h-1.2zM410.12,397.90h1.2v1.2h-1.2zM412.95,397.90h1.2v1.2h-1.2zM415.77,397.90h1.2v1.2h-1.2zM418.60,397.90h1.2v1.2h-1.2zM421.42,397.90h1.2v1.2h-1.2zM424.25,397.90h1.2v1.2h-1.2zM427.07,397.90h1.2v1.2h-1.2zM319.72,411.90h1.2v1.2h-1.2zM322.55,411.90h1.2v1.2h-1.2zM325.38,411.90h1.2v1.2h-1.2zM328.20,411.90h1.2v1.2h-1.2zM331.02,411.90h1.2v1.2h-1.2zM333.85,411.90h1.2v1.2h-1.2zM336.67,411.90h1.2v1.2h-1.2zM339.50,411.90h1.2v1.2h-1.2zM342.32,411.90h1.2v1.2h-1.2zM345.15,411.90h1.2v1.2h-1.2zM347.97,411.90h1.2v1.2h-1.2zM350.80,411.90h1.2v1.2h-1.2zM353.62,411.90h1.2v1.2h-1.2zM356.45,411.90h1.2v1.2h-1.2zM359.27,411.90h1.2v1.2h-1.2zM362.10,411.90h1.2v1.2h-1.2zM364.92,411.90h1.2v1.2h-1.2zM367.75,411.90h1.2v1.2h-1.2zM370.57,411.90h1.2v1.2h-1.2zM373.40,411.90h1.2v1.2h-1.2zM376.22,411.90h1.2v1.2h-1.2zM379.05,411.90h1.2v1.2h-1.2zM381.88,411.90h1.2v1.2h-1.2zM384.70,411.90h1.2v1.2h-1.2zM387.52,411.90h1.2v1.2h-1.2zM390.35,411.90h1.2v1.2h-1.2zM393.17,411.90h1.2v1.2h-1.2zM396.00,411.90h1.2v1.2h-1.2zM398.82,411.90h1.2v1.2h-1.2zM401.65,411.90h1.2v1.2h-1.2zM404.47,411.90h1.2v1.2h-1.2zM407.30,411.90h1.2v1.2h-1.2zM410.12,411.90h1.2v1.2h-1.2zM412.95,411.90h1.2v1.2h-1.2zM415.77,411.90h1.2v1.2h-1.2zM418.60,411.90h1.2v1.2h-1.2zM421.42,411.90h1.2v1.2h-1.2zM424.25,411.90h1.2v1.2h-1.2zM427.07,411.90h1.2v1.2h-1.2zM319.72,425.90h1.2v1.2h-1.2zM322.55,425.90h1.2v1.2h-1.2zM325.38,425.90h1.2v1.2h-1.2zM328.20,425.90h1.2v1.2h-1.2zM331.02,425.90h1.2v1.2h-1.2zM333.85,425.90h1.2v1.2h-1.2zM336.67,425.90h1.2v1.2h-1.2zM339.50,425.90h1.2v1.2h-1.2zM342.32,425.90h1.2v1.2h-1.2zM345.15,425.90h1.2v1.2h-1.2zM347.97,425.90h1.2v1.2h-1.2zM350.80,425.90h1.2v1.2h-1.2zM353.62,425.90h1.2v1.2h-1.2zM356.45,425.90h1.2v1.2h-1.2zM359.27,425.90h1.2v1.2h-1.2zM362.10,425.90h1.2v1.2h-1.2zM364.92,425.90h1.2v1.2h-1.2zM367.75,425.90h1.2v1.2h-1.2zM370.57,425.90h1.2v1.2h-1.2zM373.40,425.90h1.2v1.2h-1.2zM376.22,425.90h1.2v1.2h-1.2zM379.05,425.90h1.2v1.2h-1.2zM381.88,425.90h1.2v1.2h-1.2zM384.70,425.90h1.2v1.2h-1.2zM387.52,425.90h1.2v1.2h-1.2zM390.35,425.90h1.2v1.2h-1.2zM393.17,425.90h1.2v1.2h-1.2zM396.00,425.90h1.2v1.2h-1.2zM398.82,425.90h1.2v1.2h-1.2zM401.65,425.90h1.2v1.2h-1.2zM404.47,425.90h1.2v1.2h-1.2zM407.30,425.90h1.2v1.2h-1.2zM410.12,425.90h1.2v1.2h-1.2zM412.95,425.90h1.2v1.2h-1.2zM415.77,425.90h1.2v1.2h-1.2zM418.60,425.90h1.2v1.2h-1.2zM421.42,425.90h1.2v1.2h-1.2zM424.25,425.90h1.2v1.2h-1.2zM427.07,425.90h1.2v1.2h-1.2zM319.72,439.90h1.2v1.2h-1.2zM322.55,439.90h1.2v1.2h-1.2zM325.38,439.90h1.2v1.2h-1.2zM328.20,439.90h1.2v1.2h-1.2zM331.02,439.90h1.2v1.2h-1.2zM333.85,439.90h1.2v1.2h-1.2zM336.67,439.90h1.2v1.2h-1.2zM339.50,439.90h1.2v1.2h-1.2zM342.32,439.90h1.2v1.2h-1.2zM345.15,439.90h1.2v1.2h-1.2zM347.97,439.90h1.2v1.2h-1.2zM350.80,439.90h1.2v1.2h-1.2zM353.62,439.90h1.2v1.2h-1.2zM356.45,439.90h1.2v1.2h-1.2zM359.27,439.90h1.2v1.2h-1.2zM362.10,439.90h1.2v1.2h-1.2zM364.92,439.90h1.2v1.2h-1.2zM367.75,439.90h1.2v1.2h-1.2zM370.57,439.90h1.2v1.2h-1.2zM373.40,439.90h1.2v1.2h-1.2zM376.22,439.90h1.2v1.2h-1.2zM379.05,439.90h1.2v1.2h-1.2zM381.88,439.90h1.2v1.2h-1.2zM384.70,439.90h1.2v1.2h-1.2zM387.52,439.90h1.2v1.2h-1.2zM390.35,439.90h1.2v1.2h-1.2zM393.17,439.90h1.2v1.2h-1.2zM396.00,439.90h1.2v1.2h-1.2zM398.82,439.90h1.2v1.2h-1.2zM401.65,439.90h1.2v1.2h-1.2zM404.47,439.90h1.2v1.2h-1.2zM407.30,439.90h1.2v1.2h-1.2zM410.12,439.90h1.2v1.2h-1.2zM412.95,439.90h1.2v1.2h-1.2zM415.77,439.90h1.2v1.2h-1.2zM418.60,439.90h1.2v1.2h-1.2zM421.42,439.90h1.2v1.2h-1.2zM424.25,439.90h1.2v1.2h-1.2zM427.07,439.90h1.2v1.2h-1.2zM319.72,342.90h1.2v1.2h-1.2zM319.72,452.90h1.2v1.2h-1.2zM322.55,342.90h1.2v1.2h-1.2zM322.55,452.90h1.2v1.2h-1.2zM325.38,342.90h1.2v1.2h-1.2zM325.38,452.90h1.2v1.2h-1.2zM328.20,342.90h1.2v1.2h-1.2zM328.20,452.90h1.2v1.2h-1.2zM331.02,342.90h1.2v1.2h-1.2zM331.02,452.90h1.2v1.2h-1.2zM333.85,342.90h1.2v1.2h-1.2zM333.85,452.90h1.2v1.2h-1.2zM336.67,342.90h1.2v1.2h-1.2zM336.67,452.90h1.2v1.2h-1.2zM339.50,342.90h1.2v1.2h-1.2zM339.50,452.90h1.2v1.2h-1.2zM342.32,342.90h1.2v1.2h-1.2zM342.32,452.90h1.2v1.2h-1.2zM345.15,342.90h1.2v1.2h-1.2zM345.15,452.90h1.2v1.2h-1.2zM347.97,342.90h1.2v1.2h-1.2zM347.97,452.90h1.2v1.2h-1.2zM350.80,342.90h1.2v1.2h-1.2zM350.80,452.90h1.2v1.2h-1.2zM353.62,342.90h1.2v1.2h-1.2zM353.62,452.90h1.2v1.2h-1.2zM356.45,342.90h1.2v1.2h-1.2zM356.45,452.90h1.2v1.2h-1.2zM359.27,342.90h1.2v1.2h-1.2zM359.27,452.90h1.2v1.2h-1.2zM362.10,342.90h1.2v1.2h-1.2zM362.10,452.90h1.2v1.2h-1.2zM364.92,342.90h1.2v1.2h-1.2zM364.92,452.90h1.2v1.2h-1.2zM367.75,342.90h1.2v1.2h-1.2zM367.75,452.90h1.2v1.2h-1.2zM370.57,342.90h1.2v1.2h-1.2zM370.57,452.90h1.2v1.2h-1.2zM373.40,342.90h1.2v1.2h-1.2zM373.40,452.90h1.2v1.2h-1.2zM376.22,342.90h1.2v1.2h-1.2zM376.22,452.90h1.2v1.2h-1.2zM379.05,342.90h1.2v1.2h-1.2zM379.05,452.90h1.2v1.2h-1.2zM381.88,342.90h1.2v1.2h-1.2zM381.88,452.90h1.2v1.2h-1.2zM384.70,342.90h1.2v1.2h-1.2zM384.70,452.90h1.2v1.2h-1.2zM387.52,342.90h1.2v1.2h-1.2zM387.52,452.90h1.2v1.2h-1.2zM390.35,342.90h1.2v1.2h-1.2zM390.35,452.90h1.2v1.2h-1.2zM393.17,342.90h1.2v1.2h-1.2zM393.17,452.90h1.2v1.2h-1.2zM396.00,342.90h1.2v1.2h-1.2zM396.00,452.90h1.2v1.2h-1.2zM398.82,342.90h1.2v1.2h-1.2zM398.82,452.90h1.2v1.2h-1.2zM401.65,342.90h1.2v1.2h-1.2zM401.65,452.90h1.2v1.2h-1.2zM404.47,342.90h1.2v1.2h-1.2zM404.47,452.90h1.2v1.2h-1.2zM407.30,342.90h1.2v1.2h-1.2zM407.30,452.90h1.2v1.2h-1.2zM410.12,342.90h1.2v1.2h-1.2zM410.12,452.90h1.2v1.2h-1.2zM412.95,342.90h1.2v1.2h-1.2zM412.95,452.90h1.2v1.2h-1.2zM415.77,342.90h1.2v1.2h-1.2zM415.77,452.90h1.2v1.2h-1.2zM418.60,342.90h1.2v1.2h-1.2zM418.60,452.90h1.2v1.2h-1.2zM421.42,342.90h1.2v1.2h-1.2zM421.42,452.90h1.2v1.2h-1.2zM424.25,342.90h1.2v1.2h-1.2zM424.25,452.90h1.2v1.2h-1.2zM427.07,342.90h1.2v1.2h-1.2zM427.07,452.90h1.2v1.2h-1.2zM317.90,344.70h1.2v1.2h-1.2zM428.90,344.70h1.2v1.2h-1.2zM317.90,347.50h1.2v1.2h-1.2zM428.90,347.50h1.2v1.2h-1.2zM317.90,350.30h1.2v1.2h-1.2zM428.90,350.30h1.2v1.2h-1.2zM317.90,353.10h1.2v1.2h-1.2zM428.90,353.10h1.2v1.2h-1.2zM317.90,355.90h1.2v1.2h-1.2zM428.90,355.90h1.2v1.2h-1.2zM317.90,358.70h1.2v1.2h-1.2zM428.90,358.70h1.2v1.2h-1.2zM317.90,361.50h1.2v1.2h-1.2zM428.90,361.50h1.2v1.2h-1.2zM317.90,364.30h1.2v1.2h-1.2zM428.90,364.30h1.2v1.2h-1.2zM317.90,367.10h1.2v1.2h-1.2zM428.90,367.10h1.2v1.2h-1.2zM317.90,369.90h1.2v1.2h-1.2zM428.90,369.90h1.2v1.2h-1.2zM317.90,372.70h1.2v1.2h-1.2zM428.90,372.70h1.2v1.2h-1.2zM317.90,375.50h1.2v1.2h-1.2zM428.90,375.50h1.2v1.2h-1.2zM317.90,378.30h1.2v1.2h-1.2zM428.90,378.30h1.2v1.2h-1.2zM317.90,381.10h1.2v1.2h-1.2zM428.90,381.10h1.2v1.2h-1.2zM317.90,383.90h1.2v1.2h-1.2zM428.90,383.90h1.2v1.2h-1.2zM317.90,386.70h1.2v1.2h-1.2zM428.90,386.70h1.2v1.2h-1.2zM317.90,389.50h1.2v1.2h-1.2zM428.90,389.50h1.2v1.2h-1.2zM317.90,392.30h1.2v1.2h-1.2zM428.90,392.30h1.2v1.2h-1.2zM317.90,395.10h1.2v1.2h-1.2zM428.90,395.10h1.2v1.2h-1.2zM317.90,397.90h1.2v1.2h-1.2zM428.90,397.90h1.2v1.2h-1.2zM317.90,400.70h1.2v1.2h-1.2zM428.90,400.70h1.2v1.2h-1.2zM317.90,403.50h1.2v1.2h-1.2zM428.90,403.50h1.2v1.2h-1.2zM317.90,406.30h1.2v1.2h-1.2zM428.90,406.30h1.2v1.2h-1.2zM317.90,409.10h1.2v1.2h-1.2zM428.90,409.10h1.2v1.2h-1.2zM317.90,411.90h1.2v1.2h-1.2zM428.90,411.90h1.2v1.2h-1.2zM317.90,414.70h1.2v1.2h-1.2zM428.90,414.70h1.2v1.2h-1.2zM317.90,417.50h1.2v1.2h-1.2zM428.90,417.50h1.2v1.2h-1.2zM317.90,420.30h1.2v1.2h-1.2zM428.90,420.30h1.2v1.2h-1.2zM317.90,423.10h1.2v1.2h-1.2zM428.90,423.10h1.2v1.2h-1.2zM317.90,425.90h1.2v1.2h-1.2zM428.90,425.90h1.2v1.2h-1.2zM317.90,428.70h1.2v1.2h-1.2zM428.90,428.70h1.2v1.2h-1.2zM317.90,431.50h1.2v1.2h-1.2zM428.90,431.50h1.2v1.2h-1.2zM317.90,434.30h1.2v1.2h-1.2zM428.90,434.30h1.2v1.2h-1.2zM317.90,437.10h1.2v1.2h-1.2zM428.90,437.10h1.2v1.2h-1.2zM317.90,439.90h1.2v1.2h-1.2zM428.90,439.90h1.2v1.2h-1.2zM317.90,442.70h1.2v1.2h-1.2zM428.90,442.70h1.2v1.2h-1.2zM317.90,445.50h1.2v1.2h-1.2zM428.90,445.50h1.2v1.2h-1.2zM317.90,448.30h1.2v1.2h-1.2zM428.90,448.30h1.2v1.2h-1.2zM317.90,451.10h1.2v1.2h-1.2zM428.90,451.10h1.2v1.2h-1.2z" fill="#197a55"/>
<circle cx="374.3" cy="398.5" r="27.2" fill="none" stroke="#e29ede" stroke-width="1.3"/>
</svg>
<div class="t" style="left:37px;top:334px;font-size:6.8px;color:#d0c41e;-webkit-text-stroke:0.15px #d0c41e">CH1: 1.00V/div</div>
<div class="t" style="left:93px;top:334px;font-size:6.8px;color:#20b8c6;-webkit-text-stroke:0.15px #20b8c6">CH2: 1.00V/div</div>
<div class="t" style="left:654.5px;top:333.6px;font-size:7.1px;color:#e6821e;-webkit-text-stroke:0.15px #e6821e">Time: 2.00ms/div</div>
<div class="t" style="left:368px;top:334.5px;font-size:6px;color:#d6c81c">CH1</div>
<div class="t" style="left:304px;top:394.5px;font-size:6px;color:#22c0cc">CH2</div>
<div class="t" style="left:360.5px;top:456.3px;font-size:7.6px;color:#d89cc8">X-Y Plot</div>
<div class="a" style="left:748px;top:0;width:1px;height:501px;background:#c4c4c4"></div>
<div class="a" style="left:66px;top:508px;width:312px;height:230px;border:1px solid #d0d0d0"></div>
<div class="a" style="left:377px;top:508px;width:312px;height:230px;border:1px solid #d0d0d0"></div>
<svg class="a" style="left:0;top:0" width="750" height="718">
<defs><radialGradient id="kg" cx="0.35" cy="0.35" r="0.8"><stop offset="0" stop-color="#8a8a8a"/><stop offset="1" stop-color="#474747"/></radialGradient><linearGradient id="hg" x1="0" y1="0" x2="0" y2="1"><stop offset="0" stop-color="#cacaca"/><stop offset="1" stop-color="#bebebe"/></linearGradient><linearGradient id="sg" x1="0" y1="0" x2="1" y2="0"><stop offset="0" stop-color="#d4d4d4"/><stop offset="0.35" stop-color="#b4b4b4"/><stop offset="1" stop-color="#a6a6a6"/></linearGradient><linearGradient id="bz" x1="0" y1="0" x2="0" y2="1"><stop offset="0" stop-color="#1c1c1c"/><stop offset="1" stop-color="#0c0c0c"/></linearGradient><clipPath id="scr"><rect x="106.5" y="629" width="84.5" height="62"/></clipPath></defs>
<path d="M165.5,608 L165.5,576.5 Q165.8,574.8 168,574.3 Q200,567.5 240,567 L276,568 Q277.6,568.2 277.6,570 L275.2,603.5 L255,603.5 L255,584.5 Q254.5,582 251,582 L191,584.6 Q181,585 180,592 L179.5,608 Z" fill="url(#hg)"/>
<path d="M272.7,568 L276,568 Q277.6,568.2 277.6,570 L275.2,603.5 L270.2,603.5 Z" fill="#8e8e8e"/>
<path d="M179.5,608 L180,592 Q181,585 191,584.6 L187,584.8 Q186,589 186,596 L186,608z" fill="#7e7e7e"/>
<path d="M224,605 L326.4,603 L326.4,718 L224,718z" fill="#e2e2e2"/>
<path d="M326.4,603 L334,605.5 L334,718 L326.4,718z" fill="#c8c8c8"/>
<path d="M334,605.5 L342.7,614 L342.7,626.5 L352.5,634 L351,718 L334,718z" fill="#9a9a9a"/>
<path d="M334,605.5 L342.7,614 L342.7,626.5 L334,625z" fill="#a6a6a6"/>
<rect x="230.5" y="608.5" width="91.3" height="94" rx="2" fill="#cfcfd3"/>
<rect x="245.5" y="609.5" width="26" height="40" fill="#b9b9be"/>
<rect x="289.5" y="609.5" width="15" height="39" fill="#b9b9be"/>
<rect x="232" y="650" width="89" height="1.6" fill="#8a8a90"/>
<rect x="224" y="706.5" width="102.4" height="12" fill="#cbcbcb"/>
<rect x="336.4" y="652.4" width="1.8" height="1.3" rx="0.5" fill="#2a2a2a"/><rect x="340.6" y="652.4" width="1.8" height="1.3" rx="0.5" fill="#2a2a2a"/><rect x="336.2" y="655.9" width="1.8" height="1.3" rx="0.5" fill="#2a2a2a"/><rect x="340.4" y="655.9" width="1.8" height="1.3" rx="0.5" fill="#2a2a2a"/><rect x="344.6" y="655.9" width="1.8" height="1.3" rx="0.5" fill="#2a2a2a"/><rect x="334.6" y="659.4" width="1.8" height="1.3" rx="0.5" fill="#2a2a2a"/><rect x="338.8" y="659.4" width="1.8" height="1.3" rx="0.5" fill="#2a2a2a"/><rect x="343.0" y="659.4" width="1.8" height="1.3" rx="0.5" fill="#2a2a2a"/><rect x="336.2" y="662.9" width="1.8" height="1.3" rx="0.5" fill="#2a2a2a"/><rect x="340.4" y="662.9" width="1.8" height="1.3" rx="0.5" fill="#2a2a2a"/><rect x="344.6" y="662.9" width="1.8" height="1.3" rx="0.5" fill="#2a2a2a"/><rect x="334.6" y="666.4" width="1.8" height="1.3" rx="0.5" fill="#2a2a2a"/><rect x="338.8" y="666.4" width="1.8" height="1.3" rx="0.5" fill="#2a2a2a"/><rect x="343.0" y="666.4" width="1.8" height="1.3" rx="0.5" fill="#2a2a2a"/><rect x="336.2" y="669.9" width="1.8" height="1.3" rx="0.5" fill="#2a2a2a"/><rect x="340.4" y="669.9" width="1.8" height="1.3" rx="0.5" fill="#2a2a2a"/><rect x="344.6" y="669.9" width="1.8" height="1.3" rx="0.5" fill="#2a2a2a"/><rect x="334.6" y="673.4" width="1.8" height="1.3" rx="0.5" fill="#2a2a2a"/><rect x="338.8" y="673.4" width="1.8" height="1.3" rx="0.5" fill="#2a2a2a"/><rect x="343.0" y="673.4" width="1.8" height="1.3" rx="0.5" fill="#2a2a2a"/><rect x="336.2" y="676.9" width="1.8" height="1.3" rx="0.5" fill="#2a2a2a"/><rect x="340.4" y="676.9" width="1.8" height="1.3" rx="0.5" fill="#2a2a2a"/><rect x="344.6" y="676.9" width="1.8" height="1.3" rx="0.5" fill="#2a2a2a"/><rect x="334.6" y="680.4" width="1.8" height="1.3" rx="0.5" fill="#2a2a2a"/><rect x="338.8" y="680.4" width="1.8" height="1.3" rx="0.5" fill="#2a2a2a"/><rect x="343.0" y="680.4" width="1.8" height="1.3" rx="0.5" fill="#2a2a2a"/><rect x="336.2" y="683.9" width="1.8" height="1.3" rx="0.5" fill="#2a2a2a"/><rect x="340.4" y="683.9" width="1.8" height="1.3" rx="0.5" fill="#2a2a2a"/><rect x="344.6" y="683.9" width="1.8" height="1.3" rx="0.5" fill="#2a2a2a"/><rect x="334.6" y="687.4" width="1.8" height="1.3" rx="0.5" fill="#2a2a2a"/><rect x="338.8" y="687.4" width="1.8" height="1.3" rx="0.5" fill="#2a2a2a"/><rect x="343.0" y="687.4" width="1.8" height="1.3" rx="0.5" fill="#2a2a2a"/><rect x="338.0" y="690.9" width="1.8" height="1.3" rx="0.5" fill="#2a2a2a"/><rect x="342.2" y="690.9" width="1.8" height="1.3" rx="0.5" fill="#2a2a2a"/>
<rect x="246.7" y="615.4" width="9.30" height="7.00" rx="2" fill="#5f5f63" stroke="#3a3a3e" stroke-width="0.6"/>
<rect x="259.8" y="615.4" width="9.80" height="7.00" rx="2" fill="#5f5f63" stroke="#3a3a3e" stroke-width="0.6"/>
<rect x="232.7" y="628.5" width="9.30" height="7.50" rx="2" fill="#5f5f63" stroke="#3a3a3e" stroke-width="0.6"/>
<rect x="246.7" y="628.5" width="9.30" height="7.50" rx="2" fill="#5f5f63" stroke="#3a3a3e" stroke-width="0.6"/>
<rect x="259.8" y="628.5" width="9.80" height="7.50" rx="2" fill="#5f5f63" stroke="#3a3a3e" stroke-width="0.6"/>
<rect x="291" y="628.5" width="10.80" height="7.50" rx="2" fill="#5f5f63" stroke="#3a3a3e" stroke-width="0.6"/>
<rect x="232.7" y="640" width="9.30" height="7.60" rx="2" fill="#5f5f63" stroke="#3a3a3e" stroke-width="0.6"/>
<rect x="246.7" y="640" width="9.30" height="7.60" rx="2" fill="#5f5f63" stroke="#3a3a3e" stroke-width="0.6"/>
<rect x="259.8" y="640" width="9.80" height="7.60" rx="2" fill="#5f5f63" stroke="#3a3a3e" stroke-width="0.6"/>
<rect x="291" y="640" width="10.80" height="7.60" rx="2" fill="#5f5f63" stroke="#3a3a3e" stroke-width="0.6"/>
<rect x="307.2" y="616.2" width="10.20" height="7.20" rx="2" fill="#a9c4d4" stroke="#3a3a3e" stroke-width="0.6"/>
<rect x="307.2" y="627.4" width="10.20" height="7.20" rx="2" fill="#a9c4d4" stroke="#3a3a3e" stroke-width="0.6"/>
<rect x="307.2" y="638.7" width="10.20" height="7.30" rx="2" fill="#a9c4d4" stroke="#3a3a3e" stroke-width="0.6"/>
<rect x="234.2" y="663" width="8.4" height="22" fill="#a9a9af"/>
<rect x="255.5" y="663" width="8.4" height="22" fill="#a9a9af"/>
<rect x="277.6" y="663" width="8.4" height="22" fill="#a9a9af"/>
<rect x="300.6" y="663" width="8.4" height="22" fill="#a9a9af"/>
<rect x="235.5" y="667.8" width="5.90" height="8.80" rx="2" fill="#a9c4d4" stroke="#3a3a3e" stroke-width="0.6"/>
<rect x="256.9" y="667.8" width="5.70" height="8.80" rx="2" fill="#a9c4d4" stroke="#3a3a3e" stroke-width="0.6"/>
<rect x="278.9" y="667.8" width="5.80" height="8.80" rx="2" fill="#a9c4d4" stroke="#3a3a3e" stroke-width="0.6"/>
<rect x="301.9" y="667.8" width="5.80" height="8.80" rx="2" fill="#a9c4d4" stroke="#3a3a3e" stroke-width="0.6"/>
<rect x="245.2" y="668.5" width="7.90" height="7.50" rx="2" fill="#a9c4d4" stroke="#3a3a3e" stroke-width="0.6"/>
<circle cx="236.1" cy="620.4" r="6.5" fill="#4a4a4a"/><circle cx="235.5" cy="619.6" r="6.5" fill="url(#kg)"/><circle cx="232.77" cy="618.82" r="3.2" fill="#f2f2f2"/>
<circle cx="279.6" cy="619.0" r="6.5" fill="#4a4a4a"/><circle cx="279" cy="618.2" r="6.5" fill="url(#kg)"/><circle cx="276.27" cy="617.4200000000001" r="3.2" fill="#f2f2f2"/>
<circle cx="295.20000000000005" cy="618.8" r="6.5" fill="#4a4a4a"/><circle cx="294.6" cy="618" r="6.5" fill="url(#kg)"/><circle cx="291.87" cy="617.22" r="3.2" fill="#f2f2f2"/>
<circle cx="279.1" cy="638.5999999999999" r="6.5" fill="#4a4a4a"/><circle cx="278.5" cy="637.8" r="6.5" fill="url(#kg)"/><circle cx="275.77" cy="637.02" r="3.2" fill="#f2f2f2"/>
<circle cx="238.7" cy="660.5" r="6.5" fill="#4a4a4a"/><circle cx="238.1" cy="659.7" r="6.5" fill="url(#kg)"/><circle cx="235.37" cy="658.9200000000001" r="3.2" fill="#f2f2f2"/>
<circle cx="260.0" cy="660.5" r="6.5" fill="#4a4a4a"/><circle cx="259.4" cy="659.7" r="6.5" fill="url(#kg)"/><circle cx="256.66999999999996" cy="658.9200000000001" r="3.2" fill="#f2f2f2"/>
<circle cx="281.3" cy="660.5" r="6.5" fill="#4a4a4a"/><circle cx="280.7" cy="659.7" r="6.5" fill="url(#kg)"/><circle cx="277.96999999999997" cy="658.9200000000001" r="3.2" fill="#f2f2f2"/>
<circle cx="304.70000000000005" cy="660.5" r="6.5" fill="#4a4a4a"/><circle cx="304.1" cy="659.7" r="6.5" fill="url(#kg)"/><circle cx="301.37" cy="658.9200000000001" r="3.2" fill="#f2f2f2"/>
<circle cx="236.5" cy="690.3" r="8.8" fill="#4a4a4a"/><circle cx="235.9" cy="689.5" r="8.8" fill="url(#kg)"/><circle cx="232.204" cy="688.444" r="4.8" fill="#f2f2f2"/>
<circle cx="257.8" cy="690.8" r="8.8" fill="#4a4a4a"/><circle cx="257.2" cy="690" r="8.8" fill="url(#kg)"/><circle cx="253.504" cy="688.944" r="4.8" fill="#f2f2f2"/>
<circle cx="279.8" cy="691.4" r="8.8" fill="#4a4a4a"/><circle cx="279.2" cy="690.6" r="8.8" fill="url(#kg)"/><circle cx="275.50399999999996" cy="689.544" r="4.8" fill="#f2f2f2"/>
<circle cx="302.5" cy="691.4" r="8.8" fill="#4a4a4a"/><circle cx="301.9" cy="690.6" r="8.8" fill="url(#kg)"/><circle cx="298.20399999999995" cy="689.544" r="4.8" fill="#f2f2f2"/>
<path d="M92,718 L98.5,616 Q99,611 104,610.8 L221,608.3 Q225.5,608.3 225.5,612.5 L221.7,699 L209.4,718z" fill="url(#bz)"/>
<path d="M225.5,640 L221.7,699 L209.4,718 L226,718z" fill="#d4d4d4"/>
<circle cx="220.6" cy="716.5" r="5.3" fill="#8a8a8a"/><circle cx="220.6" cy="715.8" r="4.4" fill="#c4c4c4"/><circle cx="220.6" cy="716.5" r="2.8" fill="#5a5a5a"/><circle cx="220.6" cy="716.8" r="1.3" fill="#d8a848"/>
<circle cx="238.1" cy="716.5" r="5.3" fill="#8a8a8a"/><circle cx="238.1" cy="715.8" r="4.4" fill="#c4c4c4"/><circle cx="238.1" cy="716.5" r="2.8" fill="#5a5a5a"/><circle cx="238.1" cy="716.8" r="1.3" fill="#d8a848"/>
<circle cx="254.9" cy="716.5" r="5.3" fill="#8a8a8a"/><circle cx="254.9" cy="715.8" r="4.4" fill="#c4c4c4"/><circle cx="254.9" cy="716.5" r="2.8" fill="#5a5a5a"/><circle cx="254.9" cy="716.8" r="1.3" fill="#d8a848"/>
<circle cx="271.7" cy="716.5" r="5.3" fill="#8a8a8a"/><circle cx="271.7" cy="715.8" r="4.4" fill="#c4c4c4"/><circle cx="271.7" cy="716.5" r="2.8" fill="#5a5a5a"/><circle cx="271.7" cy="716.8" r="1.3" fill="#d8a848"/>
<circle cx="289.2" cy="716.5" r="5.3" fill="#8a8a8a"/><circle cx="289.2" cy="715.8" r="4.4" fill="#c4c4c4"/><circle cx="289.2" cy="716.5" r="2.8" fill="#5a5a5a"/><circle cx="289.2" cy="716.8" r="1.3" fill="#d8a848"/>
<circle cx="307.4" cy="716.5" r="5.3" fill="#8a8a8a"/><circle cx="307.4" cy="715.8" r="4.4" fill="#c4c4c4"/><circle cx="307.4" cy="716.5" r="2.8" fill="#5a5a5a"/><circle cx="307.4" cy="716.8" r="1.3" fill="#d8a848"/>
<rect x="111" y="613.6" width="15" height="4.8" fill="#3a5fb6" stroke="#8a9ac8" stroke-width="0.5"/>
<rect x="113" y="615.4" width="11" height="1.2" fill="#c8d4f0"/>
<rect x="132.7" y="614.6" width="14.6" height="2.6" fill="#6a6a6a" opacity="0.8"/>
<rect x="156.7" y="614" width="13.5" height="0.9" fill="#777"/><rect x="156.7" y="616.4" width="18" height="0.9" fill="#666"/>
<rect x="184" y="614" width="8.0" height="0.9" fill="#777"/><rect x="184" y="616.4" width="10.7" height="0.9" fill="#666"/>
<path d="M101.6,621.3 L105.7,622.5 L102.4,700.5 L95.8,700.5z" fill="#4a4a4a"/>
<rect x="102" y="617.7" width="109.4" height="4.5" fill="#262626"/>
<path d="M102,700.8 H206 L205,702.9 H101.5z" fill="#3c3c3c"/>
<path d="M105.7,622.5 H209 V700.5 H102.4z" fill="#050505"/>
<rect x="106.5" y="624.5" width="84.5" height="4" fill="#161616"/>
<rect x="107" y="625.3" width="11.5" height="2.4" fill="#1e6ee0"/><rect x="120.5" y="625.3" width="4.5" height="2.4" fill="#b01818"/><rect x="126" y="625.3" width="20" height="2" fill="#555"/><rect x="148" y="625.3" width="18" height="2" fill="#8a8a20"/>
<rect x="191.3" y="622.9" width="17.7" height="76" fill="#151515"/>
<rect x="191.8" y="623" width="17" height="10.8" fill="#3a3a3a"/><rect x="197.5" y="627.8" width="6" height="1.4" fill="#9a9a9a"/>
<rect x="192" y="635.0" width="16.6" height="5" fill="#1a1d24"/><rect x="195.3" y="637.0" width="10" height="1.2" fill="#9a9aa0"/>
<rect x="192.3" y="640.7" width="16" height="4.4" fill="#222630" stroke="#3c404a" stroke-width="0.5"/><rect x="198.3" y="642.3" width="4" height="1.2" fill="#b0b0b8"/>
<rect x="192" y="645.6" width="16.6" height="5" fill="#1a1d24"/><rect x="195.3" y="647.6" width="10" height="1.2" fill="#9a9aa0"/>
<rect x="192.3" y="651.3" width="16" height="4.4" fill="#222630" stroke="#3c404a" stroke-width="0.5"/><rect x="197.8" y="652.9" width="5" height="1.2" fill="#b0b0b8"/>
<rect x="192" y="656.3" width="16.6" height="5" fill="#1a1d24"/><rect x="197.8" y="658.3" width="5" height="1.2" fill="#9a9aa0"/>
<rect x="192.3" y="662.6" width="16" height="4.4" fill="#222630" stroke="#3c404a" stroke-width="0.5"/><rect x="195.8" y="664.2" width="9" height="1.2" fill="#b0b0b8"/>
<rect x="192" y="666.9" width="16.6" height="5" fill="#1a1d24"/><rect x="196.8" y="668.9" width="7" height="1.2" fill="#9a9aa0"/>
<rect x="192.3" y="673.3" width="16" height="4.4" fill="#222630" stroke="#3c404a" stroke-width="0.5"/><rect x="198.3" y="674.9" width="4" height="1.2" fill="#b0b0b8"/>
<rect x="192" y="677.6" width="16.6" height="5" fill="#1a1d24"/><rect x="196.3" y="679.6" width="8" height="1.2" fill="#9a9aa0"/>
<rect x="192.3" y="684.0" width="16" height="4.4" fill="#222630" stroke="#3c404a" stroke-width="0.5"/><rect x="197.8" y="685.6" width="5" height="1.2" fill="#b0b0b8"/>
<rect x="192" y="690.2" width="16.6" height="7.5" fill="#2a2a2a"/><rect x="198" y="693.4" width="4.5" height="1.2" fill="#888"/>
<rect x="213.7" y="620.5" width="7.2" height="7.5" rx="1.2" fill="#585858" stroke="#9a9a9a" stroke-width="0.8"/><rect x="216.3" y="623.3" width="2" height="1.8" fill="#d8d8d8" opacity="0.6"/>
<rect x="213.2" y="632.4" width="7.2" height="7.5" rx="1.2" fill="#585858" stroke="#9a9a9a" stroke-width="0.8"/><rect x="215.8" y="635.2" width="2" height="1.8" fill="#d8d8d8" opacity="0.6"/>
<rect x="212.7" y="644.3" width="7.2" height="7.5" rx="1.2" fill="#585858" stroke="#9a9a9a" stroke-width="0.8"/><rect x="215.3" y="647.1" width="2" height="1.8" fill="#d8d8d8" opacity="0.6"/>
<rect x="212.2" y="656.2" width="7.2" height="7.5" rx="1.2" fill="#585858" stroke="#9a9a9a" stroke-width="0.8"/><rect x="214.8" y="659.0" width="2" height="1.8" fill="#d8d8d8" opacity="0.6"/>
<rect x="211.7" y="668.1" width="7.2" height="7.5" rx="1.2" fill="#585858" stroke="#9a9a9a" stroke-width="0.8"/><rect x="214.3" y="670.9" width="2" height="1.8" fill="#d8d8d8" opacity="0.6"/>
<rect x="211.2" y="680.0" width="7.2" height="7.5" rx="1.2" fill="#585858" stroke="#9a9a9a" stroke-width="0.8"/><rect x="213.8" y="682.8" width="2" height="1.8" fill="#d8d8d8" opacity="0.6"/>
<rect x="210.7" y="691.9" width="7.2" height="7.5" rx="1.2" fill="#585858" stroke="#9a9a9a" stroke-width="0.8"/><rect x="213.3" y="694.7" width="2" height="1.8" fill="#d8d8d8" opacity="0.6"/>
<path d="M118.6,629 V691 M130.6,629 V691 M142.7,629 V691 M154.8,629 V691 M166.9,629 V691 M178.9,629 V691 M106.5,639.3 H191 M106.5,649.7 H191 M106.5,660.0 H191 M106.5,670.3 H191 M106.5,680.7 H191" stroke="#2a2a2a" stroke-width="0.5" fill="none"/>
<g clip-path="url(#scr)" fill="none">
<path d="M106.50,636.24 L107.00,634.70 L107.50,633.26 L108.00,632.03 L108.50,631.09 L109.00,630.50 L109.50,630.30 L110.00,630.50 L110.50,631.09 L111.00,632.03 L111.50,633.26 L112.00,634.70 L112.50,636.24 L113.00,637.80 L113.50,639.27 L114.00,640.54 L114.50,641.55 L115.00,642.21 L115.50,642.49 L116.00,642.37 L116.50,641.86 L117.00,640.98 L117.50,639.81 L118.00,638.40 L118.50,636.87 L119.00,635.31 L119.50,633.81 L120.00,632.49 L120.50,631.43 L121.00,630.69 L121.50,630.33 L122.00,630.37 L122.50,630.81 L123.00,631.62 L123.50,632.74 L124.00,634.10 L124.50,635.62 L125.00,637.18 L125.50,638.70 L126.00,640.06 L126.50,641.18 L127.00,641.99 L127.50,642.43 L128.00,642.47 L128.50,642.11 L129.00,641.37 L129.50,640.31 L130.00,638.99 L130.50,637.49 L131.00,635.93 L131.50,634.40 L132.00,632.99 L132.50,631.82 L133.00,630.94 L133.50,630.43 L134.00,630.31 L134.50,630.59 L135.00,631.25 L135.50,632.26 L136.00,633.53 L136.50,635.00 L137.00,636.56 L137.50,638.10 L138.00,639.54 L138.50,640.77 L139.00,641.71 L139.50,642.30 L140.00,642.50 L140.50,642.30 L141.00,641.71 L141.50,640.77 L142.00,639.54 L142.50,638.10 L143.00,636.56 L143.50,635.00 L144.00,633.53 L144.50,632.26 L145.00,631.25 L145.50,630.59 L146.00,630.31 L146.50,630.43 L147.00,630.94 L147.50,631.82 L148.00,632.99 L148.50,634.40 L149.00,635.93 L149.50,637.49 L150.00,638.99 L150.50,640.31 L151.00,641.37 L151.50,642.11 L152.00,642.47 L152.50,642.43 L153.00,641.99 L153.50,641.18 L154.00,640.06 L154.50,638.70 L155.00,637.18 L155.50,635.62 L156.00,634.10 L156.50,632.74 L157.00,631.62 L157.50,630.81 L158.00,630.37 L158.50,630.33 L159.00,630.69 L159.50,631.43 L160.00,632.49 L160.50,633.81 L161.00,635.31 L161.50,636.87 L162.00,638.40 L162.50,639.81 L163.00,640.98 L163.50,641.86 L164.00,642.37 L164.50,642.49 L165.00,642.21 L165.50,641.55 L166.00,640.54 L166.50,639.27 L167.00,637.80 L167.50,636.24 L168.00,634.70 L168.50,633.26 L169.00,632.03 L169.50,631.09 L170.00,630.50 L170.50,630.30 L171.00,630.50 L171.50,631.09 L172.00,632.03 L172.50,633.26 L173.00,634.70 L173.50,636.24 L174.00,637.80 L174.50,639.27 L175.00,640.54 L175.50,641.55 L176.00,642.21 L176.50,642.49 L177.00,642.37 L177.50,641.86 L178.00,640.98 L178.50,639.81 L179.00,638.40 L179.50,636.87 L180.00,635.31 L180.50,633.81 L181.00,632.49 L181.50,631.43 L182.00,630.69 L182.50,630.33 L183.00,630.37 L183.50,630.81 L184.00,631.62 L184.50,632.74 L185.00,634.10 L185.50,635.62 L186.00,637.18 L186.50,638.70 L187.00,640.06 L187.50,641.18 L188.00,641.99 L188.50,642.43 L189.00,642.47 L189.50,642.11 L190.00,641.37 L190.50,640.31 L191.00,638.99" stroke="#dcd420" stroke-width="1.05"/>
<path d="M106.5,659.5 H94.50 V645.3 H100.30 V659.5 H106.70 V645.3 H112.50 V659.5 H118.90 V645.3 H124.70 V659.5 H131.10 V645.3 H136.90 V659.5 H143.30 V645.3 H149.10 V659.5 H155.50 V645.3 H161.30 V659.5 H167.70 V645.3 H173.50 V659.5 H179.90 V645.3 H185.70 V659.5 H192.10 V645.3 H197.90 V659.5" stroke="#1cc0cc" stroke-width="1.05"/>
<path d="M106.50,666.49 L107.00,667.60 L107.50,668.88 L108.00,670.26 L108.50,671.65 L109.00,672.95 L109.50,674.11 L110.00,675.03 L110.50,675.66 L111.00,675.97 L111.50,675.94 L112.00,675.56 L112.50,674.86 L113.00,673.89 L113.50,672.70 L114.00,671.37 L114.50,669.98 L115.00,668.62 L115.50,667.36 L116.00,666.29 L116.50,665.48 L117.00,664.97 L117.50,664.80 L118.00,664.97 L118.50,665.48 L119.00,666.29 L119.50,667.36 L120.00,668.62 L120.50,669.98 L121.00,671.37 L121.50,672.70 L122.00,673.89 L122.50,674.86 L123.00,675.56 L123.50,675.94 L124.00,675.97 L124.50,675.66 L125.00,675.03 L125.50,674.11 L126.00,672.95 L126.50,671.65 L127.00,670.26 L127.50,668.88 L128.00,667.60 L128.50,666.49 L129.00,665.62 L129.50,665.05 L130.00,664.81 L130.50,664.91 L131.00,665.35 L131.50,666.11 L132.00,667.13 L132.50,668.35 L133.00,669.70 L133.50,671.10 L134.00,672.45 L134.50,673.67 L135.00,674.69 L135.50,675.45 L136.00,675.89 L136.50,675.99 L137.00,675.75 L137.50,675.18 L138.00,674.31 L138.50,673.20 L139.00,671.92 L139.50,670.54 L140.00,669.15 L140.50,667.85 L141.00,666.69 L141.50,665.77 L142.00,665.14 L142.50,664.83 L143.00,664.86 L143.50,665.24 L144.00,665.94 L144.50,666.91 L145.00,668.10 L145.50,669.43 L146.00,670.82 L146.50,672.18 L147.00,673.44 L147.50,674.51 L148.00,675.32 L148.50,675.83 L149.00,676.00 L149.50,675.83 L150.00,675.32 L150.50,674.51 L151.00,673.44 L151.50,672.18 L152.00,670.82 L152.50,669.43 L153.00,668.10 L153.50,666.91 L154.00,665.94 L154.50,665.24 L155.00,664.86 L155.50,664.83 L156.00,665.14 L156.50,665.77 L157.00,666.69 L157.50,667.85 L158.00,669.15 L158.50,670.54 L159.00,671.92 L159.50,673.20 L160.00,674.31 L160.50,675.18 L161.00,675.75 L161.50,675.99 L162.00,675.89 L162.50,675.45 L163.00,674.69 L163.50,673.67 L164.00,672.45 L164.50,671.10 L165.00,669.70 L165.50,668.35 L166.00,667.13 L166.50,666.11 L167.00,665.35 L167.50,664.91 L168.00,664.81 L168.50,665.05 L169.00,665.62 L169.50,666.49 L170.00,667.60 L170.50,668.88 L171.00,670.26 L171.50,671.65 L172.00,672.95 L172.50,674.11 L173.00,675.03 L173.50,675.66 L174.00,675.97 L174.50,675.94 L175.00,675.56 L175.50,674.86 L176.00,673.89 L176.50,672.70 L177.00,671.37 L177.50,669.98 L178.00,668.62 L178.50,667.36 L179.00,666.29 L179.50,665.48 L180.00,664.97 L180.50,664.80 L181.00,664.97 L181.50,665.48 L182.00,666.29 L182.50,667.36 L183.00,668.62 L183.50,669.98 L184.00,671.37 L184.50,672.70 L185.00,673.89 L185.50,674.86 L186.00,675.56 L186.50,675.94 L187.00,675.97 L187.50,675.66 L188.00,675.03 L188.50,674.11 L189.00,672.95 L189.50,671.65 L190.00,670.26 L190.50,668.88 L191.00,667.60" stroke="#dc1c1c" stroke-width="1.05"/>
<path d="M106.5,685.8 H191" stroke="#20d020" stroke-width="1.2"/>
<path d="M114.7,685.3 V675" stroke="#146014" stroke-width="1.8"/><rect x="113.7" y="674" width="2" height="1.4" fill="#28c028"/>
<path d="M127.8,685.3 V675" stroke="#146014" stroke-width="1.8"/><rect x="126.8" y="674" width="2" height="1.4" fill="#28c028"/>
<path d="M140.9,685.3 V675" stroke="#146014" stroke-width="1.8"/><rect x="139.9" y="674" width="2" height="1.4" fill="#28c028"/>
<path d="M153.5,685.3 V675" stroke="#146014" stroke-width="1.8"/><rect x="152.5" y="674" width="2" height="1.4" fill="#28c028"/>
<path d="M166.5,685.3 V675" stroke="#146014" stroke-width="1.8"/><rect x="165.5" y="674" width="2" height="1.4" fill="#28c028"/>
<path d="M179.5,685.3 V675" stroke="#146014" stroke-width="1.8"/><rect x="178.5" y="674" width="2" height="1.4" fill="#28c028"/>
</g>
<path d="M105,692.8 H118 L115,698.8 H102z" fill="#a89818" opacity="0.8"/><path d="M106.5,694.3 H115.5 L113.8,697.3 H104.8z" fill="#181818" opacity="0.75"/>
<path d="M121,692.8 H134 L131,698.8 H118z" fill="#188a98" opacity="0.8"/><path d="M122.5,694.3 H131.5 L129.8,697.3 H120.8z" fill="#181818" opacity="0.75"/>
<path d="M134,692.8 H147 L144,698.8 H131z" fill="#a01414" opacity="0.8"/><path d="M135.5,694.3 H144.5 L142.8,697.3 H133.8z" fill="#181818" opacity="0.75"/>
<path d="M147,692.8 H160 L157,698.8 H144z" fill="#148c14" opacity="0.8"/><path d="M148.5,694.3 H157.5 L155.8,697.3 H146.8z" fill="#181818" opacity="0.75"/>
<path d="M160,692.8 H173 L170,698.8 H157z" fill="#901460" opacity="0.8"/><path d="M161.5,694.3 H170.5 L168.8,697.3 H159.8z" fill="#181818" opacity="0.75"/>
<rect x="170" y="693.5" width="4" height="3" rx="1" fill="#3a7ad0"/>
<circle cx="99.8" cy="712.9" r="3.6" fill="#1a1a1a" stroke="#333" stroke-width="0.8"/>
<rect x="108.5" y="706.5" width="100" height="14" rx="3" fill="#0a0a0a" stroke="#222" stroke-width="0.6"/>
<rect x="132" y="711" width="7.5" height="4" fill="#bcbcbc"/><rect x="143" y="712" width="3" height="6" fill="#444"/><rect x="148" y="712" width="3" height="6" fill="#444"/>
</svg>
<svg class="a" style="left:0;top:0" width="750" height="718">
<rect x="400.3" y="568.8" width="254.4" height="160" fill="#f6c12c"/>
<text x="418" y="583.8" font-family="Liberation Sans" font-weight="bold" font-size="9" fill="#1e1e1e" textLength="39" lengthAdjust="spacingAndGlyphs" stroke="#1e1e1e" stroke-width="0.3">Hantek</text>
<rect x="419" y="591" width="215.2" height="82" rx="7" fill="#fff"/>
<text x="457.6" y="606.5" font-family="Liberation Sans" font-weight="bold" font-size="9.4" fill="#2c2c60" textLength="37.6" lengthAdjust="spacingAndGlyphs" stroke="#2c2c60" stroke-width="0.25">Hantek</text>
<text x="492" y="619" font-family="Liberation Serif" font-weight="bold" font-size="6.6" fill="#1a1a1a" textLength="66.7" lengthAdjust="spacingAndGlyphs">Certificate Of Calibration</text>
<rect x="480" y="627.5" width="47.2" height="5.4" fill="#b8b0b0"/><text x="456" y="631.5" font-family="Liberation Serif" font-weight="bold" font-size="3.6" fill="#222">Certificate No:<tspan font-weight="normal">DSO4254CCN171300200001</tspan></text>
<text x="456" y="639.8" font-family="Liberation Serif" font-weight="bold" font-size="3.6" fill="#222">Manufacturer:<tspan font-weight="normal">Hantek</tspan></text>
<text x="533.3" y="639.8" font-family="Liberation Serif" font-weight="bold" font-size="3.6" fill="#222">Description:<tspan font-weight="normal">OSCILLOSCOPE</tspan></text>
<rect x="473.9" y="643.5" width="17.3" height="5.4" fill="#b8b0b0"/><text x="456" y="647.5" font-family="Liberation Serif" font-weight="bold" font-size="3.6" fill="#222">Model No:<tspan font-weight="normal">DSO4254C</tspan></text>
<rect x="549.3" y="643.5" width="29.9" height="5.4" fill="#b8b0b0"/><text x="533.3" y="647.5" font-family="Liberation Serif" font-weight="bold" font-size="3.6" fill="#222">Serial No:<tspan font-weight="normal">CN171300200001</tspan></text>
<rect x="488.8" y="651.5" width="22.4" height="5.4" fill="#b8b0b0"/><text x="456" y="655.5" font-family="Liberation Serif" font-weight="bold" font-size="3.6" fill="#222">Date of Calibration:<tspan font-weight="normal">22-MAR-2017</tspan></text>
<text x="456" y="663.3" font-family="Liberation Serif" font-weight="bold" font-size="3.6" fill="#222">Temperature:<tspan font-weight="normal">(23±5)°C</tspan></text>
<text x="533.3" y="663.3" font-family="Liberation Serif" font-weight="bold" font-size="3.6" fill="#222">Humidity:<tspan font-weight="normal">(40 to 75)%RH</tspan></text>
<rect x="419" y="680.4" width="215.2" height="18" fill="#d2312a"/>
<text x="480.4" y="688.6" font-family="Liberation Sans" font-weight="bold" font-size="7.2" fill="#3a1410" textLength="92" lengthAdjust="spacingAndGlyphs">IMPORTANT DOCUMENT</text>
<text x="451" y="696.4" font-family="Liberation Sans" font-weight="bold" font-size="7.2" fill="#3a1410" textLength="151" lengthAdjust="spacingAndGlyphs">CALIBRATION CERTIFICATE ENCLOSED</text>
<text x="466" y="709" font-family="Liberation Sans" font-weight="bold" font-size="3.8" fill="#2a1a10" textLength="51" lengthAdjust="spacingAndGlyphs">Documentación Importante</text>
<text x="466" y="713" font-family="Liberation Sans" font-weight="bold" font-size="3.8" fill="#2a1a10" textLength="62" lengthAdjust="spacingAndGlyphs">Certificado de calibración adjunto</text>
<text x="466" y="717.5" font-family="Liberation Sans" font-weight="bold" font-size="3.8" fill="#2a1a10" textLength="42" lengthAdjust="spacingAndGlyphs">Document Important</text>
<rect x="542.0" y="710.6" width="2.6" height="2.8" fill="#5a4a30" opacity="0.75"/><rect x="545.4" y="710.6" width="2.6" height="2.8" fill="#5a4a30" opacity="0.75"/><rect x="548.8" y="710.6" width="2.6" height="2.8" fill="#5a4a30" opacity="0.75"/><rect x="552.2" y="710.6" width="2.6" height="2.8" fill="#5a4a30" opacity="0.75"/><rect x="555.6" y="710.6" width="2.6" height="2.8" fill="#5a4a30" opacity="0.75"/><rect x="559.0" y="710.6" width="2.6" height="2.8" fill="#5a4a30" opacity="0.75"/><rect x="562.4" y="710.6" width="2.6" height="2.8" fill="#5a4a30" opacity="0.75"/><rect x="565.8" y="710.6" width="2.6" height="2.8" fill="#5a4a30" opacity="0.75"/><rect x="569.2" y="710.6" width="2.6" height="2.8" fill="#5a4a30" opacity="0.75"/><rect x="572.6" y="710.6" width="2.6" height="2.8" fill="#5a4a30" opacity="0.75"/>
<text x="605.5" y="706" font-family="Liberation Sans" font-weight="bold" font-size="3.8" fill="#2a1a10" textLength="28.5" lengthAdjust="spacingAndGlyphs">Do Not Discard</text>
<circle cx="619.5" cy="719" r="10" fill="none" stroke="#d0201a" stroke-width="1.6"/><path d="M612.5,712 L626.5,726" stroke="#d0201a" stroke-width="1.6"/><circle cx="616" cy="714.5" r="1.4" fill="#222"/><path d="M615.5,716 v3 l-1,3 M615.5,717 l3,1" stroke="#222" stroke-width="1" fill="none"/>
<rect x="419.0" y="713.3" width="0.5" height="6" fill="#222"/><rect x="420.0" y="713.3" width="0.8" height="6" fill="#222"/><rect x="421.6" y="713.3" width="1.1" height="6" fill="#222"/><rect x="423.2" y="713.3" width="1.1" height="6" fill="#222"/><rect x="424.8" y="713.3" width="0.8" height="6" fill="#222"/><rect x="426.4" y="713.3" width="1.1" height="6" fill="#222"/><rect x="428.0" y="713.3" width="0.5" height="6" fill="#222"/><rect x="429.3" y="713.3" width="1.1" height="6" fill="#222"/><rect x="431.2" y="713.3" width="0.8" height="6" fill="#222"/><rect x="432.5" y="713.3" width="0.5" height="6" fill="#222"/><rect x="433.5" y="713.3" width="1.1" height="6" fill="#222"/><rect x="435.4" y="713.3" width="1.1" height="6" fill="#222"/><rect x="437.0" y="713.3" width="1.1" height="6" fill="#222"/><rect x="438.6" y="713.3" width="0.5" height="6" fill="#222"/><rect x="439.6" y="713.3" width="0.8" height="6" fill="#222"/><rect x="440.9" y="713.3" width="0.8" height="6" fill="#222"/><rect x="442.5" y="713.3" width="1.1" height="6" fill="#222"/><rect x="444.4" y="713.3" width="1.1" height="6" fill="#222"/><rect x="446.3" y="713.3" width="0.8" height="6" fill="#222"/><rect x="447.9" y="713.3" width="0.5" height="6" fill="#222"/><rect x="449.2" y="713.3" width="0.5" height="6" fill="#222"/><rect x="450.2" y="713.3" width="0.5" height="6" fill="#222"/><rect x="451.5" y="713.3" width="0.5" height="6" fill="#222"/><rect x="452.8" y="713.3" width="1.1" height="6" fill="#222"/><rect x="454.7" y="713.3" width="1.1" height="6" fill="#222"/><rect x="456.6" y="713.3" width="0.8" height="6" fill="#222"/><rect x="458.2" y="713.3" width="1.1" height="6" fill="#222"/>
</svg>
</body></html>
